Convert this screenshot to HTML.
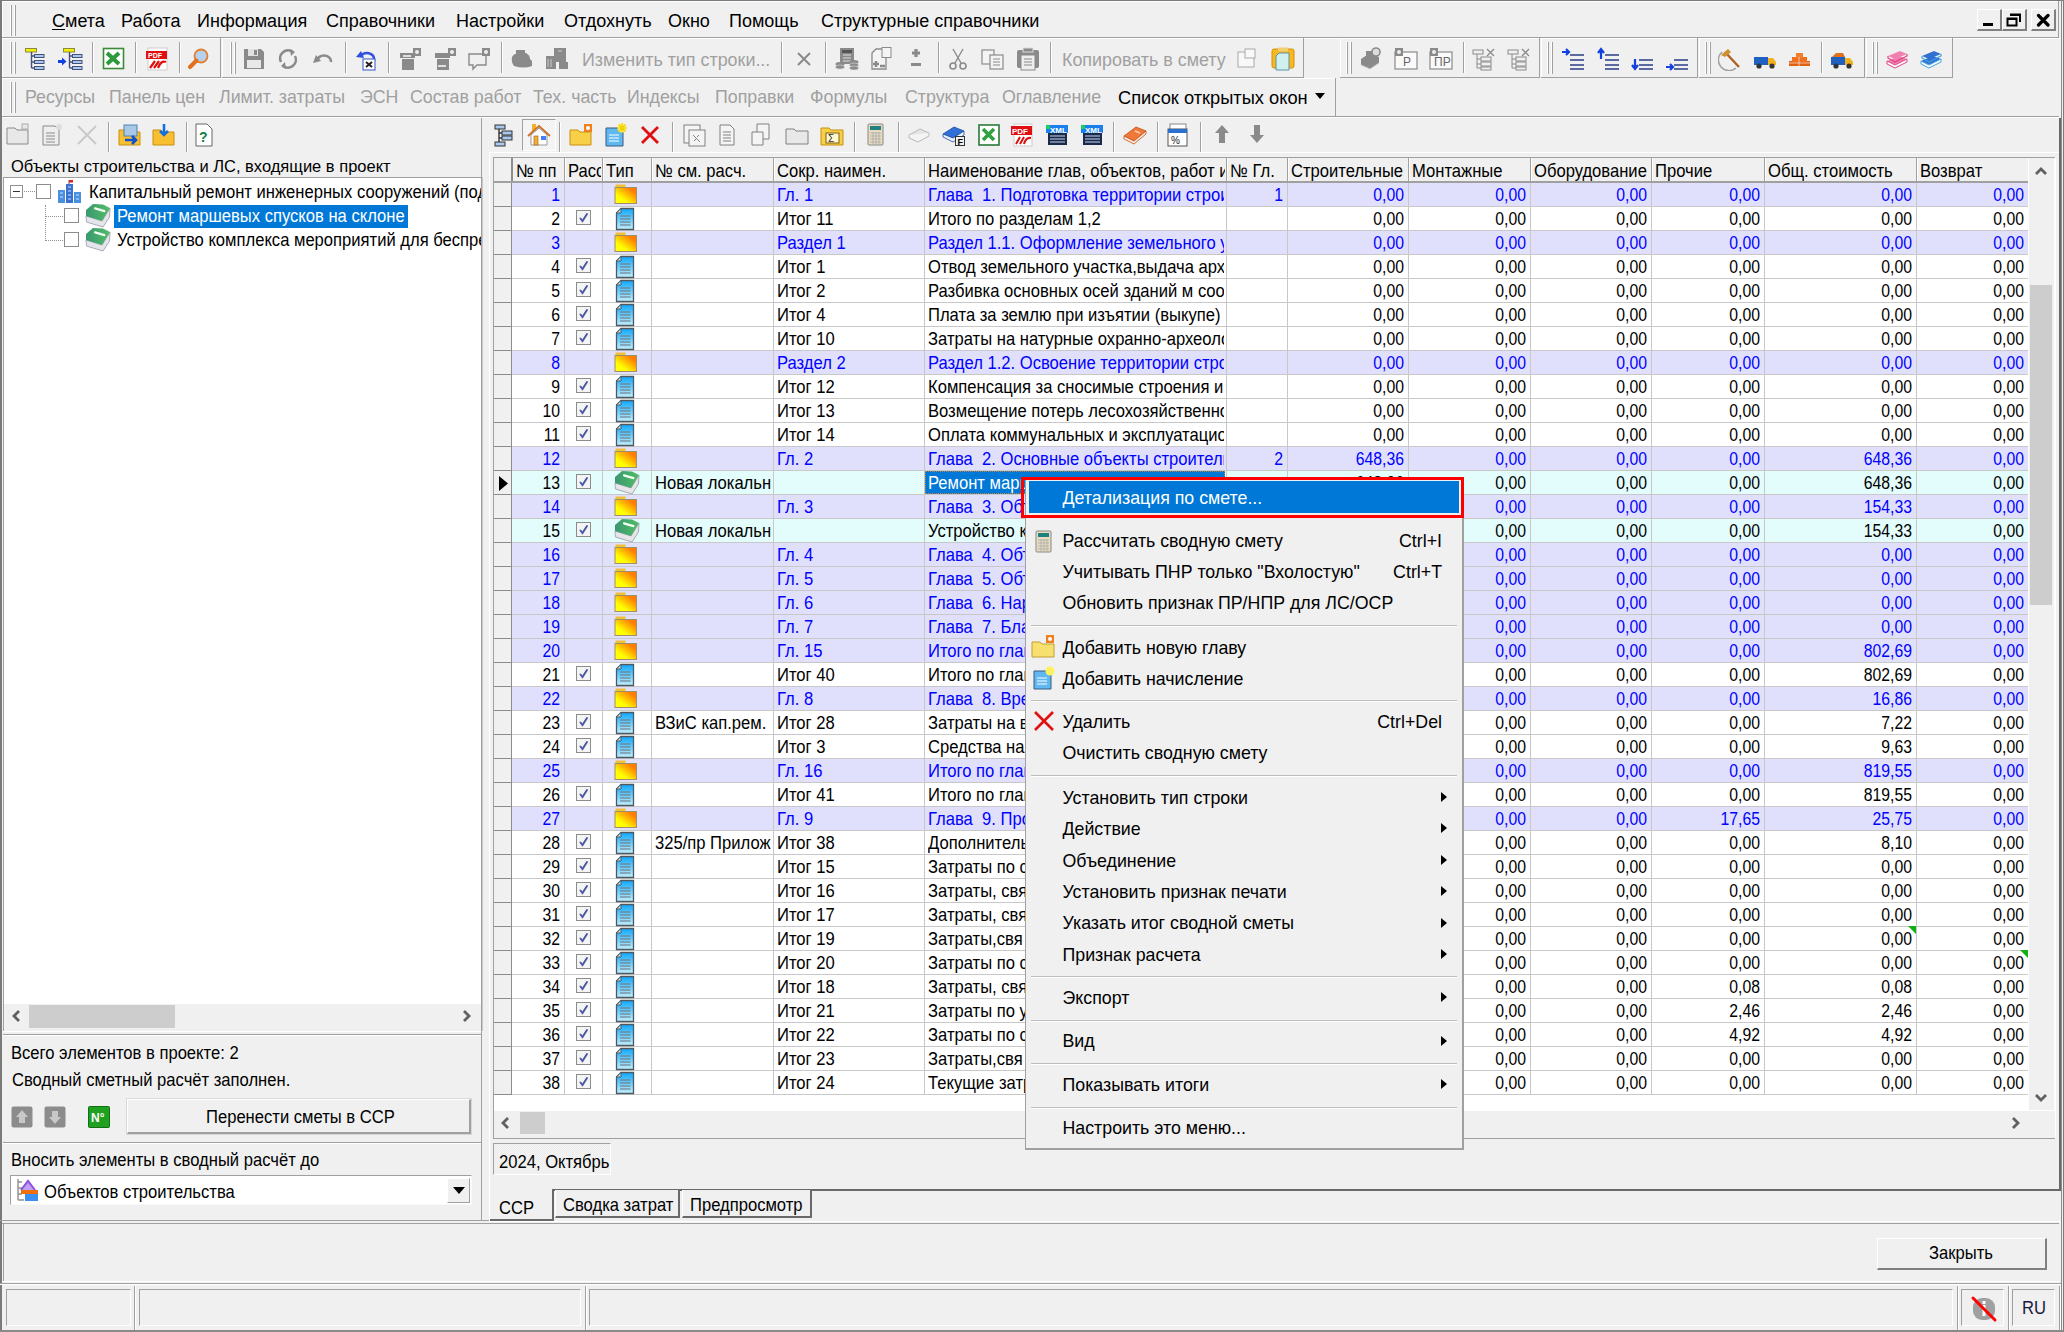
<!DOCTYPE html>
<html><head><meta charset="utf-8"><title>ССР</title>
<style>
*{margin:0;padding:0;box-sizing:border-box}
html,body{width:2064px;height:1332px;overflow:hidden}
body{position:relative;background:#f0f0f0;font-family:"Liberation Sans",sans-serif}
.a{position:absolute}
.t{position:absolute;white-space:nowrap;line-height:1;color:#000}
u{text-decoration:underline;text-underline-offset:2px}
</style></head><body>
<div class="a" style="left:0px;top:0px;width:2064px;height:1px;background:#7a7a7a"></div>
<div class="a" style="left:0px;top:0px;width:2px;height:1332px;background:#7a7a7a"></div>
<div class="a" style="left:2061px;top:0px;width:1px;height:1332px;background:#8a8a8a"></div>
<div class="a" style="left:2063px;top:0px;width:1px;height:1332px;background:#7a7a7a"></div>
<div class="a" style="left:0px;top:1330px;width:2064px;height:2px;background:#8a8a8a"></div>
<div class="a" style="left:2px;top:1px;width:2057px;height:1px;background:#fff"></div>
<div class="a" style="left:2px;top:1px;width:1px;height:37px;background:#fff"></div>
<div class="a" style="left:2px;top:37px;width:2057px;height:1px;background:#a0a0a0"></div>
<div class="a" style="left:2058px;top:1px;width:1px;height:37px;background:#a0a0a0"></div>
<div class="a" style="left:10px;top:5px;width:1px;height:31px;background:#fff"></div>
<div class="a" style="left:11px;top:5px;width:1px;height:31px;background:#a0a0a0"></div>
<div class="a" style="left:14px;top:5px;width:1px;height:31px;background:#fff"></div>
<div class="a" style="left:15px;top:5px;width:1px;height:31px;background:#a0a0a0"></div>
<div class="t" style="left:52px;top:12.36px;font-size:18px;color:#000;"><u>С</u>мета</div>
<div class="t" style="left:121px;top:12.36px;font-size:18px;color:#000;">Работа</div>
<div class="t" style="left:197px;top:12.36px;font-size:18px;color:#000;">Информация</div>
<div class="t" style="left:326px;top:12.36px;font-size:18px;color:#000;">Справочники</div>
<div class="t" style="left:456px;top:12.36px;font-size:18px;color:#000;">Настройки</div>
<div class="t" style="left:564px;top:12.36px;font-size:18px;color:#000;">Отдохнуть</div>
<div class="t" style="left:668px;top:12.36px;font-size:18px;color:#000;">Окно</div>
<div class="t" style="left:729px;top:12.36px;font-size:18px;color:#000;">Помощь</div>
<div class="t" style="left:821px;top:12.36px;font-size:18px;color:#000;">Структурные справочники</div>
<div class="a" style="left:1977px;top:9px;width:25px;height:22px;background:#f0f0f0;border-top:1px solid #fff;border-left:1px solid #fff;border-right:2px solid #808080;border-bottom:2px solid #808080"></div>
<div class="a" style="left:2002px;top:9px;width:25px;height:22px;background:#f0f0f0;border-top:1px solid #fff;border-left:1px solid #fff;border-right:2px solid #808080;border-bottom:2px solid #808080"></div>
<div class="a" style="left:2031px;top:9px;width:25px;height:22px;background:#f0f0f0;border-top:1px solid #fff;border-left:1px solid #fff;border-right:2px solid #808080;border-bottom:2px solid #808080"></div>
<div class="a" style="left:1983px;top:23px;width:10px;height:3px;background:#000"></div>
<svg class="a" style="left:2006px;top:13px;" width="16" height="14" viewBox="0 0 16 14"><path d="M4 1.5 H14 V9 M1.5 5.5 H10.5 V12.5 H1.5 Z" stroke="#000" stroke-width="2" fill="none"/><rect x="4" y="1" width="10" height="2" fill="#000"/><rect x="1" y="5" width="9" height="2" fill="#000"/></svg>
<svg class="a" style="left:2036px;top:13px;" width="15" height="14" viewBox="0 0 15 14"><path d="M2.5 2.5 L12 12 M12 2.5 L2.5 12" stroke="#000" stroke-width="3.2" stroke-linecap="round"/></svg>
<div class="a" style="left:2px;top:38px;width:2057px;height:1px;background:#fff"></div>
<div class="a" style="left:2px;top:38px;width:219px;height:40px;background:#f0f0f0"></div>
<div class="a" style="left:2px;top:38px;width:219px;height:1px;background:#fff"></div>
<div class="a" style="left:2px;top:38px;width:1px;height:40px;background:#fff"></div>
<div class="a" style="left:2px;top:77px;width:219px;height:1px;background:#a0a0a0"></div>
<div class="a" style="left:220px;top:38px;width:1px;height:40px;background:#a0a0a0"></div>
<div class="a" style="left:10px;top:42px;width:1px;height:32px;background:#fff"></div>
<div class="a" style="left:11px;top:42px;width:1px;height:32px;background:#a0a0a0"></div>
<div class="a" style="left:14px;top:42px;width:1px;height:32px;background:#fff"></div>
<div class="a" style="left:15px;top:42px;width:1px;height:32px;background:#a0a0a0"></div>
<svg class="a" style="left:23px;top:47px;" width="28" height="24" viewBox="0 0 28 24"><rect x="2.5" y="1.5" width="11" height="3.5" fill="#f0f000" stroke="#8a8a40" stroke-width="1"/><path d="M8.5 5 V21 M8.5 9 H11 M8.5 15 H11 M8.5 21 H11" stroke="#44507a" stroke-width="1.4" fill="none"/><rect x="11.5" y="7.5" width="9.5" height="3" fill="#a8c8f0" stroke="#44507a" stroke-width="1"/><rect x="11.5" y="13.5" width="9.5" height="3" fill="#a8c8f0" stroke="#44507a" stroke-width="1"/><rect x="11.5" y="19.5" width="9.5" height="3" fill="#a8c8f0" stroke="#44507a" stroke-width="1"/></svg>
<svg class="a" style="left:56px;top:47px;" width="28" height="24" viewBox="0 0 28 24"><rect x="7.5" y="1.5" width="11" height="3.5" fill="#f0f000" stroke="#8a8a40" stroke-width="1"/><path d="M13.5 5 V21 M13.5 9 H16 M13.5 15 H16 M13.5 21 H16" stroke="#44507a" stroke-width="1.4" fill="none"/><rect x="16.5" y="7.5" width="9.5" height="3" fill="#a8c8f0" stroke="#44507a" stroke-width="1"/><rect x="16.5" y="13.5" width="9.5" height="3" fill="#a8c8f0" stroke="#44507a" stroke-width="1"/><rect x="16.5" y="19.5" width="9.5" height="3" fill="#a8c8f0" stroke="#44507a" stroke-width="1"/><path d="M2 14.5 H7" stroke="#1040e0" stroke-width="3"/><path d="M6 10.5 L10.5 14.5 L6 18.5 Z" fill="#1040e0"/></svg>
<div class="a" style="left:92px;top:42px;width:1px;height:31px;background:#a0a0a0"></div>
<div class="a" style="left:93px;top:42px;width:1px;height:31px;background:#fff"></div>
<svg class="a" style="left:102px;top:47px;" width="24" height="24" viewBox="0 0 24 24"><rect x="1.5" y="1.5" width="20" height="20" fill="#fff" stroke="#3a8a3a" stroke-width="1.6"/><path d="M5 6 L17 17 M17 6 L5 17" stroke="#2a9a3a" stroke-width="4"/></svg>
<div class="a" style="left:135px;top:42px;width:1px;height:31px;background:#a0a0a0"></div>
<div class="a" style="left:136px;top:42px;width:1px;height:31px;background:#fff"></div>
<svg class="a" style="left:145px;top:47px;" width="24" height="24" viewBox="0 0 24 24"><rect x="3" y="1" width="19" height="22" fill="#fff" stroke="#ccc"/><rect x="1" y="4" width="21" height="8" fill="#e01010"/><text x="3" y="11" font-size="7" font-family="Liberation Sans" font-weight="bold" fill="#fff">PDF</text><path d="M5 21 L10 14 M9 21 L14 14 M13 21 Q16 13 21 15" stroke="#e01010" stroke-width="2.2" fill="none"/></svg>
<div class="a" style="left:179px;top:42px;width:1px;height:31px;background:#a0a0a0"></div>
<div class="a" style="left:180px;top:42px;width:1px;height:31px;background:#fff"></div>
<svg class="a" style="left:187px;top:47px;" width="24" height="24" viewBox="0 0 24 24"><circle cx="14" cy="9" r="6.5" fill="#b8d0f0" stroke="#e08030" stroke-width="1.8"/><path d="M9.5 13.5 L3 20" stroke="#e07020" stroke-width="4" stroke-linecap="round"/></svg>
<div class="a" style="left:222px;top:38px;width:1082px;height:40px;background:#f0f0f0"></div>
<div class="a" style="left:222px;top:38px;width:1082px;height:1px;background:#fff"></div>
<div class="a" style="left:222px;top:38px;width:1px;height:40px;background:#fff"></div>
<div class="a" style="left:222px;top:77px;width:1082px;height:1px;background:#a0a0a0"></div>
<div class="a" style="left:1303px;top:38px;width:1px;height:40px;background:#a0a0a0"></div>
<div class="a" style="left:230px;top:42px;width:1px;height:32px;background:#fff"></div>
<div class="a" style="left:231px;top:42px;width:1px;height:32px;background:#a0a0a0"></div>
<div class="a" style="left:234px;top:42px;width:1px;height:32px;background:#fff"></div>
<div class="a" style="left:235px;top:42px;width:1px;height:32px;background:#a0a0a0"></div>
<svg class="a" style="left:242px;top:47px;" width="24" height="24" viewBox="0 0 24 24"><path d="M2 2 H19 L22 5 V22 H2 Z" fill="#8a8a8a"/><rect x="6" y="2" width="10" height="7" fill="#e0e0e0"/><rect x="12" y="3" width="3" height="5" fill="#8a8a8a"/><rect x="5" y="13" width="14" height="8" fill="#e8e8e8"/></svg>
<svg class="a" style="left:276px;top:47px;" width="24" height="24" viewBox="0 0 24 24"><path d="M5 15 A8 8 0 0 1 17 5 M19 9 A8 8 0 0 1 7 19" stroke="#8a8a8a" stroke-width="2.6" fill="none"/><path d="M14 2 L19 5 L15 9 Z M10 22 L5 19 L9 15 Z" fill="#8a8a8a"/></svg>
<svg class="a" style="left:311px;top:47px;" width="24" height="24" viewBox="0 0 24 24"><path d="M6 14 A7 6 0 0 1 20 15" stroke="#8a8a8a" stroke-width="2.6" fill="none"/><path d="M2 16 L5 8 L10 14 Z" fill="#8a8a8a"/></svg>
<div class="a" style="left:345px;top:42px;width:1px;height:31px;background:#a0a0a0"></div>
<div class="a" style="left:346px;top:42px;width:1px;height:31px;background:#fff"></div>
<svg class="a" style="left:355px;top:47px;" width="24" height="24" viewBox="0 0 24 24"><path d="M6 9 A7 6 0 0 1 19 12 V14" stroke="#3050e0" stroke-width="2.6" fill="none"/><path d="M1 10 L6 4 L9 11 Z" fill="#3050e0"/><rect x="8" y="12" width="12" height="11" fill="#fff" stroke="#5070d0" stroke-width="1.2"/><path d="M11 15 L17 20 M17 15 L11 20" stroke="#222" stroke-width="2"/></svg>
<div class="a" style="left:388px;top:42px;width:1px;height:31px;background:#a0a0a0"></div>
<div class="a" style="left:389px;top:42px;width:1px;height:31px;background:#fff"></div>
<svg class="a" style="left:398px;top:47px;" width="24" height="24" viewBox="0 0 24 24"><rect x="2" y="6" width="15" height="5" fill="#8a8a8a"/><rect x="4" y="12" width="12" height="11" fill="#8a8a8a"/><rect x="5" y="8" width="8" height="2" fill="#e0e0e0"/><rect x="15" y="1" width="8" height="8" fill="#8a8a8a"/><circle cx="19" cy="5" r="2" fill="#eee"/></svg>
<svg class="a" style="left:433px;top:47px;" width="24" height="24" viewBox="0 0 24 24"><rect x="2" y="6" width="15" height="5" fill="#8a8a8a"/><rect x="4" y="12" width="12" height="11" fill="#8a8a8a"/><rect x="5" y="18" width="8" height="2" fill="#e0e0e0"/><rect x="15" y="1" width="8" height="8" fill="#8a8a8a"/><circle cx="19" cy="5" r="2" fill="#eee"/></svg>
<svg class="a" style="left:467px;top:47px;" width="24" height="24" viewBox="0 0 24 24"><path d="M2 7 H19 V18 H10 L6 22 V18 H2 Z" fill="none" stroke="#8a8a8a" stroke-width="1.4"/><rect x="15" y="1" width="8" height="8" fill="#8a8a8a"/><circle cx="19" cy="5" r="2" fill="#eee"/></svg>
<div class="a" style="left:501px;top:42px;width:1px;height:31px;background:#a0a0a0"></div>
<div class="a" style="left:502px;top:42px;width:1px;height:31px;background:#fff"></div>
<svg class="a" style="left:510px;top:47px;" width="24" height="24" viewBox="0 0 24 24"><path d="M2 10 Q4 6 10 6 H16 Q20 8 20 12 L22 14 V19 Q14 22 4 19 Q1 15 2 10 Z" fill="#8a8a8a"/><rect x="6" y="3" width="9" height="4" fill="#8a8a8a"/></svg>
<svg class="a" style="left:545px;top:47px;" width="24" height="24" viewBox="0 0 24 24"><rect x="9" y="1" width="12" height="14" fill="#8a8a8a"/><rect x="1" y="9" width="10" height="13" fill="#8a8a8a"/><rect x="14" y="15" width="9" height="7" fill="#8a8a8a"/><path d="M3 12 V20 M6 12 V20 M13 4 H17" stroke="#ccc"/></svg>
<div class="t" style="left:582px;top:51.85px;font-size:17.9px;color:#a0a0a0;">Изменить тип строки...</div>
<div class="a" style="left:781px;top:42px;width:1px;height:31px;background:#a0a0a0"></div>
<div class="a" style="left:782px;top:42px;width:1px;height:31px;background:#fff"></div>
<svg class="a" style="left:795px;top:50px;" width="18" height="18" viewBox="0 0 18 18"><path d="M3 3 L15 15 M15 3 L3 15" stroke="#8a8a8a" stroke-width="2"/></svg>
<div class="a" style="left:825px;top:42px;width:1px;height:31px;background:#a0a0a0"></div>
<div class="a" style="left:826px;top:42px;width:1px;height:31px;background:#fff"></div>
<svg class="a" style="left:835px;top:47px;" width="24" height="24" viewBox="0 0 24 24"><rect x="5" y="1" width="14" height="16" fill="#8a8a8a"/><rect x="7" y="3" width="10" height="3" fill="#555"/><path d="M8 8 H16 M8 11 H16 M8 14 H16" stroke="#ddd" stroke-width="1"/><ellipse cx="5" cy="17" rx="4.5" ry="2" fill="#8a8a8a"/><ellipse cx="5" cy="20" rx="4.5" ry="2" fill="#8a8a8a" stroke="#ddd" stroke-width=".6"/><ellipse cx="19" cy="15" rx="4.5" ry="2" fill="#8a8a8a"/><ellipse cx="19" cy="18" rx="4.5" ry="2" fill="#8a8a8a" stroke="#ddd" stroke-width=".6"/><ellipse cx="19" cy="21" rx="4.5" ry="2" fill="#8a8a8a" stroke="#ddd" stroke-width=".6"/></svg>
<svg class="a" style="left:870px;top:47px;" width="24" height="24" viewBox="0 0 24 24"><path d="M2 6 L6 2 H16 V22 H2 Z" fill="#f4f4f4" stroke="#8a8a8a" stroke-width="1.3"/><rect x="12" y="0.5" width="9" height="10" fill="#f4f4f4" stroke="#8a8a8a"/><path d="M3 17 H9 M6 14 V20 M10 19 H15" stroke="#8a8a8a" stroke-width="2.4"/></svg>
<svg class="a" style="left:906px;top:48px;" width="20" height="24" viewBox="0 0 20 24"><path d="M6 5 H14 M10 1 V9" stroke="#8a8a8a" stroke-width="3.2"/><rect x="5" y="15" width="10" height="3" fill="#8a8a8a"/></svg>
<div class="a" style="left:938px;top:42px;width:1px;height:31px;background:#a0a0a0"></div>
<div class="a" style="left:939px;top:42px;width:1px;height:31px;background:#fff"></div>
<svg class="a" style="left:947px;top:47px;" width="24" height="24" viewBox="0 0 24 24"><path d="M6 2 L14 16 M16 2 L8 16" stroke="#8a8a8a" stroke-width="1.4" fill="none"/><circle cx="6" cy="19" r="3" fill="none" stroke="#8a8a8a" stroke-width="1.6"/><circle cx="16" cy="19" r="3" fill="none" stroke="#8a8a8a" stroke-width="1.6"/></svg>
<svg class="a" style="left:981px;top:47px;" width="24" height="24" viewBox="0 0 24 24"><rect x="1" y="3" width="12" height="14" fill="#f4f4f4" stroke="#8a8a8a" stroke-width="1.2"/><rect x="9" y="8" width="13" height="14" fill="#f4f4f4" stroke="#8a8a8a" stroke-width="1.2"/><path d="M12 12 H19 M12 15 H19 M12 18 H19" stroke="#8a8a8a"/></svg>
<svg class="a" style="left:1016px;top:47px;" width="24" height="24" viewBox="0 0 24 24"><rect x="1" y="3" width="22" height="18" rx="2" fill="#8a8a8a"/><rect x="7" y="1" width="10" height="4" fill="#8a8a8a" stroke="#ddd"/><rect x="5" y="8" width="14" height="15" fill="#eee" stroke="#8a8a8a"/><path d="M8 12 H16 M8 15 H16 M8 18 H16" stroke="#8a8a8a"/></svg>
<div class="a" style="left:1050px;top:42px;width:1px;height:31px;background:#a0a0a0"></div>
<div class="a" style="left:1051px;top:42px;width:1px;height:31px;background:#fff"></div>
<div class="t" style="left:1062px;top:51.85px;font-size:17.9px;color:#a0a0a0;">Копировать в смету</div>
<svg class="a" style="left:1236px;top:47px;" width="24" height="24" viewBox="0 0 24 24"><rect x="2" y="5" width="16" height="15" fill="#f8f8f8" stroke="#a8a8a8"/><rect x="9" y="2" width="10" height="9" fill="#f8f8f8" stroke="#a8a8a8"/></svg>
<svg class="a" style="left:1271px;top:47px;" width="24" height="24" viewBox="0 0 24 24"><rect x="1" y="2" width="22" height="19" rx="2" fill="#f8b820" stroke="#d89010"/><rect x="7" y="0.5" width="10" height="4" rx="1" fill="#f0d070"/><path d="M5 9 L8 6 H18 V23 H5 Z" fill="#d0f0f0" stroke="#6090a0"/></svg>
<div class="a" style="left:1340px;top:38px;width:200px;height:40px;background:#f0f0f0"></div>
<div class="a" style="left:1340px;top:38px;width:200px;height:1px;background:#fff"></div>
<div class="a" style="left:1340px;top:38px;width:1px;height:40px;background:#fff"></div>
<div class="a" style="left:1340px;top:77px;width:200px;height:1px;background:#a0a0a0"></div>
<div class="a" style="left:1539px;top:38px;width:1px;height:40px;background:#a0a0a0"></div>
<div class="a" style="left:1346px;top:42px;width:1px;height:32px;background:#fff"></div>
<div class="a" style="left:1347px;top:42px;width:1px;height:32px;background:#a0a0a0"></div>
<div class="a" style="left:1350px;top:42px;width:1px;height:32px;background:#fff"></div>
<div class="a" style="left:1351px;top:42px;width:1px;height:32px;background:#a0a0a0"></div>
<svg class="a" style="left:1358px;top:47px;" width="26" height="24" viewBox="0 0 26 24"><path d="M3 12 L12 6 L21 10 V16 L12 22 L3 18 Z" fill="#8a8a8a"/><path d="M3 18 L12 22 L21 16" stroke="#ccc" fill="none"/><rect x="8" y="4" width="6" height="5" fill="#8a8a8a"/><circle cx="18" cy="5" r="4" fill="#ddd" stroke="#8a8a8a" stroke-width="1.6"/></svg>
<svg class="a" style="left:1394px;top:47px;" width="24" height="24" viewBox="0 0 24 24"><rect x="1" y="5" width="22" height="17" fill="#fafafa" stroke="#8a8a8a" stroke-width="1.2"/><rect x="1" y="1" width="8" height="8" fill="#8a8a8a"/><circle cx="5" cy="5" r="2" fill="#eee"/><text x="9" y="19" font-size="12" font-family="Liberation Sans" fill="#666">P</text></svg>
<svg class="a" style="left:1429px;top:47px;" width="24" height="24" viewBox="0 0 24 24"><rect x="1" y="5" width="22" height="17" fill="#fafafa" stroke="#8a8a8a" stroke-width="1.2"/><rect x="1" y="1" width="8" height="8" fill="#8a8a8a"/><circle cx="5" cy="5" r="2" fill="#eee"/><text x="5" y="19" font-size="12" font-family="Liberation Sans" fill="#666">ПР</text></svg>
<div class="a" style="left:1463px;top:42px;width:1px;height:31px;background:#a0a0a0"></div>
<div class="a" style="left:1464px;top:42px;width:1px;height:31px;background:#fff"></div>
<svg class="a" style="left:1472px;top:47px;" width="24" height="24" viewBox="0 0 24 24"><rect x="1" y="3" width="10" height="4" fill="none" stroke="#8a8a8a"/><path d="M5 7 V21 M5 12 H9 M5 17 H9 M5 21 H9" stroke="#8a8a8a"/><rect x="9" y="10" width="10" height="4" fill="none" stroke="#8a8a8a"/><rect x="9" y="15" width="10" height="4" fill="none" stroke="#8a8a8a"/><rect x="9" y="20" width="10" height="3" fill="none" stroke="#8a8a8a"/><path d="M15 2 L22 9 M22 2 L15 9" stroke="#8a8a8a" stroke-width="1.3"/></svg>
<svg class="a" style="left:1507px;top:47px;" width="24" height="24" viewBox="0 0 24 24"><rect x="1" y="3" width="10" height="4" fill="none" stroke="#8a8a8a"/><path d="M5 7 V21 M5 12 H9 M5 17 H9 M5 21 H9" stroke="#8a8a8a"/><rect x="9" y="10" width="10" height="4" fill="none" stroke="#8a8a8a"/><rect x="9" y="15" width="10" height="4" fill="none" stroke="#8a8a8a"/><rect x="9" y="20" width="10" height="3" fill="none" stroke="#8a8a8a"/><path d="M15 2 L22 9 M22 2 L15 9" stroke="#8a8a8a" stroke-width="1.3"/></svg>
<div class="a" style="left:1541px;top:38px;width:157px;height:40px;background:#f0f0f0"></div>
<div class="a" style="left:1541px;top:38px;width:157px;height:1px;background:#fff"></div>
<div class="a" style="left:1541px;top:38px;width:1px;height:40px;background:#fff"></div>
<div class="a" style="left:1541px;top:77px;width:157px;height:1px;background:#a0a0a0"></div>
<div class="a" style="left:1697px;top:38px;width:1px;height:40px;background:#a0a0a0"></div>
<div class="a" style="left:1547px;top:42px;width:1px;height:32px;background:#fff"></div>
<div class="a" style="left:1548px;top:42px;width:1px;height:32px;background:#a0a0a0"></div>
<div class="a" style="left:1551px;top:42px;width:1px;height:32px;background:#fff"></div>
<div class="a" style="left:1552px;top:42px;width:1px;height:32px;background:#a0a0a0"></div>
<svg class="a" style="left:1561px;top:47px;" width="24" height="24" viewBox="0 0 24 24"><path d="M9 8 H23 M9 13 H23 M9 18 H23 M9 22 H23" stroke="#5a6aa0" stroke-width="1.8"/><path d="M1 5 H8 M5 2 L8 5 L5 8" stroke="#1040e0" stroke-width="2.2" fill="none"/></svg>
<svg class="a" style="left:1596px;top:47px;" width="24" height="24" viewBox="0 0 24 24"><path d="M9 8 H23 M9 13 H23 M9 18 H23 M9 22 H23" stroke="#5a6aa0" stroke-width="1.8"/><path d="M5 12 V3 M2 6 L5 2 L8 6" stroke="#1040e0" stroke-width="2.2" fill="none"/></svg>
<svg class="a" style="left:1630px;top:47px;" width="24" height="24" viewBox="0 0 24 24"><path d="M9 13 H23 M9 18 H23 M9 22 H23" stroke="#5a6aa0" stroke-width="1.8"/><path d="M5 12 V22 M2 18 L5 22 L8 18" stroke="#1040e0" stroke-width="2.2" fill="none"/></svg>
<svg class="a" style="left:1665px;top:47px;" width="24" height="24" viewBox="0 0 24 24"><path d="M9 13 H23 M9 18 H23 M9 22 H23" stroke="#5a6aa0" stroke-width="1.8"/><path d="M1 20 H8 M5 17 L8 20 L5 23" stroke="#1040e0" stroke-width="2.2" fill="none"/></svg>
<div class="a" style="left:1699px;top:38px;width:166px;height:40px;background:#f0f0f0"></div>
<div class="a" style="left:1699px;top:38px;width:166px;height:1px;background:#fff"></div>
<div class="a" style="left:1699px;top:38px;width:1px;height:40px;background:#fff"></div>
<div class="a" style="left:1699px;top:77px;width:166px;height:1px;background:#a0a0a0"></div>
<div class="a" style="left:1864px;top:38px;width:1px;height:40px;background:#a0a0a0"></div>
<div class="a" style="left:1705px;top:42px;width:1px;height:32px;background:#fff"></div>
<div class="a" style="left:1706px;top:42px;width:1px;height:32px;background:#a0a0a0"></div>
<div class="a" style="left:1709px;top:42px;width:1px;height:32px;background:#fff"></div>
<div class="a" style="left:1710px;top:42px;width:1px;height:32px;background:#a0a0a0"></div>
<svg class="a" style="left:1718px;top:47px;" width="24" height="24" viewBox="0 0 24 24"><path d="M4 5 A10 10 0 0 0 18 21" stroke="#a0a0a0" stroke-width="1.5" fill="none"/><path d="M7 5 L21 20" stroke="#b06020" stroke-width="2.4"/><path d="M3 8 L10 2 L13 5 L7 10 Z" fill="#d09030"/></svg>
<svg class="a" style="left:1753px;top:47px;" width="24" height="24" viewBox="0 0 24 24"><rect x="1" y="10" width="14" height="8" fill="#2060c0"/><path d="M15 11 H20 L23 15 V18 H15 Z" fill="#f0b020"/><circle cx="6" cy="19" r="2.6" fill="#333"/><circle cx="19" cy="19" r="2.6" fill="#333"/></svg>
<svg class="a" style="left:1787px;top:47px;" width="26" height="24" viewBox="0 0 26 24"><rect x="2" y="14" width="21" height="5" fill="#e06010"/><rect x="5" y="10" width="15" height="5" fill="#f07020"/><rect x="9" y="6" width="7" height="5" fill="#f08030"/><path d="M2 16 H23 M12 14 V19 M12 10 V14" stroke="#fff" stroke-width=".6"/></svg>
<div class="a" style="left:1821px;top:42px;width:1px;height:31px;background:#a0a0a0"></div>
<div class="a" style="left:1822px;top:42px;width:1px;height:31px;background:#fff"></div>
<svg class="a" style="left:1830px;top:47px;" width="26" height="24" viewBox="0 0 26 24"><path d="M2 10 L6 6 H13 L15 10 Z" fill="#e07020"/><rect x="1" y="10" width="14" height="8" fill="#2060c0"/><path d="M15 11 H20 L23 15 V18 H15 Z" fill="#f0b020"/><circle cx="6" cy="19" r="2.6" fill="#333"/><circle cx="19" cy="19" r="2.6" fill="#333"/></svg>
<div class="a" style="left:1866px;top:38px;width:87px;height:40px;background:#f0f0f0"></div>
<div class="a" style="left:1866px;top:38px;width:87px;height:1px;background:#fff"></div>
<div class="a" style="left:1866px;top:38px;width:1px;height:40px;background:#fff"></div>
<div class="a" style="left:1866px;top:77px;width:87px;height:1px;background:#a0a0a0"></div>
<div class="a" style="left:1952px;top:38px;width:1px;height:40px;background:#a0a0a0"></div>
<div class="a" style="left:1872px;top:42px;width:1px;height:32px;background:#fff"></div>
<div class="a" style="left:1873px;top:42px;width:1px;height:32px;background:#a0a0a0"></div>
<div class="a" style="left:1876px;top:42px;width:1px;height:32px;background:#fff"></div>
<div class="a" style="left:1877px;top:42px;width:1px;height:32px;background:#a0a0a0"></div>
<svg class="a" style="left:1885px;top:47px;" width="24" height="24" viewBox="0 0 24 24"><path d="M2 14 L14 9 L22 12 L10 18 Z" fill="#f080b0"/><path d="M2 14 V17 L10 21 L22 15 V12 L10 18 Z" fill="#fff" stroke="#e04080" stroke-width="1"/><path d="M3 9 L15 4 L22 7 L10 12 Z" fill="#f080b0"/><path d="M3 9 V11 L10 15 L22 9 V7" fill="none" stroke="#e04080" stroke-width="1.2"/></svg>
<svg class="a" style="left:1919px;top:47px;" width="24" height="24" viewBox="0 0 24 24"><path d="M2 14 L14 9 L22 12 L10 18 Z" fill="#3070d0"/><path d="M2 14 V17 L10 21 L22 15 V12 L10 18 Z" fill="#fff" stroke="#40a0e0" stroke-width="1"/><path d="M3 9 L15 4 L22 7 L10 12 Z" fill="#3070d0"/><path d="M3 9 V11 L10 15 L22 9 V7" fill="none" stroke="#40a0e0" stroke-width="1.2"/></svg>
<div class="a" style="left:2px;top:78px;width:1334px;height:39px;background:#f0f0f0"></div>
<div class="a" style="left:2px;top:78px;width:1334px;height:1px;background:#fff"></div>
<div class="a" style="left:2px;top:78px;width:1px;height:39px;background:#fff"></div>
<div class="a" style="left:2px;top:116px;width:1334px;height:1px;background:#a0a0a0"></div>
<div class="a" style="left:1335px;top:78px;width:1px;height:39px;background:#a0a0a0"></div>
<div class="a" style="left:10px;top:82px;width:1px;height:31px;background:#fff"></div>
<div class="a" style="left:11px;top:82px;width:1px;height:31px;background:#a0a0a0"></div>
<div class="a" style="left:14px;top:82px;width:1px;height:31px;background:#fff"></div>
<div class="a" style="left:15px;top:82px;width:1px;height:31px;background:#a0a0a0"></div>
<div class="t" style="left:25px;top:89.33px;font-size:17.8px;color:#a0a0a0;">Ресурсы</div>
<div class="t" style="left:109px;top:89.33px;font-size:17.8px;color:#a0a0a0;">Панель цен</div>
<div class="t" style="left:219px;top:89.33px;font-size:17.8px;color:#a0a0a0;">Лимит. затраты</div>
<div class="t" style="left:360px;top:89.33px;font-size:17.8px;color:#a0a0a0;">ЭСН</div>
<div class="t" style="left:410px;top:89.33px;font-size:17.8px;color:#a0a0a0;">Состав работ</div>
<div class="t" style="left:533px;top:89.33px;font-size:17.8px;color:#a0a0a0;">Тех. часть</div>
<div class="t" style="left:627px;top:89.33px;font-size:17.8px;color:#a0a0a0;">Индексы</div>
<div class="t" style="left:715px;top:89.33px;font-size:17.8px;color:#a0a0a0;">Поправки</div>
<div class="t" style="left:810px;top:89.33px;font-size:17.8px;color:#a0a0a0;">Формулы</div>
<div class="t" style="left:905px;top:89.33px;font-size:17.8px;color:#a0a0a0;">Структура</div>
<div class="t" style="left:1002px;top:89.33px;font-size:17.8px;color:#a0a0a0;">Оглавление</div>
<div class="t" style="left:1118px;top:88.91px;font-size:18.3px;color:#000;">Список открытых окон</div>
<svg class="a" style="left:1315px;top:93px;" width="12" height="8" viewBox="0 0 12 8"><path d="M0 0 H10 L5 6 Z" fill="#000"/></svg>
<div class="a" style="left:2px;top:116px;width:2057px;height:1px;background:#a0a0a0"></div>
<div class="a" style="left:2px;top:117px;width:2057px;height:1px;background:#fff"></div>
<svg class="a" style="left:6px;top:123px;" width="24" height="24" viewBox="0 0 24 24"><path d="M1 5 H9 L11 7 H22 V21 H1 Z" fill="#e8e8e8" stroke="#8a8a8a"/><rect x="16" y="1" width="6" height="5" fill="#e8e8e8" stroke="#aaa"/></svg>
<svg class="a" style="left:40px;top:123px;" width="24" height="24" viewBox="0 0 24 24"><path d="M3 3 H15 L19 7 V22 H3 Z" fill="#eee" stroke="#8a8a8a"/><path d="M6 10 H15 M6 13 H15 M6 16 H15 M6 19 H15" stroke="#8a8a8a"/><circle cx="19" cy="4" r="3" fill="#ddd"/></svg>
<svg class="a" style="left:76px;top:124px;" width="22" height="22" viewBox="0 0 22 22"><path d="M2 2 L20 20 M20 2 L2 20" stroke="#c8c8c8" stroke-width="1.8"/></svg>
<div class="a" style="left:108px;top:122px;width:1px;height:30px;background:#a0a0a0"></div>
<div class="a" style="left:109px;top:122px;width:1px;height:30px;background:#fff"></div>
<svg class="a" style="left:118px;top:123px;" width="24" height="24" viewBox="0 0 24 24"><path d="M1 7 H9 L11 9 H22 V22 H1 Z" fill="#f8c030" stroke="#c89010"/><rect x="6" y="2" width="13" height="11" fill="#a8c8e8" stroke="#5080b0"/><path d="M7 17 H17 M14 13 L18 17 L14 21" stroke="#1050d0" stroke-width="2.6" fill="none"/></svg>
<svg class="a" style="left:152px;top:123px;" width="24" height="24" viewBox="0 0 24 24"><path d="M1 7 H9 L11 9 H22 V22 H1 Z" fill="#f8c030" stroke="#c89010"/><path d="M12 1 V12 M8 8 L12 12 L16 8" stroke="#1070e0" stroke-width="2.6" fill="none"/></svg>
<div class="a" style="left:186px;top:122px;width:1px;height:30px;background:#a0a0a0"></div>
<div class="a" style="left:187px;top:122px;width:1px;height:30px;background:#fff"></div>
<svg class="a" style="left:194px;top:123px;" width="24" height="24" viewBox="0 0 24 24"><path d="M2 1 H13 L18 6 V23 H2 Z" fill="#fff" stroke="#666"/><text x="5" y="19" font-size="14" font-weight="bold" font-family="Liberation Sans" fill="#108040">?</text></svg>
<div class="t" style="left:11px;top:158.33px;font-size:16.5px;color:#000;">Объекты строительства и ЛС, входящие в проект</div>
<div class="a" style="left:4px;top:178px;width:477px;height:826px;background:#fff"></div>
<div class="a" style="left:3px;top:177px;width:479px;height:1px;background:#a0a0a0"></div>
<div class="a" style="left:3px;top:177px;width:1px;height:854px;background:#a0a0a0"></div>
<div class="a" style="left:481px;top:177px;width:1px;height:854px;background:#fff"></div>
<div class="a" style="left:482px;top:177px;width:1px;height:854px;background:#c8c8c8"></div>
<div class="a" style="left:3px;top:1031px;width:480px;height:1px;background:#fff"></div>
<div class="a" style="left:10px;top:185px;width:13px;height:13px;border:1px solid #909090;background:#fff"></div>
<div class="a" style="left:13px;top:191px;width:7px;height:1px;background:#333"></div>
<div class="a" style="left:24px;top:191px;width:11px;height:1px;border-top:1px dotted #909090"></div>
<div class="a" style="left:36px;top:184px;width:15px;height:15px;border:1px solid #8c8c8c;background:#fff"></div>
<svg class="a" style="left:57px;top:180px;" width="25" height="24" viewBox="0 0 25 24"><rect x="9" y="4" width="7" height="19" fill="#3a70d0"/><rect x="1" y="10" width="7" height="13" fill="#4a90e0"/><rect x="17" y="12" width="7" height="11" fill="#4a90e0"/><path d="M11 7 H14 M11 11 H14 M11 15 H14 M11 19 H14 M3 13 H6 M3 17 H6 M19 15 H22 M19 19 H22" stroke="#c8e0ff" stroke-width="1.2"/><path d="M12 4 V0" stroke="#555"/><path d="M12 0 H16 V2.5 H12 Z" fill="#e02020"/></svg>
<div class="t" style="left:89px;top:185.45px;font-size:16.6px;color:#000;transform:scaleY(1.1);transform-origin:0 13.05px;clip-path:inset(0 0 0 0);width:392px;overflow:hidden">Капитальный ремонт инженерных сооружений (подпорных стен)</div>
<div class="a" style="left:45px;top:205px;width:1px;height:36px;border-left:1px dotted #909090"></div>
<div class="a" style="left:45px;top:216px;width:18px;height:1px;border-top:1px dotted #909090"></div>
<div class="a" style="left:45px;top:240px;width:18px;height:1px;border-top:1px dotted #909090"></div>
<div class="a" style="left:64px;top:208px;width:15px;height:15px;border:1px solid #8c8c8c;background:#fff"></div>
<svg class="a" style="left:85px;top:204px;" width="26" height="24" viewBox="0 0 26 24"><path d="M1 12 L17 17 L25 4 L24.5 13 L18 23 L1.5 18 Z" fill="#e6e6ea" stroke="#a8aab8" stroke-width="1"/><path d="M1 6 L8 0 L18 0.5 L25 4 L17 17 L1 12 Z" fill="url(#bg)"/><path d="M10 4.4 L19.4 7.1" stroke="#f0fff0" stroke-width="2.2" stroke-linecap="round"/></svg>
<div class="a" style="left:114px;top:205px;width:294px;height:23px;background:#0078d7"></div>
<div class="t" style="left:117px;top:209.45px;font-size:16.6px;color:#fff;transform:scaleY(1.1);transform-origin:0 13.05px;">Ремонт маршевых спусков на склоне</div>
<div class="a" style="left:64px;top:232px;width:15px;height:15px;border:1px solid #8c8c8c;background:#fff"></div>
<svg class="a" style="left:85px;top:228px;" width="26" height="24" viewBox="0 0 26 24"><path d="M1 12 L17 17 L25 4 L24.5 13 L18 23 L1.5 18 Z" fill="#e6e6ea" stroke="#a8aab8" stroke-width="1"/><path d="M1 6 L8 0 L18 0.5 L25 4 L17 17 L1 12 Z" fill="url(#bg)"/><path d="M10 4.4 L19.4 7.1" stroke="#f0fff0" stroke-width="2.2" stroke-linecap="round"/></svg>
<div class="t" style="left:117px;top:233.45px;font-size:16.6px;color:#000;transform:scaleY(1.1);transform-origin:0 13.05px;width:364px;overflow:hidden">Устройство комплекса мероприятий для беспрепятственного</div>
<div class="a" style="left:4px;top:1004px;width:477px;height:26px;background:#f0f0f0"></div>
<svg class="a" style="left:11px;top:1009px;" width="10" height="14" viewBox="0 0 10 14"><path d="M8 2 L3 7 L8 12" stroke="#606060" stroke-width="2.8" fill="none"/></svg>
<div class="a" style="left:29px;top:1005px;width:146px;height:23px;background:#cdcdcd"></div>
<svg class="a" style="left:462px;top:1009px;" width="10" height="14" viewBox="0 0 10 14"><path d="M2 2 L7 7 L2 12" stroke="#606060" stroke-width="2.8" fill="none"/></svg>
<div class="a" style="left:3px;top:1034px;width:478px;height:1px;background:#a0a0a0"></div>
<div class="a" style="left:3px;top:1035px;width:478px;height:1px;background:#fff"></div>
<div class="t" style="left:11px;top:1045.95px;font-size:16.6px;color:#000;transform:scaleY(1.1);transform-origin:0 13.05px;">Всего элементов в проекте: 2</div>
<div class="t" style="left:12px;top:1072.95px;font-size:16.6px;color:#000;transform:scaleY(1.1);transform-origin:0 13.05px;">Сводный сметный расчёт заполнен.</div>
<svg class="a" style="left:11px;top:1106px;" width="22" height="22" viewBox="0 0 22 22"><rect x="0.5" y="0.5" width="21" height="21" rx="2" fill="#8c8c8c"/><path d="M11 4 L17 11 H14 V17 H8 V11 H5 Z" fill="#c8c8c8"/></svg>
<svg class="a" style="left:44px;top:1106px;" width="22" height="22" viewBox="0 0 22 22"><rect x="0.5" y="0.5" width="21" height="21" rx="2" fill="#8c8c8c"/><path d="M11 18 L17 11 H14 V5 H8 V11 H5 Z" fill="#c8c8c8"/></svg>
<svg class="a" style="left:88px;top:1106px;" width="22" height="22" viewBox="0 0 22 22"><rect x="0.5" y="0.5" width="21" height="21" rx="1" fill="#20a020" stroke="#107010"/><text x="3" y="16" font-size="12" font-family="Liberation Sans" font-weight="bold" fill="#fff">N°</text></svg>
<div class="a" style="left:127px;top:1099px;width:344px;height:35px;background:#f0f0f0;border-top:1px solid #fff;border-left:1px solid #fff;border-right:2px solid #a0a0a0;border-bottom:2px solid #a0a0a0;outline:1px solid #d8d8d8"></div>
<div class="t" style="left:206px;top:1109.95px;font-size:16.6px;color:#000;transform:scaleY(1.1);transform-origin:0 13.05px;">Перенести сметы в ССР</div>
<div class="a" style="left:3px;top:1142px;width:478px;height:1px;background:#a0a0a0"></div>
<div class="a" style="left:3px;top:1143px;width:478px;height:1px;background:#fff"></div>
<div class="t" style="left:11px;top:1152.95px;font-size:16.6px;color:#000;transform:scaleY(1.1);transform-origin:0 13.05px;">Вносить элементы в сводный расчёт до</div>
<div class="a" style="left:10px;top:1175px;width:462px;height:30px;background:#fff;border-top:1px solid #a0a0a0;border-left:1px solid #a0a0a0;border-bottom:1px solid #f8f8f8;border-right:1px solid #f8f8f8"></div>
<svg class="a" style="left:16px;top:1178px;" width="24" height="24" viewBox="0 0 24 24"><path d="M2 1 V22 M2 4 H6 M2 10 H6 M2 16 H6 M2 22 H8" stroke="#909090" stroke-width="1.4"/><path d="M5 12 L12 3 L19 12" stroke="#9050e0" stroke-width="2" fill="#c0a0f0"/><rect x="5" y="12" width="17" height="4" fill="#f07010"/><rect x="9" y="16" width="13" height="7" fill="#3a90f0"/></svg>
<div class="t" style="left:44px;top:1184.95px;font-size:16.6px;color:#000;transform:scaleY(1.1);transform-origin:0 13.05px;">Объектов строительства</div>
<div class="a" style="left:447px;top:1178px;width:23px;height:25px;background:#f0f0f0;border-top:1px solid #fff;border-left:1px solid #fff;border-right:1px solid #a0a0a0;border-bottom:1px solid #a0a0a0"></div>
<svg class="a" style="left:452px;top:1186px;" width="14" height="9" viewBox="0 0 14 9"><path d="M1 1 H13 L7 8 Z" fill="#000"/></svg>
<div class="a" style="left:481px;top:118px;width:1px;height:1103px;background:#a0a0a0"></div>
<div class="a" style="left:489px;top:152px;width:1px;height:1070px;background:#fff"></div>
<svg class="a" style="left:494px;top:124px;" width="20" height="24" viewBox="0 0 20 24"><rect x="1" y="1" width="10" height="4" fill="#a8c8f0" stroke="#333"/><path d="M5 5 V20 M5 9 H8 M5 14 H8" stroke="#333" stroke-width="1.4"/><rect x="8" y="7" width="10" height="4" fill="#a8c8f0" stroke="#333"/><rect x="8" y="12" width="10" height="4" fill="#a8c8f0" stroke="#333"/><rect x="1" y="18" width="10" height="4" fill="#a8c8f0" stroke="#333"/></svg>
<div class="a" style="left:522px;top:119px;width:34px;height:32px;background:repeating-conic-gradient(#f8f8f8 0 25%,#f0f0f0 0 50%) 0 0/2px 2px;border-top:1px solid #a0a0a0;border-left:1px solid #a0a0a0;border-right:1px solid #fff;border-bottom:1px solid #fff"></div>
<svg class="a" style="left:527px;top:123px;" width="24" height="24" viewBox="0 0 24 24"><rect x="5" y="1" width="4" height="7" fill="#f0b030"/><path d="M1 13 L12 3 L23 13" stroke="#d07020" stroke-width="1.8" fill="none"/><path d="M4 12 L12 5 L20 12 V22 H4 Z" fill="#fff" stroke="#999"/><rect x="7" y="13" width="4" height="9" fill="#f0b030" stroke="#a05020" stroke-width=".6"/><rect x="14" y="13" width="5" height="4" fill="#4080ff"/></svg>
<div class="a" style="left:559px;top:122px;width:1px;height:30px;background:#a0a0a0"></div>
<div class="a" style="left:560px;top:122px;width:1px;height:30px;background:#fff"></div>
<svg class="a" style="left:569px;top:123px;" width="24" height="24" viewBox="0 0 24 24"><path d="M1 7 H9 L11 9 H22 V22 H1 Z" fill="#f8d048" stroke="#c89010"/><rect x="15" y="1" width="8" height="8" fill="#f08020"/><circle cx="19" cy="5" r="2" fill="#fff"/></svg>
<svg class="a" style="left:604px;top:123px;" width="24" height="24" viewBox="0 0 24 24"><path d="M2 5 H15 L19 9 V23 H2 Z" fill="#60b8f0" stroke="#3a5a80"/><path d="M5 12 H15 M5 15 H15 M5 18 H15" stroke="#fff"/><circle cx="18" cy="5" r="4.5" fill="#fff060"/><path d="M18 0 V10 M13 5 H23 M14.5 1.5 L21.5 8.5 M21.5 1.5 L14.5 8.5" stroke="#f0d000" stroke-width="1.2"/></svg>
<svg class="a" style="left:639px;top:124px;" width="22" height="22" viewBox="0 0 22 22"><path d="M3 3 L19 19 M19 3 L3 19" stroke="#e01010" stroke-width="2.8"/></svg>
<div class="a" style="left:672px;top:122px;width:1px;height:30px;background:#a0a0a0"></div>
<div class="a" style="left:673px;top:122px;width:1px;height:30px;background:#fff"></div>
<svg class="a" style="left:683px;top:123px;" width="24" height="24" viewBox="0 0 24 24"><rect x="1" y="2" width="16" height="18" fill="#f4f4f4" stroke="#808080"/><rect x="6" y="7" width="16" height="16" fill="#f4f4f4" stroke="#808080"/><path d="M10 12 L17 19 M11 18 L13 16 M16 12 L14 14" stroke="#808080"/></svg>
<svg class="a" style="left:716px;top:123px;" width="24" height="24" viewBox="0 0 24 24"><path d="M4 2 H14 L18 6 V22 H4 Z" fill="#f4f4f4" stroke="#808080"/><path d="M7 9 H15 M7 12 H15 M7 15 H15 M7 18 H15" stroke="#808080"/></svg>
<svg class="a" style="left:751px;top:123px;" width="24" height="24" viewBox="0 0 24 24"><path d="M6 1 H18 V16 H6 Z" fill="#f4f4f4" stroke="#808080"/><path d="M1 9 H12 V22 H1 Z" fill="#f4f4f4" stroke="#808080"/></svg>
<svg class="a" style="left:785px;top:123px;" width="24" height="24" viewBox="0 0 24 24"><path d="M1 6 H9 L11 8 H23 V21 H1 Z" fill="#e8e8e8" stroke="#808080"/></svg>
<svg class="a" style="left:820px;top:123px;" width="24" height="24" viewBox="0 0 24 24"><path d="M1 5 H9 L11 7 H23 V22 H1 Z" fill="#f8d048" stroke="#c89010"/><rect x="6" y="10" width="13" height="10" fill="#fff8d0" stroke="#806010"/><text x="8" y="19" font-size="10" font-family="Liberation Sans" fill="#333">Σ</text></svg>
<div class="a" style="left:854px;top:122px;width:1px;height:30px;background:#a0a0a0"></div>
<div class="a" style="left:855px;top:122px;width:1px;height:30px;background:#fff"></div>
<svg class="a" style="left:866px;top:123px;" width="20" height="24" viewBox="0 0 20 24"><rect x="2" y="1" width="15" height="21" rx="1" fill="#e8dcc0" stroke="#888"/><rect x="4" y="3" width="11" height="4" fill="#208080"/><path d="M4 10 H15 M4 13 H15 M4 16 H15 M4 19 H15 M7 9 V21 M10 9 V21 M13 9 V21" stroke="#aaa" stroke-width=".8"/></svg>
<div class="a" style="left:898px;top:122px;width:1px;height:30px;background:#a0a0a0"></div>
<div class="a" style="left:899px;top:122px;width:1px;height:30px;background:#fff"></div>
<svg class="a" style="left:907px;top:123px;" width="24" height="24" viewBox="0 0 24 24"><path d="M2 12 L13 6 L22 10 L11 16 Z" fill="#e4e4e4" stroke="#b8b8b8"/><path d="M2 12 V15 L11 19 L22 13 V10" fill="#f4f4f4" stroke="#b8b8b8"/></svg>
<svg class="a" style="left:942px;top:123px;" width="24" height="24" viewBox="0 0 24 24"><path d="M1 11 L12 4 L22 8 L11 15 Z" fill="#2f6fd8" stroke="#1a4aa0" stroke-width=".8"/><path d="M1 11 V14 L11 19 L22 12 V8 L11 15 Z" fill="#e8f0ff" stroke="#1a4aa0" stroke-width=".8"/><rect x="13.5" y="13.5" width="9" height="9" fill="#f0f0f0" stroke="#333"/><text x="15.5" y="21.5" font-size="9" font-family="Liberation Sans" font-weight="bold" fill="#000">F</text></svg>
<svg class="a" style="left:977px;top:123px;" width="24" height="24" viewBox="0 0 24 24"><rect x="2" y="2" width="20" height="20" fill="#fff" stroke="#2a7a3a" stroke-width="1.6"/><path d="M6 6 L17 17 M17 6 L6 17" stroke="#30a040" stroke-width="3.6"/></svg>
<svg class="a" style="left:1010px;top:123px;" width="24" height="24" viewBox="0 0 24 24"><rect x="4" y="1" width="18" height="22" fill="#fff" stroke="#ccc"/><rect x="1" y="3" width="21" height="9" fill="#e01010"/><text x="2" y="11" font-size="8" font-family="Liberation Sans" font-weight="bold" fill="#fff">PDF</text><path d="M6 21 L10 14 M10 21 L14 14 M14 21 Q16 14 21 15" stroke="#e01010" stroke-width="2" fill="none"/></svg>
<svg class="a" style="left:1045px;top:123px;" width="24" height="24" viewBox="0 0 24 24"><rect x="3" y="10" width="19" height="12" fill="#1a2a4a"/><rect x="1" y="2" width="22" height="8" fill="#1a80f0"/><text x="5" y="9.5" font-size="8" font-family="Liberation Sans" font-weight="bold" fill="#fff">XML</text><path d="M5 13 H20 M5 16 H20 M5 19 H20" stroke="#c8d8f0" stroke-width="1"/><circle cx="3" cy="4" r="2.2" fill="#20d060"/></svg>
<svg class="a" style="left:1080px;top:123px;" width="24" height="24" viewBox="0 0 24 24"><rect x="3" y="10" width="19" height="12" fill="#1a2a4a"/><rect x="1" y="2" width="22" height="8" fill="#1a80f0"/><text x="5" y="9.5" font-size="8" font-family="Liberation Sans" font-weight="bold" fill="#fff">XML</text><path d="M5 13 H20 M5 16 H20 M5 19 H20" stroke="#c8d8f0" stroke-width="1"/><circle cx="3" cy="4" r="2.2" fill="#20d060"/></svg>
<div class="a" style="left:1113px;top:122px;width:1px;height:30px;background:#a0a0a0"></div>
<div class="a" style="left:1114px;top:122px;width:1px;height:30px;background:#fff"></div>
<svg class="a" style="left:1123px;top:123px;" width="24" height="24" viewBox="0 0 24 24"><path d="M1 13 L13 4 L23 8 L11 18 Z" fill="#f07838" stroke="#c05010" stroke-width=".8"/><path d="M1 13 V16 L11 21 L23 11 V8 L11 18 Z" fill="#f8e8e0" stroke="#c05010" stroke-width=".8"/><path d="M12 8 L17 10" stroke="#ffd0b0" stroke-width="1.4"/></svg>
<div class="a" style="left:1157px;top:122px;width:1px;height:30px;background:#a0a0a0"></div>
<div class="a" style="left:1158px;top:122px;width:1px;height:30px;background:#fff"></div>
<svg class="a" style="left:1166px;top:123px;" width="24" height="24" viewBox="0 0 24 24"><rect x="4" y="1" width="16" height="16" fill="#fff" stroke="#888"/><rect x="2" y="6" width="19" height="17" fill="#fff" stroke="#555"/><rect x="2" y="6" width="19" height="4" fill="#2a70d0"/><text x="5" y="21" font-size="10" font-family="Liberation Sans" fill="#222">%</text></svg>
<div class="a" style="left:1200px;top:122px;width:1px;height:30px;background:#a0a0a0"></div>
<div class="a" style="left:1201px;top:122px;width:1px;height:30px;background:#fff"></div>
<svg class="a" style="left:1212px;top:123px;" width="24" height="24" viewBox="0 0 24 24"><path d="M10 2 L17 10 H13 V20 H7 V10 H3 Z" fill="#8a8a8a"/></svg>
<svg class="a" style="left:1247px;top:123px;" width="24" height="24" viewBox="0 0 24 24"><path d="M10 20 L17 12 H13 V2 H7 V12 H3 Z" fill="#8a8a8a"/></svg>
<svg width="0" height="0" style="position:absolute"><defs><linearGradient id="fg" x1="0" y1="1" x2="1" y2="0"><stop offset="0.3" stop-color="#ffff00"/><stop offset="0.8" stop-color="#ff8000"/></linearGradient><linearGradient id="bg" x1="0" y1="0" x2="1" y2="0"><stop offset="0" stop-color="#3a9870"/><stop offset="1" stop-color="#52bc68"/></linearGradient><linearGradient id="dg" x1="0" y1="0" x2="0" y2="1"><stop offset="0" stop-color="#10a8ff"/><stop offset="1" stop-color="#c0f0ff"/></linearGradient></defs></svg>
<div class="a" style="left:489px;top:152px;width:1571px;height:1px;background:#fff"></div>
<div class="a" style="left:494px;top:158px;width:1561px;height:953px;background:#fff"></div>
<div class="a" style="left:493px;top:157px;width:1562px;height:1px;background:#a0a0a0"></div>
<div class="a" style="left:493px;top:157px;width:1px;height:982px;background:#a0a0a0"></div>
<div class="a" style="left:493px;top:1138px;width:1562px;height:1px;background:#a0a0a0"></div>
<div class="a" style="left:2055px;top:157px;width:1px;height:982px;background:#fff"></div>
<div class="a" style="left:494px;top:158px;width:1534px;height:24px;background:#f0f0f0"></div>
<div class="t" style="left:516px;top:163.95px;font-size:16.6px;width:47px;overflow:hidden;transform:scaleY(1.1);transform-origin:0 13.05px">№ пп</div>
<div class="t" style="left:568px;top:163.95px;font-size:16.6px;width:33px;overflow:hidden;transform:scaleY(1.1);transform-origin:0 13.05px">Рас<span style='letter-spacing:-1px'>с</span></div>
<div class="t" style="left:606px;top:163.95px;font-size:16.6px;width:44px;overflow:hidden;transform:scaleY(1.1);transform-origin:0 13.05px">Тип</div>
<div class="t" style="left:655px;top:163.95px;font-size:16.6px;width:117px;overflow:hidden;transform:scaleY(1.1);transform-origin:0 13.05px">№ см. расч.</div>
<div class="t" style="left:777px;top:163.95px;font-size:16.6px;width:146px;overflow:hidden;transform:scaleY(1.1);transform-origin:0 13.05px">Сокр. наимен.</div>
<div class="t" style="left:928px;top:163.95px;font-size:16.6px;width:297px;overflow:hidden;transform:scaleY(1.1);transform-origin:0 13.05px">Наименование глав, объектов, работ и затрат</div>
<div class="t" style="left:1230px;top:163.95px;font-size:16.6px;width:56px;overflow:hidden;transform:scaleY(1.1);transform-origin:0 13.05px">№ Гл.</div>
<div class="t" style="left:1291px;top:163.95px;font-size:16.6px;width:116px;overflow:hidden;transform:scaleY(1.1);transform-origin:0 13.05px">Строительные</div>
<div class="t" style="left:1412px;top:163.95px;font-size:16.6px;width:117px;overflow:hidden;transform:scaleY(1.1);transform-origin:0 13.05px">Монтажные</div>
<div class="t" style="left:1534px;top:163.95px;font-size:16.6px;width:116px;overflow:hidden;transform:scaleY(1.1);transform-origin:0 13.05px">Оборудование</div>
<div class="t" style="left:1655px;top:163.95px;font-size:16.6px;width:108px;overflow:hidden;transform:scaleY(1.1);transform-origin:0 13.05px">Прочие</div>
<div class="t" style="left:1768px;top:163.95px;font-size:16.6px;width:147px;overflow:hidden;transform:scaleY(1.1);transform-origin:0 13.05px">Общ. стоимость</div>
<div class="t" style="left:1920px;top:163.95px;font-size:16.6px;width:107px;overflow:hidden;transform:scaleY(1.1);transform-origin:0 13.05px">Возврат</div>
<div class="a" style="left:564px;top:158px;width:1px;height:24px;background:#a0a0a0"></div>
<div class="a" style="left:565px;top:158px;width:1px;height:23px;background:#fff"></div>
<div class="a" style="left:602px;top:158px;width:1px;height:24px;background:#a0a0a0"></div>
<div class="a" style="left:603px;top:158px;width:1px;height:23px;background:#fff"></div>
<div class="a" style="left:651px;top:158px;width:1px;height:24px;background:#a0a0a0"></div>
<div class="a" style="left:652px;top:158px;width:1px;height:23px;background:#fff"></div>
<div class="a" style="left:773px;top:158px;width:1px;height:24px;background:#a0a0a0"></div>
<div class="a" style="left:774px;top:158px;width:1px;height:23px;background:#fff"></div>
<div class="a" style="left:924px;top:158px;width:1px;height:24px;background:#a0a0a0"></div>
<div class="a" style="left:925px;top:158px;width:1px;height:23px;background:#fff"></div>
<div class="a" style="left:1226px;top:158px;width:1px;height:24px;background:#a0a0a0"></div>
<div class="a" style="left:1227px;top:158px;width:1px;height:23px;background:#fff"></div>
<div class="a" style="left:1287px;top:158px;width:1px;height:24px;background:#a0a0a0"></div>
<div class="a" style="left:1288px;top:158px;width:1px;height:23px;background:#fff"></div>
<div class="a" style="left:1408px;top:158px;width:1px;height:24px;background:#a0a0a0"></div>
<div class="a" style="left:1409px;top:158px;width:1px;height:23px;background:#fff"></div>
<div class="a" style="left:1530px;top:158px;width:1px;height:24px;background:#a0a0a0"></div>
<div class="a" style="left:1531px;top:158px;width:1px;height:23px;background:#fff"></div>
<div class="a" style="left:1651px;top:158px;width:1px;height:24px;background:#a0a0a0"></div>
<div class="a" style="left:1652px;top:158px;width:1px;height:23px;background:#fff"></div>
<div class="a" style="left:1764px;top:158px;width:1px;height:24px;background:#a0a0a0"></div>
<div class="a" style="left:1765px;top:158px;width:1px;height:23px;background:#fff"></div>
<div class="a" style="left:1916px;top:158px;width:1px;height:24px;background:#a0a0a0"></div>
<div class="a" style="left:1917px;top:158px;width:1px;height:23px;background:#fff"></div>
<div class="a" style="left:511px;top:158px;width:2px;height:937px;background:#8c8c8c"></div>
<div class="a" style="left:494px;top:181px;width:1534px;height:2px;background:#a0a0a0"></div>
<div class="a" style="left:512px;top:183px;width:1516px;height:24px;background:#e0e0fc"></div>
<div class="a" style="left:494px;top:183px;width:17px;height:24px;background:#f0f0f0"></div>
<div class="a" style="left:494px;top:206px;width:17px;height:1px;background:#8c8c8c"></div>
<div class="a" style="left:512px;top:206px;width:1516px;height:1px;background:#c8c8c8"></div>
<div class="t" style="left:512px;top:188.45px;font-size:16.6px;width:48px;text-align:right;color:#0000ff;overflow:hidden;transform:scale(0.95,1.1);transform-origin:100% 13.05px">1</div>
<svg class="a" style="left:614px;top:184px;" width="24" height="20" viewBox="0 0 24 20"><rect x="1.5" y="0.5" width="10" height="2.5" fill="#f0c030"/><rect x="1" y="3.5" width="21.5" height="16" fill="url(#fg)" stroke="#a09070" stroke-width="1"/></svg>
<div class="t" style="left:655px;top:188.45px;font-size:16.6px;width:116px;color:#0000ff;overflow:hidden;transform:scaleY(1.1);transform-origin:0 13.05px"></div>
<div class="t" style="left:777px;top:188.45px;font-size:16.6px;width:145px;color:#0000ff;overflow:hidden;transform:scaleY(1.1);transform-origin:0 13.05px">Гл. 1</div>
<div class="t" style="left:928px;top:188.45px;font-size:16.6px;width:296px;color:#0000ff;overflow:hidden;transform:scaleY(1.1);transform-origin:0 13.05px">Глава&nbsp; 1. Подготовка территории строительства</div>
<div class="t" style="left:1226px;top:188.45px;font-size:16.6px;width:57px;text-align:right;color:#0000ff;overflow:hidden;transform:scale(0.95,1.1);transform-origin:100% 13.05px">1</div>
<div class="t" style="left:1287px;top:188.45px;font-size:16.6px;width:117px;text-align:right;color:#0000ff;overflow:hidden;transform:scale(0.95,1.1);transform-origin:100% 13.05px">0,00</div>
<div class="t" style="left:1408px;top:188.45px;font-size:16.6px;width:118px;text-align:right;color:#0000ff;overflow:hidden;transform:scale(0.95,1.1);transform-origin:100% 13.05px">0,00</div>
<div class="t" style="left:1530px;top:188.45px;font-size:16.6px;width:117px;text-align:right;color:#0000ff;overflow:hidden;transform:scale(0.95,1.1);transform-origin:100% 13.05px">0,00</div>
<div class="t" style="left:1651px;top:188.45px;font-size:16.6px;width:109px;text-align:right;color:#0000ff;overflow:hidden;transform:scale(0.95,1.1);transform-origin:100% 13.05px">0,00</div>
<div class="t" style="left:1764px;top:188.45px;font-size:16.6px;width:148px;text-align:right;color:#0000ff;overflow:hidden;transform:scale(0.95,1.1);transform-origin:100% 13.05px">0,00</div>
<div class="t" style="left:1916px;top:188.45px;font-size:16.6px;width:108px;text-align:right;color:#0000ff;overflow:hidden;transform:scale(0.95,1.1);transform-origin:100% 13.05px">0,00</div>
<div class="a" style="left:512px;top:207px;width:1516px;height:24px;background:#fff"></div>
<div class="a" style="left:494px;top:207px;width:17px;height:24px;background:#f0f0f0"></div>
<div class="a" style="left:494px;top:230px;width:17px;height:1px;background:#8c8c8c"></div>
<div class="a" style="left:512px;top:230px;width:1516px;height:1px;background:#c8c8c8"></div>
<div class="t" style="left:512px;top:212.45px;font-size:16.6px;width:48px;text-align:right;color:#000;overflow:hidden;transform:scale(0.95,1.1);transform-origin:100% 13.05px">2</div>
<div class="a" style="left:576px;top:210px;width:15px;height:15px;border:1px solid #8c8c8c;background:#f4f4f4"></div>
<svg class="a" style="left:578px;top:212px;" width="11" height="11" viewBox="0 0 11 11"><path d="M2.5 6.5 L4.5 9 L9 2" stroke="#4a5aa8" stroke-width="2" fill="none" stroke-linecap="round"/></svg>
<svg class="a" style="left:615px;top:207px;" width="20" height="24" viewBox="0 0 20 24"><path d="M1.5 6 L6 1.5 H18.5 V22.5 H1.5 Z" fill="url(#dg)" stroke="#505860" stroke-width="1.3"/><path d="M1.5 6 L6 1.5 V6 Z" fill="#c0e8f0" stroke="#505860" stroke-width="1"/><path d="M5 9 H15.5 M5 12 H15.5 M5 15 H15.5 M5 18 H15.5" stroke="#707070" stroke-width="1.1"/></svg>
<div class="t" style="left:655px;top:212.45px;font-size:16.6px;width:116px;color:#000;overflow:hidden;transform:scaleY(1.1);transform-origin:0 13.05px"></div>
<div class="t" style="left:777px;top:212.45px;font-size:16.6px;width:145px;color:#000;overflow:hidden;transform:scaleY(1.1);transform-origin:0 13.05px">Итог 11</div>
<div class="t" style="left:928px;top:212.45px;font-size:16.6px;width:296px;color:#000;overflow:hidden;transform:scaleY(1.1);transform-origin:0 13.05px">Итого по разделам 1,2</div>
<div class="t" style="left:1226px;top:212.45px;font-size:16.6px;width:57px;text-align:right;color:#000;overflow:hidden;transform:scale(0.95,1.1);transform-origin:100% 13.05px"></div>
<div class="t" style="left:1287px;top:212.45px;font-size:16.6px;width:117px;text-align:right;color:#000;overflow:hidden;transform:scale(0.95,1.1);transform-origin:100% 13.05px">0,00</div>
<div class="t" style="left:1408px;top:212.45px;font-size:16.6px;width:118px;text-align:right;color:#000;overflow:hidden;transform:scale(0.95,1.1);transform-origin:100% 13.05px">0,00</div>
<div class="t" style="left:1530px;top:212.45px;font-size:16.6px;width:117px;text-align:right;color:#000;overflow:hidden;transform:scale(0.95,1.1);transform-origin:100% 13.05px">0,00</div>
<div class="t" style="left:1651px;top:212.45px;font-size:16.6px;width:109px;text-align:right;color:#000;overflow:hidden;transform:scale(0.95,1.1);transform-origin:100% 13.05px">0,00</div>
<div class="t" style="left:1764px;top:212.45px;font-size:16.6px;width:148px;text-align:right;color:#000;overflow:hidden;transform:scale(0.95,1.1);transform-origin:100% 13.05px">0,00</div>
<div class="t" style="left:1916px;top:212.45px;font-size:16.6px;width:108px;text-align:right;color:#000;overflow:hidden;transform:scale(0.95,1.1);transform-origin:100% 13.05px">0,00</div>
<div class="a" style="left:512px;top:231px;width:1516px;height:24px;background:#e0e0fc"></div>
<div class="a" style="left:494px;top:231px;width:17px;height:24px;background:#f0f0f0"></div>
<div class="a" style="left:494px;top:254px;width:17px;height:1px;background:#8c8c8c"></div>
<div class="a" style="left:512px;top:254px;width:1516px;height:1px;background:#c8c8c8"></div>
<div class="t" style="left:512px;top:236.45px;font-size:16.6px;width:48px;text-align:right;color:#0000ff;overflow:hidden;transform:scale(0.95,1.1);transform-origin:100% 13.05px">3</div>
<svg class="a" style="left:614px;top:232px;" width="24" height="20" viewBox="0 0 24 20"><rect x="1.5" y="0.5" width="10" height="2.5" fill="#f0c030"/><rect x="1" y="3.5" width="21.5" height="16" fill="url(#fg)" stroke="#a09070" stroke-width="1"/></svg>
<div class="t" style="left:655px;top:236.45px;font-size:16.6px;width:116px;color:#0000ff;overflow:hidden;transform:scaleY(1.1);transform-origin:0 13.05px"></div>
<div class="t" style="left:777px;top:236.45px;font-size:16.6px;width:145px;color:#0000ff;overflow:hidden;transform:scaleY(1.1);transform-origin:0 13.05px">Раздел 1</div>
<div class="t" style="left:928px;top:236.45px;font-size:16.6px;width:296px;color:#0000ff;overflow:hidden;transform:scaleY(1.1);transform-origin:0 13.05px">Раздел 1.1. Оформление земельного участка</div>
<div class="t" style="left:1226px;top:236.45px;font-size:16.6px;width:57px;text-align:right;color:#0000ff;overflow:hidden;transform:scale(0.95,1.1);transform-origin:100% 13.05px"></div>
<div class="t" style="left:1287px;top:236.45px;font-size:16.6px;width:117px;text-align:right;color:#0000ff;overflow:hidden;transform:scale(0.95,1.1);transform-origin:100% 13.05px">0,00</div>
<div class="t" style="left:1408px;top:236.45px;font-size:16.6px;width:118px;text-align:right;color:#0000ff;overflow:hidden;transform:scale(0.95,1.1);transform-origin:100% 13.05px">0,00</div>
<div class="t" style="left:1530px;top:236.45px;font-size:16.6px;width:117px;text-align:right;color:#0000ff;overflow:hidden;transform:scale(0.95,1.1);transform-origin:100% 13.05px">0,00</div>
<div class="t" style="left:1651px;top:236.45px;font-size:16.6px;width:109px;text-align:right;color:#0000ff;overflow:hidden;transform:scale(0.95,1.1);transform-origin:100% 13.05px">0,00</div>
<div class="t" style="left:1764px;top:236.45px;font-size:16.6px;width:148px;text-align:right;color:#0000ff;overflow:hidden;transform:scale(0.95,1.1);transform-origin:100% 13.05px">0,00</div>
<div class="t" style="left:1916px;top:236.45px;font-size:16.6px;width:108px;text-align:right;color:#0000ff;overflow:hidden;transform:scale(0.95,1.1);transform-origin:100% 13.05px">0,00</div>
<div class="a" style="left:512px;top:255px;width:1516px;height:24px;background:#fff"></div>
<div class="a" style="left:494px;top:255px;width:17px;height:24px;background:#f0f0f0"></div>
<div class="a" style="left:494px;top:278px;width:17px;height:1px;background:#8c8c8c"></div>
<div class="a" style="left:512px;top:278px;width:1516px;height:1px;background:#c8c8c8"></div>
<div class="t" style="left:512px;top:260.45px;font-size:16.6px;width:48px;text-align:right;color:#000;overflow:hidden;transform:scale(0.95,1.1);transform-origin:100% 13.05px">4</div>
<div class="a" style="left:576px;top:258px;width:15px;height:15px;border:1px solid #8c8c8c;background:#f4f4f4"></div>
<svg class="a" style="left:578px;top:260px;" width="11" height="11" viewBox="0 0 11 11"><path d="M2.5 6.5 L4.5 9 L9 2" stroke="#4a5aa8" stroke-width="2" fill="none" stroke-linecap="round"/></svg>
<svg class="a" style="left:615px;top:255px;" width="20" height="24" viewBox="0 0 20 24"><path d="M1.5 6 L6 1.5 H18.5 V22.5 H1.5 Z" fill="url(#dg)" stroke="#505860" stroke-width="1.3"/><path d="M1.5 6 L6 1.5 V6 Z" fill="#c0e8f0" stroke="#505860" stroke-width="1"/><path d="M5 9 H15.5 M5 12 H15.5 M5 15 H15.5 M5 18 H15.5" stroke="#707070" stroke-width="1.1"/></svg>
<div class="t" style="left:655px;top:260.45px;font-size:16.6px;width:116px;color:#000;overflow:hidden;transform:scaleY(1.1);transform-origin:0 13.05px"></div>
<div class="t" style="left:777px;top:260.45px;font-size:16.6px;width:145px;color:#000;overflow:hidden;transform:scaleY(1.1);transform-origin:0 13.05px">Итог 1</div>
<div class="t" style="left:928px;top:260.45px;font-size:16.6px;width:296px;color:#000;overflow:hidden;transform:scaleY(1.1);transform-origin:0 13.05px">Отвод земельного участка,выдача архитектурно</div>
<div class="t" style="left:1226px;top:260.45px;font-size:16.6px;width:57px;text-align:right;color:#000;overflow:hidden;transform:scale(0.95,1.1);transform-origin:100% 13.05px"></div>
<div class="t" style="left:1287px;top:260.45px;font-size:16.6px;width:117px;text-align:right;color:#000;overflow:hidden;transform:scale(0.95,1.1);transform-origin:100% 13.05px">0,00</div>
<div class="t" style="left:1408px;top:260.45px;font-size:16.6px;width:118px;text-align:right;color:#000;overflow:hidden;transform:scale(0.95,1.1);transform-origin:100% 13.05px">0,00</div>
<div class="t" style="left:1530px;top:260.45px;font-size:16.6px;width:117px;text-align:right;color:#000;overflow:hidden;transform:scale(0.95,1.1);transform-origin:100% 13.05px">0,00</div>
<div class="t" style="left:1651px;top:260.45px;font-size:16.6px;width:109px;text-align:right;color:#000;overflow:hidden;transform:scale(0.95,1.1);transform-origin:100% 13.05px">0,00</div>
<div class="t" style="left:1764px;top:260.45px;font-size:16.6px;width:148px;text-align:right;color:#000;overflow:hidden;transform:scale(0.95,1.1);transform-origin:100% 13.05px">0,00</div>
<div class="t" style="left:1916px;top:260.45px;font-size:16.6px;width:108px;text-align:right;color:#000;overflow:hidden;transform:scale(0.95,1.1);transform-origin:100% 13.05px">0,00</div>
<div class="a" style="left:512px;top:279px;width:1516px;height:24px;background:#fff"></div>
<div class="a" style="left:494px;top:279px;width:17px;height:24px;background:#f0f0f0"></div>
<div class="a" style="left:494px;top:302px;width:17px;height:1px;background:#8c8c8c"></div>
<div class="a" style="left:512px;top:302px;width:1516px;height:1px;background:#c8c8c8"></div>
<div class="t" style="left:512px;top:284.45px;font-size:16.6px;width:48px;text-align:right;color:#000;overflow:hidden;transform:scale(0.95,1.1);transform-origin:100% 13.05px">5</div>
<div class="a" style="left:576px;top:282px;width:15px;height:15px;border:1px solid #8c8c8c;background:#f4f4f4"></div>
<svg class="a" style="left:578px;top:284px;" width="11" height="11" viewBox="0 0 11 11"><path d="M2.5 6.5 L4.5 9 L9 2" stroke="#4a5aa8" stroke-width="2" fill="none" stroke-linecap="round"/></svg>
<svg class="a" style="left:615px;top:279px;" width="20" height="24" viewBox="0 0 20 24"><path d="M1.5 6 L6 1.5 H18.5 V22.5 H1.5 Z" fill="url(#dg)" stroke="#505860" stroke-width="1.3"/><path d="M1.5 6 L6 1.5 V6 Z" fill="#c0e8f0" stroke="#505860" stroke-width="1"/><path d="M5 9 H15.5 M5 12 H15.5 M5 15 H15.5 M5 18 H15.5" stroke="#707070" stroke-width="1.1"/></svg>
<div class="t" style="left:655px;top:284.45px;font-size:16.6px;width:116px;color:#000;overflow:hidden;transform:scaleY(1.1);transform-origin:0 13.05px"></div>
<div class="t" style="left:777px;top:284.45px;font-size:16.6px;width:145px;color:#000;overflow:hidden;transform:scaleY(1.1);transform-origin:0 13.05px">Итог 2</div>
<div class="t" style="left:928px;top:284.45px;font-size:16.6px;width:296px;color:#000;overflow:hidden;transform:scaleY(1.1);transform-origin:0 13.05px">Разбивка основных осей зданий м сооружений</div>
<div class="t" style="left:1226px;top:284.45px;font-size:16.6px;width:57px;text-align:right;color:#000;overflow:hidden;transform:scale(0.95,1.1);transform-origin:100% 13.05px"></div>
<div class="t" style="left:1287px;top:284.45px;font-size:16.6px;width:117px;text-align:right;color:#000;overflow:hidden;transform:scale(0.95,1.1);transform-origin:100% 13.05px">0,00</div>
<div class="t" style="left:1408px;top:284.45px;font-size:16.6px;width:118px;text-align:right;color:#000;overflow:hidden;transform:scale(0.95,1.1);transform-origin:100% 13.05px">0,00</div>
<div class="t" style="left:1530px;top:284.45px;font-size:16.6px;width:117px;text-align:right;color:#000;overflow:hidden;transform:scale(0.95,1.1);transform-origin:100% 13.05px">0,00</div>
<div class="t" style="left:1651px;top:284.45px;font-size:16.6px;width:109px;text-align:right;color:#000;overflow:hidden;transform:scale(0.95,1.1);transform-origin:100% 13.05px">0,00</div>
<div class="t" style="left:1764px;top:284.45px;font-size:16.6px;width:148px;text-align:right;color:#000;overflow:hidden;transform:scale(0.95,1.1);transform-origin:100% 13.05px">0,00</div>
<div class="t" style="left:1916px;top:284.45px;font-size:16.6px;width:108px;text-align:right;color:#000;overflow:hidden;transform:scale(0.95,1.1);transform-origin:100% 13.05px">0,00</div>
<div class="a" style="left:512px;top:303px;width:1516px;height:24px;background:#fff"></div>
<div class="a" style="left:494px;top:303px;width:17px;height:24px;background:#f0f0f0"></div>
<div class="a" style="left:494px;top:326px;width:17px;height:1px;background:#8c8c8c"></div>
<div class="a" style="left:512px;top:326px;width:1516px;height:1px;background:#c8c8c8"></div>
<div class="t" style="left:512px;top:308.45px;font-size:16.6px;width:48px;text-align:right;color:#000;overflow:hidden;transform:scale(0.95,1.1);transform-origin:100% 13.05px">6</div>
<div class="a" style="left:576px;top:306px;width:15px;height:15px;border:1px solid #8c8c8c;background:#f4f4f4"></div>
<svg class="a" style="left:578px;top:308px;" width="11" height="11" viewBox="0 0 11 11"><path d="M2.5 6.5 L4.5 9 L9 2" stroke="#4a5aa8" stroke-width="2" fill="none" stroke-linecap="round"/></svg>
<svg class="a" style="left:615px;top:303px;" width="20" height="24" viewBox="0 0 20 24"><path d="M1.5 6 L6 1.5 H18.5 V22.5 H1.5 Z" fill="url(#dg)" stroke="#505860" stroke-width="1.3"/><path d="M1.5 6 L6 1.5 V6 Z" fill="#c0e8f0" stroke="#505860" stroke-width="1"/><path d="M5 9 H15.5 M5 12 H15.5 M5 15 H15.5 M5 18 H15.5" stroke="#707070" stroke-width="1.1"/></svg>
<div class="t" style="left:655px;top:308.45px;font-size:16.6px;width:116px;color:#000;overflow:hidden;transform:scaleY(1.1);transform-origin:0 13.05px"></div>
<div class="t" style="left:777px;top:308.45px;font-size:16.6px;width:145px;color:#000;overflow:hidden;transform:scaleY(1.1);transform-origin:0 13.05px">Итог 4</div>
<div class="t" style="left:928px;top:308.45px;font-size:16.6px;width:296px;color:#000;overflow:hidden;transform:scaleY(1.1);transform-origin:0 13.05px">Плата за землю при изъятии (выкупе)</div>
<div class="t" style="left:1226px;top:308.45px;font-size:16.6px;width:57px;text-align:right;color:#000;overflow:hidden;transform:scale(0.95,1.1);transform-origin:100% 13.05px"></div>
<div class="t" style="left:1287px;top:308.45px;font-size:16.6px;width:117px;text-align:right;color:#000;overflow:hidden;transform:scale(0.95,1.1);transform-origin:100% 13.05px">0,00</div>
<div class="t" style="left:1408px;top:308.45px;font-size:16.6px;width:118px;text-align:right;color:#000;overflow:hidden;transform:scale(0.95,1.1);transform-origin:100% 13.05px">0,00</div>
<div class="t" style="left:1530px;top:308.45px;font-size:16.6px;width:117px;text-align:right;color:#000;overflow:hidden;transform:scale(0.95,1.1);transform-origin:100% 13.05px">0,00</div>
<div class="t" style="left:1651px;top:308.45px;font-size:16.6px;width:109px;text-align:right;color:#000;overflow:hidden;transform:scale(0.95,1.1);transform-origin:100% 13.05px">0,00</div>
<div class="t" style="left:1764px;top:308.45px;font-size:16.6px;width:148px;text-align:right;color:#000;overflow:hidden;transform:scale(0.95,1.1);transform-origin:100% 13.05px">0,00</div>
<div class="t" style="left:1916px;top:308.45px;font-size:16.6px;width:108px;text-align:right;color:#000;overflow:hidden;transform:scale(0.95,1.1);transform-origin:100% 13.05px">0,00</div>
<div class="a" style="left:512px;top:327px;width:1516px;height:24px;background:#fff"></div>
<div class="a" style="left:494px;top:327px;width:17px;height:24px;background:#f0f0f0"></div>
<div class="a" style="left:494px;top:350px;width:17px;height:1px;background:#8c8c8c"></div>
<div class="a" style="left:512px;top:350px;width:1516px;height:1px;background:#c8c8c8"></div>
<div class="t" style="left:512px;top:332.45px;font-size:16.6px;width:48px;text-align:right;color:#000;overflow:hidden;transform:scale(0.95,1.1);transform-origin:100% 13.05px">7</div>
<div class="a" style="left:576px;top:330px;width:15px;height:15px;border:1px solid #8c8c8c;background:#f4f4f4"></div>
<svg class="a" style="left:578px;top:332px;" width="11" height="11" viewBox="0 0 11 11"><path d="M2.5 6.5 L4.5 9 L9 2" stroke="#4a5aa8" stroke-width="2" fill="none" stroke-linecap="round"/></svg>
<svg class="a" style="left:615px;top:327px;" width="20" height="24" viewBox="0 0 20 24"><path d="M1.5 6 L6 1.5 H18.5 V22.5 H1.5 Z" fill="url(#dg)" stroke="#505860" stroke-width="1.3"/><path d="M1.5 6 L6 1.5 V6 Z" fill="#c0e8f0" stroke="#505860" stroke-width="1"/><path d="M5 9 H15.5 M5 12 H15.5 M5 15 H15.5 M5 18 H15.5" stroke="#707070" stroke-width="1.1"/></svg>
<div class="t" style="left:655px;top:332.45px;font-size:16.6px;width:116px;color:#000;overflow:hidden;transform:scaleY(1.1);transform-origin:0 13.05px"></div>
<div class="t" style="left:777px;top:332.45px;font-size:16.6px;width:145px;color:#000;overflow:hidden;transform:scaleY(1.1);transform-origin:0 13.05px">Итог 10</div>
<div class="t" style="left:928px;top:332.45px;font-size:16.6px;width:296px;color:#000;overflow:hidden;transform:scaleY(1.1);transform-origin:0 13.05px">Затраты на натурные охранно-археологические</div>
<div class="t" style="left:1226px;top:332.45px;font-size:16.6px;width:57px;text-align:right;color:#000;overflow:hidden;transform:scale(0.95,1.1);transform-origin:100% 13.05px"></div>
<div class="t" style="left:1287px;top:332.45px;font-size:16.6px;width:117px;text-align:right;color:#000;overflow:hidden;transform:scale(0.95,1.1);transform-origin:100% 13.05px">0,00</div>
<div class="t" style="left:1408px;top:332.45px;font-size:16.6px;width:118px;text-align:right;color:#000;overflow:hidden;transform:scale(0.95,1.1);transform-origin:100% 13.05px">0,00</div>
<div class="t" style="left:1530px;top:332.45px;font-size:16.6px;width:117px;text-align:right;color:#000;overflow:hidden;transform:scale(0.95,1.1);transform-origin:100% 13.05px">0,00</div>
<div class="t" style="left:1651px;top:332.45px;font-size:16.6px;width:109px;text-align:right;color:#000;overflow:hidden;transform:scale(0.95,1.1);transform-origin:100% 13.05px">0,00</div>
<div class="t" style="left:1764px;top:332.45px;font-size:16.6px;width:148px;text-align:right;color:#000;overflow:hidden;transform:scale(0.95,1.1);transform-origin:100% 13.05px">0,00</div>
<div class="t" style="left:1916px;top:332.45px;font-size:16.6px;width:108px;text-align:right;color:#000;overflow:hidden;transform:scale(0.95,1.1);transform-origin:100% 13.05px">0,00</div>
<div class="a" style="left:512px;top:351px;width:1516px;height:24px;background:#e0e0fc"></div>
<div class="a" style="left:494px;top:351px;width:17px;height:24px;background:#f0f0f0"></div>
<div class="a" style="left:494px;top:374px;width:17px;height:1px;background:#8c8c8c"></div>
<div class="a" style="left:512px;top:374px;width:1516px;height:1px;background:#c8c8c8"></div>
<div class="t" style="left:512px;top:356.45px;font-size:16.6px;width:48px;text-align:right;color:#0000ff;overflow:hidden;transform:scale(0.95,1.1);transform-origin:100% 13.05px">8</div>
<svg class="a" style="left:614px;top:352px;" width="24" height="20" viewBox="0 0 24 20"><rect x="1.5" y="0.5" width="10" height="2.5" fill="#f0c030"/><rect x="1" y="3.5" width="21.5" height="16" fill="url(#fg)" stroke="#a09070" stroke-width="1"/></svg>
<div class="t" style="left:655px;top:356.45px;font-size:16.6px;width:116px;color:#0000ff;overflow:hidden;transform:scaleY(1.1);transform-origin:0 13.05px"></div>
<div class="t" style="left:777px;top:356.45px;font-size:16.6px;width:145px;color:#0000ff;overflow:hidden;transform:scaleY(1.1);transform-origin:0 13.05px">Раздел 2</div>
<div class="t" style="left:928px;top:356.45px;font-size:16.6px;width:296px;color:#0000ff;overflow:hidden;transform:scaleY(1.1);transform-origin:0 13.05px">Раздел 1.2. Освоение территории строительства</div>
<div class="t" style="left:1226px;top:356.45px;font-size:16.6px;width:57px;text-align:right;color:#0000ff;overflow:hidden;transform:scale(0.95,1.1);transform-origin:100% 13.05px"></div>
<div class="t" style="left:1287px;top:356.45px;font-size:16.6px;width:117px;text-align:right;color:#0000ff;overflow:hidden;transform:scale(0.95,1.1);transform-origin:100% 13.05px">0,00</div>
<div class="t" style="left:1408px;top:356.45px;font-size:16.6px;width:118px;text-align:right;color:#0000ff;overflow:hidden;transform:scale(0.95,1.1);transform-origin:100% 13.05px">0,00</div>
<div class="t" style="left:1530px;top:356.45px;font-size:16.6px;width:117px;text-align:right;color:#0000ff;overflow:hidden;transform:scale(0.95,1.1);transform-origin:100% 13.05px">0,00</div>
<div class="t" style="left:1651px;top:356.45px;font-size:16.6px;width:109px;text-align:right;color:#0000ff;overflow:hidden;transform:scale(0.95,1.1);transform-origin:100% 13.05px">0,00</div>
<div class="t" style="left:1764px;top:356.45px;font-size:16.6px;width:148px;text-align:right;color:#0000ff;overflow:hidden;transform:scale(0.95,1.1);transform-origin:100% 13.05px">0,00</div>
<div class="t" style="left:1916px;top:356.45px;font-size:16.6px;width:108px;text-align:right;color:#0000ff;overflow:hidden;transform:scale(0.95,1.1);transform-origin:100% 13.05px">0,00</div>
<div class="a" style="left:512px;top:375px;width:1516px;height:24px;background:#fff"></div>
<div class="a" style="left:494px;top:375px;width:17px;height:24px;background:#f0f0f0"></div>
<div class="a" style="left:494px;top:398px;width:17px;height:1px;background:#8c8c8c"></div>
<div class="a" style="left:512px;top:398px;width:1516px;height:1px;background:#c8c8c8"></div>
<div class="t" style="left:512px;top:380.45px;font-size:16.6px;width:48px;text-align:right;color:#000;overflow:hidden;transform:scale(0.95,1.1);transform-origin:100% 13.05px">9</div>
<div class="a" style="left:576px;top:378px;width:15px;height:15px;border:1px solid #8c8c8c;background:#f4f4f4"></div>
<svg class="a" style="left:578px;top:380px;" width="11" height="11" viewBox="0 0 11 11"><path d="M2.5 6.5 L4.5 9 L9 2" stroke="#4a5aa8" stroke-width="2" fill="none" stroke-linecap="round"/></svg>
<svg class="a" style="left:615px;top:375px;" width="20" height="24" viewBox="0 0 20 24"><path d="M1.5 6 L6 1.5 H18.5 V22.5 H1.5 Z" fill="url(#dg)" stroke="#505860" stroke-width="1.3"/><path d="M1.5 6 L6 1.5 V6 Z" fill="#c0e8f0" stroke="#505860" stroke-width="1"/><path d="M5 9 H15.5 M5 12 H15.5 M5 15 H15.5 M5 18 H15.5" stroke="#707070" stroke-width="1.1"/></svg>
<div class="t" style="left:655px;top:380.45px;font-size:16.6px;width:116px;color:#000;overflow:hidden;transform:scaleY(1.1);transform-origin:0 13.05px"></div>
<div class="t" style="left:777px;top:380.45px;font-size:16.6px;width:145px;color:#000;overflow:hidden;transform:scaleY(1.1);transform-origin:0 13.05px">Итог 12</div>
<div class="t" style="left:928px;top:380.45px;font-size:16.6px;width:296px;color:#000;overflow:hidden;transform:scaleY(1.1);transform-origin:0 13.05px">Компенсация за сносимые строения и насаждения</div>
<div class="t" style="left:1226px;top:380.45px;font-size:16.6px;width:57px;text-align:right;color:#000;overflow:hidden;transform:scale(0.95,1.1);transform-origin:100% 13.05px"></div>
<div class="t" style="left:1287px;top:380.45px;font-size:16.6px;width:117px;text-align:right;color:#000;overflow:hidden;transform:scale(0.95,1.1);transform-origin:100% 13.05px">0,00</div>
<div class="t" style="left:1408px;top:380.45px;font-size:16.6px;width:118px;text-align:right;color:#000;overflow:hidden;transform:scale(0.95,1.1);transform-origin:100% 13.05px">0,00</div>
<div class="t" style="left:1530px;top:380.45px;font-size:16.6px;width:117px;text-align:right;color:#000;overflow:hidden;transform:scale(0.95,1.1);transform-origin:100% 13.05px">0,00</div>
<div class="t" style="left:1651px;top:380.45px;font-size:16.6px;width:109px;text-align:right;color:#000;overflow:hidden;transform:scale(0.95,1.1);transform-origin:100% 13.05px">0,00</div>
<div class="t" style="left:1764px;top:380.45px;font-size:16.6px;width:148px;text-align:right;color:#000;overflow:hidden;transform:scale(0.95,1.1);transform-origin:100% 13.05px">0,00</div>
<div class="t" style="left:1916px;top:380.45px;font-size:16.6px;width:108px;text-align:right;color:#000;overflow:hidden;transform:scale(0.95,1.1);transform-origin:100% 13.05px">0,00</div>
<div class="a" style="left:512px;top:399px;width:1516px;height:24px;background:#fff"></div>
<div class="a" style="left:494px;top:399px;width:17px;height:24px;background:#f0f0f0"></div>
<div class="a" style="left:494px;top:422px;width:17px;height:1px;background:#8c8c8c"></div>
<div class="a" style="left:512px;top:422px;width:1516px;height:1px;background:#c8c8c8"></div>
<div class="t" style="left:512px;top:404.45px;font-size:16.6px;width:48px;text-align:right;color:#000;overflow:hidden;transform:scale(0.95,1.1);transform-origin:100% 13.05px">10</div>
<div class="a" style="left:576px;top:402px;width:15px;height:15px;border:1px solid #8c8c8c;background:#f4f4f4"></div>
<svg class="a" style="left:578px;top:404px;" width="11" height="11" viewBox="0 0 11 11"><path d="M2.5 6.5 L4.5 9 L9 2" stroke="#4a5aa8" stroke-width="2" fill="none" stroke-linecap="round"/></svg>
<svg class="a" style="left:615px;top:399px;" width="20" height="24" viewBox="0 0 20 24"><path d="M1.5 6 L6 1.5 H18.5 V22.5 H1.5 Z" fill="url(#dg)" stroke="#505860" stroke-width="1.3"/><path d="M1.5 6 L6 1.5 V6 Z" fill="#c0e8f0" stroke="#505860" stroke-width="1"/><path d="M5 9 H15.5 M5 12 H15.5 M5 15 H15.5 M5 18 H15.5" stroke="#707070" stroke-width="1.1"/></svg>
<div class="t" style="left:655px;top:404.45px;font-size:16.6px;width:116px;color:#000;overflow:hidden;transform:scaleY(1.1);transform-origin:0 13.05px"></div>
<div class="t" style="left:777px;top:404.45px;font-size:16.6px;width:145px;color:#000;overflow:hidden;transform:scaleY(1.1);transform-origin:0 13.05px">Итог 13</div>
<div class="t" style="left:928px;top:404.45px;font-size:16.6px;width:296px;color:#000;overflow:hidden;transform:scaleY(1.1);transform-origin:0 13.05px">Возмещение потерь лесохозяйственного производства</div>
<div class="t" style="left:1226px;top:404.45px;font-size:16.6px;width:57px;text-align:right;color:#000;overflow:hidden;transform:scale(0.95,1.1);transform-origin:100% 13.05px"></div>
<div class="t" style="left:1287px;top:404.45px;font-size:16.6px;width:117px;text-align:right;color:#000;overflow:hidden;transform:scale(0.95,1.1);transform-origin:100% 13.05px">0,00</div>
<div class="t" style="left:1408px;top:404.45px;font-size:16.6px;width:118px;text-align:right;color:#000;overflow:hidden;transform:scale(0.95,1.1);transform-origin:100% 13.05px">0,00</div>
<div class="t" style="left:1530px;top:404.45px;font-size:16.6px;width:117px;text-align:right;color:#000;overflow:hidden;transform:scale(0.95,1.1);transform-origin:100% 13.05px">0,00</div>
<div class="t" style="left:1651px;top:404.45px;font-size:16.6px;width:109px;text-align:right;color:#000;overflow:hidden;transform:scale(0.95,1.1);transform-origin:100% 13.05px">0,00</div>
<div class="t" style="left:1764px;top:404.45px;font-size:16.6px;width:148px;text-align:right;color:#000;overflow:hidden;transform:scale(0.95,1.1);transform-origin:100% 13.05px">0,00</div>
<div class="t" style="left:1916px;top:404.45px;font-size:16.6px;width:108px;text-align:right;color:#000;overflow:hidden;transform:scale(0.95,1.1);transform-origin:100% 13.05px">0,00</div>
<div class="a" style="left:512px;top:423px;width:1516px;height:24px;background:#fff"></div>
<div class="a" style="left:494px;top:423px;width:17px;height:24px;background:#f0f0f0"></div>
<div class="a" style="left:494px;top:446px;width:17px;height:1px;background:#8c8c8c"></div>
<div class="a" style="left:512px;top:446px;width:1516px;height:1px;background:#c8c8c8"></div>
<div class="t" style="left:512px;top:428.45px;font-size:16.6px;width:48px;text-align:right;color:#000;overflow:hidden;transform:scale(0.95,1.1);transform-origin:100% 13.05px">11</div>
<div class="a" style="left:576px;top:426px;width:15px;height:15px;border:1px solid #8c8c8c;background:#f4f4f4"></div>
<svg class="a" style="left:578px;top:428px;" width="11" height="11" viewBox="0 0 11 11"><path d="M2.5 6.5 L4.5 9 L9 2" stroke="#4a5aa8" stroke-width="2" fill="none" stroke-linecap="round"/></svg>
<svg class="a" style="left:615px;top:423px;" width="20" height="24" viewBox="0 0 20 24"><path d="M1.5 6 L6 1.5 H18.5 V22.5 H1.5 Z" fill="url(#dg)" stroke="#505860" stroke-width="1.3"/><path d="M1.5 6 L6 1.5 V6 Z" fill="#c0e8f0" stroke="#505860" stroke-width="1"/><path d="M5 9 H15.5 M5 12 H15.5 M5 15 H15.5 M5 18 H15.5" stroke="#707070" stroke-width="1.1"/></svg>
<div class="t" style="left:655px;top:428.45px;font-size:16.6px;width:116px;color:#000;overflow:hidden;transform:scaleY(1.1);transform-origin:0 13.05px"></div>
<div class="t" style="left:777px;top:428.45px;font-size:16.6px;width:145px;color:#000;overflow:hidden;transform:scaleY(1.1);transform-origin:0 13.05px">Итог 14</div>
<div class="t" style="left:928px;top:428.45px;font-size:16.6px;width:296px;color:#000;overflow:hidden;transform:scaleY(1.1);transform-origin:0 13.05px">Оплата коммунальных и эксплуатационных</div>
<div class="t" style="left:1226px;top:428.45px;font-size:16.6px;width:57px;text-align:right;color:#000;overflow:hidden;transform:scale(0.95,1.1);transform-origin:100% 13.05px"></div>
<div class="t" style="left:1287px;top:428.45px;font-size:16.6px;width:117px;text-align:right;color:#000;overflow:hidden;transform:scale(0.95,1.1);transform-origin:100% 13.05px">0,00</div>
<div class="t" style="left:1408px;top:428.45px;font-size:16.6px;width:118px;text-align:right;color:#000;overflow:hidden;transform:scale(0.95,1.1);transform-origin:100% 13.05px">0,00</div>
<div class="t" style="left:1530px;top:428.45px;font-size:16.6px;width:117px;text-align:right;color:#000;overflow:hidden;transform:scale(0.95,1.1);transform-origin:100% 13.05px">0,00</div>
<div class="t" style="left:1651px;top:428.45px;font-size:16.6px;width:109px;text-align:right;color:#000;overflow:hidden;transform:scale(0.95,1.1);transform-origin:100% 13.05px">0,00</div>
<div class="t" style="left:1764px;top:428.45px;font-size:16.6px;width:148px;text-align:right;color:#000;overflow:hidden;transform:scale(0.95,1.1);transform-origin:100% 13.05px">0,00</div>
<div class="t" style="left:1916px;top:428.45px;font-size:16.6px;width:108px;text-align:right;color:#000;overflow:hidden;transform:scale(0.95,1.1);transform-origin:100% 13.05px">0,00</div>
<div class="a" style="left:512px;top:447px;width:1516px;height:24px;background:#e0e0fc"></div>
<div class="a" style="left:494px;top:447px;width:17px;height:24px;background:#f0f0f0"></div>
<div class="a" style="left:494px;top:470px;width:17px;height:1px;background:#8c8c8c"></div>
<div class="a" style="left:512px;top:470px;width:1516px;height:1px;background:#c8c8c8"></div>
<div class="t" style="left:512px;top:452.45px;font-size:16.6px;width:48px;text-align:right;color:#0000ff;overflow:hidden;transform:scale(0.95,1.1);transform-origin:100% 13.05px">12</div>
<svg class="a" style="left:614px;top:448px;" width="24" height="20" viewBox="0 0 24 20"><rect x="1.5" y="0.5" width="10" height="2.5" fill="#f0c030"/><rect x="1" y="3.5" width="21.5" height="16" fill="url(#fg)" stroke="#a09070" stroke-width="1"/></svg>
<div class="t" style="left:655px;top:452.45px;font-size:16.6px;width:116px;color:#0000ff;overflow:hidden;transform:scaleY(1.1);transform-origin:0 13.05px"></div>
<div class="t" style="left:777px;top:452.45px;font-size:16.6px;width:145px;color:#0000ff;overflow:hidden;transform:scaleY(1.1);transform-origin:0 13.05px">Гл. 2</div>
<div class="t" style="left:928px;top:452.45px;font-size:16.6px;width:296px;color:#0000ff;overflow:hidden;transform:scaleY(1.1);transform-origin:0 13.05px">Глава&nbsp; 2. Основные объекты строительства</div>
<div class="t" style="left:1226px;top:452.45px;font-size:16.6px;width:57px;text-align:right;color:#0000ff;overflow:hidden;transform:scale(0.95,1.1);transform-origin:100% 13.05px">2</div>
<div class="t" style="left:1287px;top:452.45px;font-size:16.6px;width:117px;text-align:right;color:#0000ff;overflow:hidden;transform:scale(0.95,1.1);transform-origin:100% 13.05px">648,36</div>
<div class="t" style="left:1408px;top:452.45px;font-size:16.6px;width:118px;text-align:right;color:#0000ff;overflow:hidden;transform:scale(0.95,1.1);transform-origin:100% 13.05px">0,00</div>
<div class="t" style="left:1530px;top:452.45px;font-size:16.6px;width:117px;text-align:right;color:#0000ff;overflow:hidden;transform:scale(0.95,1.1);transform-origin:100% 13.05px">0,00</div>
<div class="t" style="left:1651px;top:452.45px;font-size:16.6px;width:109px;text-align:right;color:#0000ff;overflow:hidden;transform:scale(0.95,1.1);transform-origin:100% 13.05px">0,00</div>
<div class="t" style="left:1764px;top:452.45px;font-size:16.6px;width:148px;text-align:right;color:#0000ff;overflow:hidden;transform:scale(0.95,1.1);transform-origin:100% 13.05px">648,36</div>
<div class="t" style="left:1916px;top:452.45px;font-size:16.6px;width:108px;text-align:right;color:#0000ff;overflow:hidden;transform:scale(0.95,1.1);transform-origin:100% 13.05px">0,00</div>
<div class="a" style="left:512px;top:471px;width:1516px;height:24px;background:#e3fcfc"></div>
<div class="a" style="left:494px;top:471px;width:17px;height:24px;background:#f0f0f0"></div>
<div class="a" style="left:494px;top:494px;width:17px;height:1px;background:#8c8c8c"></div>
<div class="a" style="left:512px;top:494px;width:1516px;height:1px;background:#c8c8c8"></div>
<div class="t" style="left:512px;top:476.45px;font-size:16.6px;width:48px;text-align:right;color:#000;overflow:hidden;transform:scale(0.95,1.1);transform-origin:100% 13.05px">13</div>
<div class="a" style="left:576px;top:474px;width:15px;height:15px;border:1px solid #8c8c8c;background:#f4f4f4"></div>
<svg class="a" style="left:578px;top:476px;" width="11" height="11" viewBox="0 0 11 11"><path d="M2.5 6.5 L4.5 9 L9 2" stroke="#4a5aa8" stroke-width="2" fill="none" stroke-linecap="round"/></svg>
<svg class="a" style="left:614px;top:471px;" width="26" height="24" viewBox="0 0 26 24"><path d="M1 12 L17 17 L25 4 L24.5 13 L18 23 L1.5 18 Z" fill="#e6e6ea" stroke="#a8aab8" stroke-width="1"/><path d="M1 6 L8 0 L18 0.5 L25 4 L17 17 L1 12 Z" fill="url(#bg)"/><path d="M10 4.4 L19.4 7.1" stroke="#f0fff0" stroke-width="2.2" stroke-linecap="round"/></svg>
<div class="t" style="left:655px;top:476.45px;font-size:16.6px;width:116px;color:#000;overflow:hidden;transform:scaleY(1.1);transform-origin:0 13.05px">Новая локальн</div>
<div class="t" style="left:777px;top:476.45px;font-size:16.6px;width:145px;color:#000;overflow:hidden;transform:scaleY(1.1);transform-origin:0 13.05px"></div>
<div class="a" style="left:925px;top:471px;width:300px;height:23px;background:#0078d7;outline:1px dotted #c08040;outline-offset:-1px"></div>
<div class="t" style="left:928px;top:476.45px;font-size:16.6px;width:296px;color:#fff;overflow:hidden;transform:scaleY(1.1);transform-origin:0 13.05px">Ремонт маршевых спусков на склоне</div>
<div class="t" style="left:1226px;top:476.45px;font-size:16.6px;width:57px;text-align:right;color:#000;overflow:hidden;transform:scale(0.95,1.1);transform-origin:100% 13.05px"></div>
<div class="t" style="left:1287px;top:476.45px;font-size:16.6px;width:117px;text-align:right;color:#000;overflow:hidden;transform:scale(0.95,1.1);transform-origin:100% 13.05px">648,36</div>
<div class="t" style="left:1408px;top:476.45px;font-size:16.6px;width:118px;text-align:right;color:#000;overflow:hidden;transform:scale(0.95,1.1);transform-origin:100% 13.05px">0,00</div>
<div class="t" style="left:1530px;top:476.45px;font-size:16.6px;width:117px;text-align:right;color:#000;overflow:hidden;transform:scale(0.95,1.1);transform-origin:100% 13.05px">0,00</div>
<div class="t" style="left:1651px;top:476.45px;font-size:16.6px;width:109px;text-align:right;color:#000;overflow:hidden;transform:scale(0.95,1.1);transform-origin:100% 13.05px">0,00</div>
<div class="t" style="left:1764px;top:476.45px;font-size:16.6px;width:148px;text-align:right;color:#000;overflow:hidden;transform:scale(0.95,1.1);transform-origin:100% 13.05px">648,36</div>
<div class="t" style="left:1916px;top:476.45px;font-size:16.6px;width:108px;text-align:right;color:#000;overflow:hidden;transform:scale(0.95,1.1);transform-origin:100% 13.05px">0,00</div>
<svg class="a" style="left:498px;top:475px;" width="11" height="17" viewBox="0 0 11 17"><path d="M1 1 L10 8.5 L1 16 Z" fill="#000"/></svg>
<div class="a" style="left:512px;top:495px;width:1516px;height:24px;background:#e0e0fc"></div>
<div class="a" style="left:494px;top:495px;width:17px;height:24px;background:#f0f0f0"></div>
<div class="a" style="left:494px;top:518px;width:17px;height:1px;background:#8c8c8c"></div>
<div class="a" style="left:512px;top:518px;width:1516px;height:1px;background:#c8c8c8"></div>
<div class="t" style="left:512px;top:500.45px;font-size:16.6px;width:48px;text-align:right;color:#0000ff;overflow:hidden;transform:scale(0.95,1.1);transform-origin:100% 13.05px">14</div>
<svg class="a" style="left:614px;top:496px;" width="24" height="20" viewBox="0 0 24 20"><rect x="1.5" y="0.5" width="10" height="2.5" fill="#f0c030"/><rect x="1" y="3.5" width="21.5" height="16" fill="url(#fg)" stroke="#a09070" stroke-width="1"/></svg>
<div class="t" style="left:655px;top:500.45px;font-size:16.6px;width:116px;color:#0000ff;overflow:hidden;transform:scaleY(1.1);transform-origin:0 13.05px"></div>
<div class="t" style="left:777px;top:500.45px;font-size:16.6px;width:145px;color:#0000ff;overflow:hidden;transform:scaleY(1.1);transform-origin:0 13.05px">Гл. 3</div>
<div class="t" style="left:928px;top:500.45px;font-size:16.6px;width:296px;color:#0000ff;overflow:hidden;transform:scaleY(1.1);transform-origin:0 13.05px">Глава&nbsp; 3. Объекты подсобного</div>
<div class="t" style="left:1226px;top:500.45px;font-size:16.6px;width:57px;text-align:right;color:#0000ff;overflow:hidden;transform:scale(0.95,1.1);transform-origin:100% 13.05px"></div>
<div class="t" style="left:1287px;top:500.45px;font-size:16.6px;width:117px;text-align:right;color:#0000ff;overflow:hidden;transform:scale(0.95,1.1);transform-origin:100% 13.05px">154,33</div>
<div class="t" style="left:1408px;top:500.45px;font-size:16.6px;width:118px;text-align:right;color:#0000ff;overflow:hidden;transform:scale(0.95,1.1);transform-origin:100% 13.05px">0,00</div>
<div class="t" style="left:1530px;top:500.45px;font-size:16.6px;width:117px;text-align:right;color:#0000ff;overflow:hidden;transform:scale(0.95,1.1);transform-origin:100% 13.05px">0,00</div>
<div class="t" style="left:1651px;top:500.45px;font-size:16.6px;width:109px;text-align:right;color:#0000ff;overflow:hidden;transform:scale(0.95,1.1);transform-origin:100% 13.05px">0,00</div>
<div class="t" style="left:1764px;top:500.45px;font-size:16.6px;width:148px;text-align:right;color:#0000ff;overflow:hidden;transform:scale(0.95,1.1);transform-origin:100% 13.05px">154,33</div>
<div class="t" style="left:1916px;top:500.45px;font-size:16.6px;width:108px;text-align:right;color:#0000ff;overflow:hidden;transform:scale(0.95,1.1);transform-origin:100% 13.05px">0,00</div>
<div class="a" style="left:512px;top:519px;width:1516px;height:24px;background:#e3fcfc"></div>
<div class="a" style="left:494px;top:519px;width:17px;height:24px;background:#f0f0f0"></div>
<div class="a" style="left:494px;top:542px;width:17px;height:1px;background:#8c8c8c"></div>
<div class="a" style="left:512px;top:542px;width:1516px;height:1px;background:#c8c8c8"></div>
<div class="t" style="left:512px;top:524.45px;font-size:16.6px;width:48px;text-align:right;color:#000;overflow:hidden;transform:scale(0.95,1.1);transform-origin:100% 13.05px">15</div>
<div class="a" style="left:576px;top:522px;width:15px;height:15px;border:1px solid #8c8c8c;background:#f4f4f4"></div>
<svg class="a" style="left:578px;top:524px;" width="11" height="11" viewBox="0 0 11 11"><path d="M2.5 6.5 L4.5 9 L9 2" stroke="#4a5aa8" stroke-width="2" fill="none" stroke-linecap="round"/></svg>
<svg class="a" style="left:614px;top:519px;" width="26" height="24" viewBox="0 0 26 24"><path d="M1 12 L17 17 L25 4 L24.5 13 L18 23 L1.5 18 Z" fill="#e6e6ea" stroke="#a8aab8" stroke-width="1"/><path d="M1 6 L8 0 L18 0.5 L25 4 L17 17 L1 12 Z" fill="url(#bg)"/><path d="M10 4.4 L19.4 7.1" stroke="#f0fff0" stroke-width="2.2" stroke-linecap="round"/></svg>
<div class="t" style="left:655px;top:524.45px;font-size:16.6px;width:116px;color:#000;overflow:hidden;transform:scaleY(1.1);transform-origin:0 13.05px">Новая локальн</div>
<div class="t" style="left:777px;top:524.45px;font-size:16.6px;width:145px;color:#000;overflow:hidden;transform:scaleY(1.1);transform-origin:0 13.05px"></div>
<div class="t" style="left:928px;top:524.45px;font-size:16.6px;width:296px;color:#000;overflow:hidden;transform:scaleY(1.1);transform-origin:0 13.05px">Устройство комплекса мероприятий</div>
<div class="t" style="left:1226px;top:524.45px;font-size:16.6px;width:57px;text-align:right;color:#000;overflow:hidden;transform:scale(0.95,1.1);transform-origin:100% 13.05px"></div>
<div class="t" style="left:1287px;top:524.45px;font-size:16.6px;width:117px;text-align:right;color:#000;overflow:hidden;transform:scale(0.95,1.1);transform-origin:100% 13.05px">154,33</div>
<div class="t" style="left:1408px;top:524.45px;font-size:16.6px;width:118px;text-align:right;color:#000;overflow:hidden;transform:scale(0.95,1.1);transform-origin:100% 13.05px">0,00</div>
<div class="t" style="left:1530px;top:524.45px;font-size:16.6px;width:117px;text-align:right;color:#000;overflow:hidden;transform:scale(0.95,1.1);transform-origin:100% 13.05px">0,00</div>
<div class="t" style="left:1651px;top:524.45px;font-size:16.6px;width:109px;text-align:right;color:#000;overflow:hidden;transform:scale(0.95,1.1);transform-origin:100% 13.05px">0,00</div>
<div class="t" style="left:1764px;top:524.45px;font-size:16.6px;width:148px;text-align:right;color:#000;overflow:hidden;transform:scale(0.95,1.1);transform-origin:100% 13.05px">154,33</div>
<div class="t" style="left:1916px;top:524.45px;font-size:16.6px;width:108px;text-align:right;color:#000;overflow:hidden;transform:scale(0.95,1.1);transform-origin:100% 13.05px">0,00</div>
<div class="a" style="left:512px;top:543px;width:1516px;height:24px;background:#e0e0fc"></div>
<div class="a" style="left:494px;top:543px;width:17px;height:24px;background:#f0f0f0"></div>
<div class="a" style="left:494px;top:566px;width:17px;height:1px;background:#8c8c8c"></div>
<div class="a" style="left:512px;top:566px;width:1516px;height:1px;background:#c8c8c8"></div>
<div class="t" style="left:512px;top:548.45px;font-size:16.6px;width:48px;text-align:right;color:#0000ff;overflow:hidden;transform:scale(0.95,1.1);transform-origin:100% 13.05px">16</div>
<svg class="a" style="left:614px;top:544px;" width="24" height="20" viewBox="0 0 24 20"><rect x="1.5" y="0.5" width="10" height="2.5" fill="#f0c030"/><rect x="1" y="3.5" width="21.5" height="16" fill="url(#fg)" stroke="#a09070" stroke-width="1"/></svg>
<div class="t" style="left:655px;top:548.45px;font-size:16.6px;width:116px;color:#0000ff;overflow:hidden;transform:scaleY(1.1);transform-origin:0 13.05px"></div>
<div class="t" style="left:777px;top:548.45px;font-size:16.6px;width:145px;color:#0000ff;overflow:hidden;transform:scaleY(1.1);transform-origin:0 13.05px">Гл. 4</div>
<div class="t" style="left:928px;top:548.45px;font-size:16.6px;width:296px;color:#0000ff;overflow:hidden;transform:scaleY(1.1);transform-origin:0 13.05px">Глава&nbsp; 4. Объекты энергетического</div>
<div class="t" style="left:1226px;top:548.45px;font-size:16.6px;width:57px;text-align:right;color:#0000ff;overflow:hidden;transform:scale(0.95,1.1);transform-origin:100% 13.05px"></div>
<div class="t" style="left:1287px;top:548.45px;font-size:16.6px;width:117px;text-align:right;color:#0000ff;overflow:hidden;transform:scale(0.95,1.1);transform-origin:100% 13.05px">0,00</div>
<div class="t" style="left:1408px;top:548.45px;font-size:16.6px;width:118px;text-align:right;color:#0000ff;overflow:hidden;transform:scale(0.95,1.1);transform-origin:100% 13.05px">0,00</div>
<div class="t" style="left:1530px;top:548.45px;font-size:16.6px;width:117px;text-align:right;color:#0000ff;overflow:hidden;transform:scale(0.95,1.1);transform-origin:100% 13.05px">0,00</div>
<div class="t" style="left:1651px;top:548.45px;font-size:16.6px;width:109px;text-align:right;color:#0000ff;overflow:hidden;transform:scale(0.95,1.1);transform-origin:100% 13.05px">0,00</div>
<div class="t" style="left:1764px;top:548.45px;font-size:16.6px;width:148px;text-align:right;color:#0000ff;overflow:hidden;transform:scale(0.95,1.1);transform-origin:100% 13.05px">0,00</div>
<div class="t" style="left:1916px;top:548.45px;font-size:16.6px;width:108px;text-align:right;color:#0000ff;overflow:hidden;transform:scale(0.95,1.1);transform-origin:100% 13.05px">0,00</div>
<div class="a" style="left:512px;top:567px;width:1516px;height:24px;background:#e0e0fc"></div>
<div class="a" style="left:494px;top:567px;width:17px;height:24px;background:#f0f0f0"></div>
<div class="a" style="left:494px;top:590px;width:17px;height:1px;background:#8c8c8c"></div>
<div class="a" style="left:512px;top:590px;width:1516px;height:1px;background:#c8c8c8"></div>
<div class="t" style="left:512px;top:572.45px;font-size:16.6px;width:48px;text-align:right;color:#0000ff;overflow:hidden;transform:scale(0.95,1.1);transform-origin:100% 13.05px">17</div>
<svg class="a" style="left:614px;top:568px;" width="24" height="20" viewBox="0 0 24 20"><rect x="1.5" y="0.5" width="10" height="2.5" fill="#f0c030"/><rect x="1" y="3.5" width="21.5" height="16" fill="url(#fg)" stroke="#a09070" stroke-width="1"/></svg>
<div class="t" style="left:655px;top:572.45px;font-size:16.6px;width:116px;color:#0000ff;overflow:hidden;transform:scaleY(1.1);transform-origin:0 13.05px"></div>
<div class="t" style="left:777px;top:572.45px;font-size:16.6px;width:145px;color:#0000ff;overflow:hidden;transform:scaleY(1.1);transform-origin:0 13.05px">Гл. 5</div>
<div class="t" style="left:928px;top:572.45px;font-size:16.6px;width:296px;color:#0000ff;overflow:hidden;transform:scaleY(1.1);transform-origin:0 13.05px">Глава&nbsp; 5. Объекты транспортного</div>
<div class="t" style="left:1226px;top:572.45px;font-size:16.6px;width:57px;text-align:right;color:#0000ff;overflow:hidden;transform:scale(0.95,1.1);transform-origin:100% 13.05px"></div>
<div class="t" style="left:1287px;top:572.45px;font-size:16.6px;width:117px;text-align:right;color:#0000ff;overflow:hidden;transform:scale(0.95,1.1);transform-origin:100% 13.05px">0,00</div>
<div class="t" style="left:1408px;top:572.45px;font-size:16.6px;width:118px;text-align:right;color:#0000ff;overflow:hidden;transform:scale(0.95,1.1);transform-origin:100% 13.05px">0,00</div>
<div class="t" style="left:1530px;top:572.45px;font-size:16.6px;width:117px;text-align:right;color:#0000ff;overflow:hidden;transform:scale(0.95,1.1);transform-origin:100% 13.05px">0,00</div>
<div class="t" style="left:1651px;top:572.45px;font-size:16.6px;width:109px;text-align:right;color:#0000ff;overflow:hidden;transform:scale(0.95,1.1);transform-origin:100% 13.05px">0,00</div>
<div class="t" style="left:1764px;top:572.45px;font-size:16.6px;width:148px;text-align:right;color:#0000ff;overflow:hidden;transform:scale(0.95,1.1);transform-origin:100% 13.05px">0,00</div>
<div class="t" style="left:1916px;top:572.45px;font-size:16.6px;width:108px;text-align:right;color:#0000ff;overflow:hidden;transform:scale(0.95,1.1);transform-origin:100% 13.05px">0,00</div>
<div class="a" style="left:512px;top:591px;width:1516px;height:24px;background:#e0e0fc"></div>
<div class="a" style="left:494px;top:591px;width:17px;height:24px;background:#f0f0f0"></div>
<div class="a" style="left:494px;top:614px;width:17px;height:1px;background:#8c8c8c"></div>
<div class="a" style="left:512px;top:614px;width:1516px;height:1px;background:#c8c8c8"></div>
<div class="t" style="left:512px;top:596.45px;font-size:16.6px;width:48px;text-align:right;color:#0000ff;overflow:hidden;transform:scale(0.95,1.1);transform-origin:100% 13.05px">18</div>
<svg class="a" style="left:614px;top:592px;" width="24" height="20" viewBox="0 0 24 20"><rect x="1.5" y="0.5" width="10" height="2.5" fill="#f0c030"/><rect x="1" y="3.5" width="21.5" height="16" fill="url(#fg)" stroke="#a09070" stroke-width="1"/></svg>
<div class="t" style="left:655px;top:596.45px;font-size:16.6px;width:116px;color:#0000ff;overflow:hidden;transform:scaleY(1.1);transform-origin:0 13.05px"></div>
<div class="t" style="left:777px;top:596.45px;font-size:16.6px;width:145px;color:#0000ff;overflow:hidden;transform:scaleY(1.1);transform-origin:0 13.05px">Гл. 6</div>
<div class="t" style="left:928px;top:596.45px;font-size:16.6px;width:296px;color:#0000ff;overflow:hidden;transform:scaleY(1.1);transform-origin:0 13.05px">Глава&nbsp; 6. Наружные сети</div>
<div class="t" style="left:1226px;top:596.45px;font-size:16.6px;width:57px;text-align:right;color:#0000ff;overflow:hidden;transform:scale(0.95,1.1);transform-origin:100% 13.05px"></div>
<div class="t" style="left:1287px;top:596.45px;font-size:16.6px;width:117px;text-align:right;color:#0000ff;overflow:hidden;transform:scale(0.95,1.1);transform-origin:100% 13.05px">0,00</div>
<div class="t" style="left:1408px;top:596.45px;font-size:16.6px;width:118px;text-align:right;color:#0000ff;overflow:hidden;transform:scale(0.95,1.1);transform-origin:100% 13.05px">0,00</div>
<div class="t" style="left:1530px;top:596.45px;font-size:16.6px;width:117px;text-align:right;color:#0000ff;overflow:hidden;transform:scale(0.95,1.1);transform-origin:100% 13.05px">0,00</div>
<div class="t" style="left:1651px;top:596.45px;font-size:16.6px;width:109px;text-align:right;color:#0000ff;overflow:hidden;transform:scale(0.95,1.1);transform-origin:100% 13.05px">0,00</div>
<div class="t" style="left:1764px;top:596.45px;font-size:16.6px;width:148px;text-align:right;color:#0000ff;overflow:hidden;transform:scale(0.95,1.1);transform-origin:100% 13.05px">0,00</div>
<div class="t" style="left:1916px;top:596.45px;font-size:16.6px;width:108px;text-align:right;color:#0000ff;overflow:hidden;transform:scale(0.95,1.1);transform-origin:100% 13.05px">0,00</div>
<div class="a" style="left:512px;top:615px;width:1516px;height:24px;background:#e0e0fc"></div>
<div class="a" style="left:494px;top:615px;width:17px;height:24px;background:#f0f0f0"></div>
<div class="a" style="left:494px;top:638px;width:17px;height:1px;background:#8c8c8c"></div>
<div class="a" style="left:512px;top:638px;width:1516px;height:1px;background:#c8c8c8"></div>
<div class="t" style="left:512px;top:620.45px;font-size:16.6px;width:48px;text-align:right;color:#0000ff;overflow:hidden;transform:scale(0.95,1.1);transform-origin:100% 13.05px">19</div>
<svg class="a" style="left:614px;top:616px;" width="24" height="20" viewBox="0 0 24 20"><rect x="1.5" y="0.5" width="10" height="2.5" fill="#f0c030"/><rect x="1" y="3.5" width="21.5" height="16" fill="url(#fg)" stroke="#a09070" stroke-width="1"/></svg>
<div class="t" style="left:655px;top:620.45px;font-size:16.6px;width:116px;color:#0000ff;overflow:hidden;transform:scaleY(1.1);transform-origin:0 13.05px"></div>
<div class="t" style="left:777px;top:620.45px;font-size:16.6px;width:145px;color:#0000ff;overflow:hidden;transform:scaleY(1.1);transform-origin:0 13.05px">Гл. 7</div>
<div class="t" style="left:928px;top:620.45px;font-size:16.6px;width:296px;color:#0000ff;overflow:hidden;transform:scaleY(1.1);transform-origin:0 13.05px">Глава&nbsp; 7. Благоустройство</div>
<div class="t" style="left:1226px;top:620.45px;font-size:16.6px;width:57px;text-align:right;color:#0000ff;overflow:hidden;transform:scale(0.95,1.1);transform-origin:100% 13.05px"></div>
<div class="t" style="left:1287px;top:620.45px;font-size:16.6px;width:117px;text-align:right;color:#0000ff;overflow:hidden;transform:scale(0.95,1.1);transform-origin:100% 13.05px">0,00</div>
<div class="t" style="left:1408px;top:620.45px;font-size:16.6px;width:118px;text-align:right;color:#0000ff;overflow:hidden;transform:scale(0.95,1.1);transform-origin:100% 13.05px">0,00</div>
<div class="t" style="left:1530px;top:620.45px;font-size:16.6px;width:117px;text-align:right;color:#0000ff;overflow:hidden;transform:scale(0.95,1.1);transform-origin:100% 13.05px">0,00</div>
<div class="t" style="left:1651px;top:620.45px;font-size:16.6px;width:109px;text-align:right;color:#0000ff;overflow:hidden;transform:scale(0.95,1.1);transform-origin:100% 13.05px">0,00</div>
<div class="t" style="left:1764px;top:620.45px;font-size:16.6px;width:148px;text-align:right;color:#0000ff;overflow:hidden;transform:scale(0.95,1.1);transform-origin:100% 13.05px">0,00</div>
<div class="t" style="left:1916px;top:620.45px;font-size:16.6px;width:108px;text-align:right;color:#0000ff;overflow:hidden;transform:scale(0.95,1.1);transform-origin:100% 13.05px">0,00</div>
<div class="a" style="left:512px;top:639px;width:1516px;height:24px;background:#e0e0fc"></div>
<div class="a" style="left:494px;top:639px;width:17px;height:24px;background:#f0f0f0"></div>
<div class="a" style="left:494px;top:662px;width:17px;height:1px;background:#8c8c8c"></div>
<div class="a" style="left:512px;top:662px;width:1516px;height:1px;background:#c8c8c8"></div>
<div class="t" style="left:512px;top:644.45px;font-size:16.6px;width:48px;text-align:right;color:#0000ff;overflow:hidden;transform:scale(0.95,1.1);transform-origin:100% 13.05px">20</div>
<svg class="a" style="left:614px;top:640px;" width="24" height="20" viewBox="0 0 24 20"><rect x="1.5" y="0.5" width="10" height="2.5" fill="#f0c030"/><rect x="1" y="3.5" width="21.5" height="16" fill="url(#fg)" stroke="#a09070" stroke-width="1"/></svg>
<div class="t" style="left:655px;top:644.45px;font-size:16.6px;width:116px;color:#0000ff;overflow:hidden;transform:scaleY(1.1);transform-origin:0 13.05px"></div>
<div class="t" style="left:777px;top:644.45px;font-size:16.6px;width:145px;color:#0000ff;overflow:hidden;transform:scaleY(1.1);transform-origin:0 13.05px">Гл. 15</div>
<div class="t" style="left:928px;top:644.45px;font-size:16.6px;width:296px;color:#0000ff;overflow:hidden;transform:scaleY(1.1);transform-origin:0 13.05px">Итого по главам 1-7</div>
<div class="t" style="left:1226px;top:644.45px;font-size:16.6px;width:57px;text-align:right;color:#0000ff;overflow:hidden;transform:scale(0.95,1.1);transform-origin:100% 13.05px"></div>
<div class="t" style="left:1287px;top:644.45px;font-size:16.6px;width:117px;text-align:right;color:#0000ff;overflow:hidden;transform:scale(0.95,1.1);transform-origin:100% 13.05px">0,00</div>
<div class="t" style="left:1408px;top:644.45px;font-size:16.6px;width:118px;text-align:right;color:#0000ff;overflow:hidden;transform:scale(0.95,1.1);transform-origin:100% 13.05px">0,00</div>
<div class="t" style="left:1530px;top:644.45px;font-size:16.6px;width:117px;text-align:right;color:#0000ff;overflow:hidden;transform:scale(0.95,1.1);transform-origin:100% 13.05px">0,00</div>
<div class="t" style="left:1651px;top:644.45px;font-size:16.6px;width:109px;text-align:right;color:#0000ff;overflow:hidden;transform:scale(0.95,1.1);transform-origin:100% 13.05px">0,00</div>
<div class="t" style="left:1764px;top:644.45px;font-size:16.6px;width:148px;text-align:right;color:#0000ff;overflow:hidden;transform:scale(0.95,1.1);transform-origin:100% 13.05px">802,69</div>
<div class="t" style="left:1916px;top:644.45px;font-size:16.6px;width:108px;text-align:right;color:#0000ff;overflow:hidden;transform:scale(0.95,1.1);transform-origin:100% 13.05px">0,00</div>
<div class="a" style="left:512px;top:663px;width:1516px;height:24px;background:#fff"></div>
<div class="a" style="left:494px;top:663px;width:17px;height:24px;background:#f0f0f0"></div>
<div class="a" style="left:494px;top:686px;width:17px;height:1px;background:#8c8c8c"></div>
<div class="a" style="left:512px;top:686px;width:1516px;height:1px;background:#c8c8c8"></div>
<div class="t" style="left:512px;top:668.45px;font-size:16.6px;width:48px;text-align:right;color:#000;overflow:hidden;transform:scale(0.95,1.1);transform-origin:100% 13.05px">21</div>
<div class="a" style="left:576px;top:666px;width:15px;height:15px;border:1px solid #8c8c8c;background:#f4f4f4"></div>
<svg class="a" style="left:578px;top:668px;" width="11" height="11" viewBox="0 0 11 11"><path d="M2.5 6.5 L4.5 9 L9 2" stroke="#4a5aa8" stroke-width="2" fill="none" stroke-linecap="round"/></svg>
<svg class="a" style="left:615px;top:663px;" width="20" height="24" viewBox="0 0 20 24"><path d="M1.5 6 L6 1.5 H18.5 V22.5 H1.5 Z" fill="url(#dg)" stroke="#505860" stroke-width="1.3"/><path d="M1.5 6 L6 1.5 V6 Z" fill="#c0e8f0" stroke="#505860" stroke-width="1"/><path d="M5 9 H15.5 M5 12 H15.5 M5 15 H15.5 M5 18 H15.5" stroke="#707070" stroke-width="1.1"/></svg>
<div class="t" style="left:655px;top:668.45px;font-size:16.6px;width:116px;color:#000;overflow:hidden;transform:scaleY(1.1);transform-origin:0 13.05px"></div>
<div class="t" style="left:777px;top:668.45px;font-size:16.6px;width:145px;color:#000;overflow:hidden;transform:scaleY(1.1);transform-origin:0 13.05px">Итог 40</div>
<div class="t" style="left:928px;top:668.45px;font-size:16.6px;width:296px;color:#000;overflow:hidden;transform:scaleY(1.1);transform-origin:0 13.05px">Итого по главам 1-7</div>
<div class="t" style="left:1226px;top:668.45px;font-size:16.6px;width:57px;text-align:right;color:#000;overflow:hidden;transform:scale(0.95,1.1);transform-origin:100% 13.05px"></div>
<div class="t" style="left:1287px;top:668.45px;font-size:16.6px;width:117px;text-align:right;color:#000;overflow:hidden;transform:scale(0.95,1.1);transform-origin:100% 13.05px">0,00</div>
<div class="t" style="left:1408px;top:668.45px;font-size:16.6px;width:118px;text-align:right;color:#000;overflow:hidden;transform:scale(0.95,1.1);transform-origin:100% 13.05px">0,00</div>
<div class="t" style="left:1530px;top:668.45px;font-size:16.6px;width:117px;text-align:right;color:#000;overflow:hidden;transform:scale(0.95,1.1);transform-origin:100% 13.05px">0,00</div>
<div class="t" style="left:1651px;top:668.45px;font-size:16.6px;width:109px;text-align:right;color:#000;overflow:hidden;transform:scale(0.95,1.1);transform-origin:100% 13.05px">0,00</div>
<div class="t" style="left:1764px;top:668.45px;font-size:16.6px;width:148px;text-align:right;color:#000;overflow:hidden;transform:scale(0.95,1.1);transform-origin:100% 13.05px">802,69</div>
<div class="t" style="left:1916px;top:668.45px;font-size:16.6px;width:108px;text-align:right;color:#000;overflow:hidden;transform:scale(0.95,1.1);transform-origin:100% 13.05px">0,00</div>
<div class="a" style="left:512px;top:687px;width:1516px;height:24px;background:#e0e0fc"></div>
<div class="a" style="left:494px;top:687px;width:17px;height:24px;background:#f0f0f0"></div>
<div class="a" style="left:494px;top:710px;width:17px;height:1px;background:#8c8c8c"></div>
<div class="a" style="left:512px;top:710px;width:1516px;height:1px;background:#c8c8c8"></div>
<div class="t" style="left:512px;top:692.45px;font-size:16.6px;width:48px;text-align:right;color:#0000ff;overflow:hidden;transform:scale(0.95,1.1);transform-origin:100% 13.05px">22</div>
<svg class="a" style="left:614px;top:688px;" width="24" height="20" viewBox="0 0 24 20"><rect x="1.5" y="0.5" width="10" height="2.5" fill="#f0c030"/><rect x="1" y="3.5" width="21.5" height="16" fill="url(#fg)" stroke="#a09070" stroke-width="1"/></svg>
<div class="t" style="left:655px;top:692.45px;font-size:16.6px;width:116px;color:#0000ff;overflow:hidden;transform:scaleY(1.1);transform-origin:0 13.05px"></div>
<div class="t" style="left:777px;top:692.45px;font-size:16.6px;width:145px;color:#0000ff;overflow:hidden;transform:scaleY(1.1);transform-origin:0 13.05px">Гл. 8</div>
<div class="t" style="left:928px;top:692.45px;font-size:16.6px;width:296px;color:#0000ff;overflow:hidden;transform:scaleY(1.1);transform-origin:0 13.05px">Глава&nbsp; 8. Временные здания</div>
<div class="t" style="left:1226px;top:692.45px;font-size:16.6px;width:57px;text-align:right;color:#0000ff;overflow:hidden;transform:scale(0.95,1.1);transform-origin:100% 13.05px"></div>
<div class="t" style="left:1287px;top:692.45px;font-size:16.6px;width:117px;text-align:right;color:#0000ff;overflow:hidden;transform:scale(0.95,1.1);transform-origin:100% 13.05px">0,00</div>
<div class="t" style="left:1408px;top:692.45px;font-size:16.6px;width:118px;text-align:right;color:#0000ff;overflow:hidden;transform:scale(0.95,1.1);transform-origin:100% 13.05px">0,00</div>
<div class="t" style="left:1530px;top:692.45px;font-size:16.6px;width:117px;text-align:right;color:#0000ff;overflow:hidden;transform:scale(0.95,1.1);transform-origin:100% 13.05px">0,00</div>
<div class="t" style="left:1651px;top:692.45px;font-size:16.6px;width:109px;text-align:right;color:#0000ff;overflow:hidden;transform:scale(0.95,1.1);transform-origin:100% 13.05px">0,00</div>
<div class="t" style="left:1764px;top:692.45px;font-size:16.6px;width:148px;text-align:right;color:#0000ff;overflow:hidden;transform:scale(0.95,1.1);transform-origin:100% 13.05px">16,86</div>
<div class="t" style="left:1916px;top:692.45px;font-size:16.6px;width:108px;text-align:right;color:#0000ff;overflow:hidden;transform:scale(0.95,1.1);transform-origin:100% 13.05px">0,00</div>
<div class="a" style="left:512px;top:711px;width:1516px;height:24px;background:#fff"></div>
<div class="a" style="left:494px;top:711px;width:17px;height:24px;background:#f0f0f0"></div>
<div class="a" style="left:494px;top:734px;width:17px;height:1px;background:#8c8c8c"></div>
<div class="a" style="left:512px;top:734px;width:1516px;height:1px;background:#c8c8c8"></div>
<div class="t" style="left:512px;top:716.45px;font-size:16.6px;width:48px;text-align:right;color:#000;overflow:hidden;transform:scale(0.95,1.1);transform-origin:100% 13.05px">23</div>
<div class="a" style="left:576px;top:714px;width:15px;height:15px;border:1px solid #8c8c8c;background:#f4f4f4"></div>
<svg class="a" style="left:578px;top:716px;" width="11" height="11" viewBox="0 0 11 11"><path d="M2.5 6.5 L4.5 9 L9 2" stroke="#4a5aa8" stroke-width="2" fill="none" stroke-linecap="round"/></svg>
<svg class="a" style="left:615px;top:711px;" width="20" height="24" viewBox="0 0 20 24"><path d="M1.5 6 L6 1.5 H18.5 V22.5 H1.5 Z" fill="url(#dg)" stroke="#505860" stroke-width="1.3"/><path d="M1.5 6 L6 1.5 V6 Z" fill="#c0e8f0" stroke="#505860" stroke-width="1"/><path d="M5 9 H15.5 M5 12 H15.5 M5 15 H15.5 M5 18 H15.5" stroke="#707070" stroke-width="1.1"/></svg>
<div class="t" style="left:655px;top:716.45px;font-size:16.6px;width:116px;color:#000;overflow:hidden;transform:scaleY(1.1);transform-origin:0 13.05px">ВЗиС кап.рем.</div>
<div class="t" style="left:777px;top:716.45px;font-size:16.6px;width:145px;color:#000;overflow:hidden;transform:scaleY(1.1);transform-origin:0 13.05px">Итог 28</div>
<div class="t" style="left:928px;top:716.45px;font-size:16.6px;width:296px;color:#000;overflow:hidden;transform:scaleY(1.1);transform-origin:0 13.05px">Затраты на возведение</div>
<div class="t" style="left:1226px;top:716.45px;font-size:16.6px;width:57px;text-align:right;color:#000;overflow:hidden;transform:scale(0.95,1.1);transform-origin:100% 13.05px"></div>
<div class="t" style="left:1287px;top:716.45px;font-size:16.6px;width:117px;text-align:right;color:#000;overflow:hidden;transform:scale(0.95,1.1);transform-origin:100% 13.05px">0,00</div>
<div class="t" style="left:1408px;top:716.45px;font-size:16.6px;width:118px;text-align:right;color:#000;overflow:hidden;transform:scale(0.95,1.1);transform-origin:100% 13.05px">0,00</div>
<div class="t" style="left:1530px;top:716.45px;font-size:16.6px;width:117px;text-align:right;color:#000;overflow:hidden;transform:scale(0.95,1.1);transform-origin:100% 13.05px">0,00</div>
<div class="t" style="left:1651px;top:716.45px;font-size:16.6px;width:109px;text-align:right;color:#000;overflow:hidden;transform:scale(0.95,1.1);transform-origin:100% 13.05px">0,00</div>
<div class="t" style="left:1764px;top:716.45px;font-size:16.6px;width:148px;text-align:right;color:#000;overflow:hidden;transform:scale(0.95,1.1);transform-origin:100% 13.05px">7,22</div>
<div class="t" style="left:1916px;top:716.45px;font-size:16.6px;width:108px;text-align:right;color:#000;overflow:hidden;transform:scale(0.95,1.1);transform-origin:100% 13.05px">0,00</div>
<div class="a" style="left:512px;top:735px;width:1516px;height:24px;background:#fff"></div>
<div class="a" style="left:494px;top:735px;width:17px;height:24px;background:#f0f0f0"></div>
<div class="a" style="left:494px;top:758px;width:17px;height:1px;background:#8c8c8c"></div>
<div class="a" style="left:512px;top:758px;width:1516px;height:1px;background:#c8c8c8"></div>
<div class="t" style="left:512px;top:740.45px;font-size:16.6px;width:48px;text-align:right;color:#000;overflow:hidden;transform:scale(0.95,1.1);transform-origin:100% 13.05px">24</div>
<div class="a" style="left:576px;top:738px;width:15px;height:15px;border:1px solid #8c8c8c;background:#f4f4f4"></div>
<svg class="a" style="left:578px;top:740px;" width="11" height="11" viewBox="0 0 11 11"><path d="M2.5 6.5 L4.5 9 L9 2" stroke="#4a5aa8" stroke-width="2" fill="none" stroke-linecap="round"/></svg>
<svg class="a" style="left:615px;top:735px;" width="20" height="24" viewBox="0 0 20 24"><path d="M1.5 6 L6 1.5 H18.5 V22.5 H1.5 Z" fill="url(#dg)" stroke="#505860" stroke-width="1.3"/><path d="M1.5 6 L6 1.5 V6 Z" fill="#c0e8f0" stroke="#505860" stroke-width="1"/><path d="M5 9 H15.5 M5 12 H15.5 M5 15 H15.5 M5 18 H15.5" stroke="#707070" stroke-width="1.1"/></svg>
<div class="t" style="left:655px;top:740.45px;font-size:16.6px;width:116px;color:#000;overflow:hidden;transform:scaleY(1.1);transform-origin:0 13.05px"></div>
<div class="t" style="left:777px;top:740.45px;font-size:16.6px;width:145px;color:#000;overflow:hidden;transform:scaleY(1.1);transform-origin:0 13.05px">Итог 3</div>
<div class="t" style="left:928px;top:740.45px;font-size:16.6px;width:296px;color:#000;overflow:hidden;transform:scaleY(1.1);transform-origin:0 13.05px">Средства на</div>
<div class="t" style="left:1226px;top:740.45px;font-size:16.6px;width:57px;text-align:right;color:#000;overflow:hidden;transform:scale(0.95,1.1);transform-origin:100% 13.05px"></div>
<div class="t" style="left:1287px;top:740.45px;font-size:16.6px;width:117px;text-align:right;color:#000;overflow:hidden;transform:scale(0.95,1.1);transform-origin:100% 13.05px">0,00</div>
<div class="t" style="left:1408px;top:740.45px;font-size:16.6px;width:118px;text-align:right;color:#000;overflow:hidden;transform:scale(0.95,1.1);transform-origin:100% 13.05px">0,00</div>
<div class="t" style="left:1530px;top:740.45px;font-size:16.6px;width:117px;text-align:right;color:#000;overflow:hidden;transform:scale(0.95,1.1);transform-origin:100% 13.05px">0,00</div>
<div class="t" style="left:1651px;top:740.45px;font-size:16.6px;width:109px;text-align:right;color:#000;overflow:hidden;transform:scale(0.95,1.1);transform-origin:100% 13.05px">0,00</div>
<div class="t" style="left:1764px;top:740.45px;font-size:16.6px;width:148px;text-align:right;color:#000;overflow:hidden;transform:scale(0.95,1.1);transform-origin:100% 13.05px">9,63</div>
<div class="t" style="left:1916px;top:740.45px;font-size:16.6px;width:108px;text-align:right;color:#000;overflow:hidden;transform:scale(0.95,1.1);transform-origin:100% 13.05px">0,00</div>
<div class="a" style="left:512px;top:759px;width:1516px;height:24px;background:#e0e0fc"></div>
<div class="a" style="left:494px;top:759px;width:17px;height:24px;background:#f0f0f0"></div>
<div class="a" style="left:494px;top:782px;width:17px;height:1px;background:#8c8c8c"></div>
<div class="a" style="left:512px;top:782px;width:1516px;height:1px;background:#c8c8c8"></div>
<div class="t" style="left:512px;top:764.45px;font-size:16.6px;width:48px;text-align:right;color:#0000ff;overflow:hidden;transform:scale(0.95,1.1);transform-origin:100% 13.05px">25</div>
<svg class="a" style="left:614px;top:760px;" width="24" height="20" viewBox="0 0 24 20"><rect x="1.5" y="0.5" width="10" height="2.5" fill="#f0c030"/><rect x="1" y="3.5" width="21.5" height="16" fill="url(#fg)" stroke="#a09070" stroke-width="1"/></svg>
<div class="t" style="left:655px;top:764.45px;font-size:16.6px;width:116px;color:#0000ff;overflow:hidden;transform:scaleY(1.1);transform-origin:0 13.05px"></div>
<div class="t" style="left:777px;top:764.45px;font-size:16.6px;width:145px;color:#0000ff;overflow:hidden;transform:scaleY(1.1);transform-origin:0 13.05px">Гл. 16</div>
<div class="t" style="left:928px;top:764.45px;font-size:16.6px;width:296px;color:#0000ff;overflow:hidden;transform:scaleY(1.1);transform-origin:0 13.05px">Итого по главам 1-8</div>
<div class="t" style="left:1226px;top:764.45px;font-size:16.6px;width:57px;text-align:right;color:#0000ff;overflow:hidden;transform:scale(0.95,1.1);transform-origin:100% 13.05px"></div>
<div class="t" style="left:1287px;top:764.45px;font-size:16.6px;width:117px;text-align:right;color:#0000ff;overflow:hidden;transform:scale(0.95,1.1);transform-origin:100% 13.05px">0,00</div>
<div class="t" style="left:1408px;top:764.45px;font-size:16.6px;width:118px;text-align:right;color:#0000ff;overflow:hidden;transform:scale(0.95,1.1);transform-origin:100% 13.05px">0,00</div>
<div class="t" style="left:1530px;top:764.45px;font-size:16.6px;width:117px;text-align:right;color:#0000ff;overflow:hidden;transform:scale(0.95,1.1);transform-origin:100% 13.05px">0,00</div>
<div class="t" style="left:1651px;top:764.45px;font-size:16.6px;width:109px;text-align:right;color:#0000ff;overflow:hidden;transform:scale(0.95,1.1);transform-origin:100% 13.05px">0,00</div>
<div class="t" style="left:1764px;top:764.45px;font-size:16.6px;width:148px;text-align:right;color:#0000ff;overflow:hidden;transform:scale(0.95,1.1);transform-origin:100% 13.05px">819,55</div>
<div class="t" style="left:1916px;top:764.45px;font-size:16.6px;width:108px;text-align:right;color:#0000ff;overflow:hidden;transform:scale(0.95,1.1);transform-origin:100% 13.05px">0,00</div>
<div class="a" style="left:512px;top:783px;width:1516px;height:24px;background:#fff"></div>
<div class="a" style="left:494px;top:783px;width:17px;height:24px;background:#f0f0f0"></div>
<div class="a" style="left:494px;top:806px;width:17px;height:1px;background:#8c8c8c"></div>
<div class="a" style="left:512px;top:806px;width:1516px;height:1px;background:#c8c8c8"></div>
<div class="t" style="left:512px;top:788.45px;font-size:16.6px;width:48px;text-align:right;color:#000;overflow:hidden;transform:scale(0.95,1.1);transform-origin:100% 13.05px">26</div>
<div class="a" style="left:576px;top:786px;width:15px;height:15px;border:1px solid #8c8c8c;background:#f4f4f4"></div>
<svg class="a" style="left:578px;top:788px;" width="11" height="11" viewBox="0 0 11 11"><path d="M2.5 6.5 L4.5 9 L9 2" stroke="#4a5aa8" stroke-width="2" fill="none" stroke-linecap="round"/></svg>
<svg class="a" style="left:615px;top:783px;" width="20" height="24" viewBox="0 0 20 24"><path d="M1.5 6 L6 1.5 H18.5 V22.5 H1.5 Z" fill="url(#dg)" stroke="#505860" stroke-width="1.3"/><path d="M1.5 6 L6 1.5 V6 Z" fill="#c0e8f0" stroke="#505860" stroke-width="1"/><path d="M5 9 H15.5 M5 12 H15.5 M5 15 H15.5 M5 18 H15.5" stroke="#707070" stroke-width="1.1"/></svg>
<div class="t" style="left:655px;top:788.45px;font-size:16.6px;width:116px;color:#000;overflow:hidden;transform:scaleY(1.1);transform-origin:0 13.05px"></div>
<div class="t" style="left:777px;top:788.45px;font-size:16.6px;width:145px;color:#000;overflow:hidden;transform:scaleY(1.1);transform-origin:0 13.05px">Итог 41</div>
<div class="t" style="left:928px;top:788.45px;font-size:16.6px;width:296px;color:#000;overflow:hidden;transform:scaleY(1.1);transform-origin:0 13.05px">Итого по главам 1-8</div>
<div class="t" style="left:1226px;top:788.45px;font-size:16.6px;width:57px;text-align:right;color:#000;overflow:hidden;transform:scale(0.95,1.1);transform-origin:100% 13.05px"></div>
<div class="t" style="left:1287px;top:788.45px;font-size:16.6px;width:117px;text-align:right;color:#000;overflow:hidden;transform:scale(0.95,1.1);transform-origin:100% 13.05px">0,00</div>
<div class="t" style="left:1408px;top:788.45px;font-size:16.6px;width:118px;text-align:right;color:#000;overflow:hidden;transform:scale(0.95,1.1);transform-origin:100% 13.05px">0,00</div>
<div class="t" style="left:1530px;top:788.45px;font-size:16.6px;width:117px;text-align:right;color:#000;overflow:hidden;transform:scale(0.95,1.1);transform-origin:100% 13.05px">0,00</div>
<div class="t" style="left:1651px;top:788.45px;font-size:16.6px;width:109px;text-align:right;color:#000;overflow:hidden;transform:scale(0.95,1.1);transform-origin:100% 13.05px">0,00</div>
<div class="t" style="left:1764px;top:788.45px;font-size:16.6px;width:148px;text-align:right;color:#000;overflow:hidden;transform:scale(0.95,1.1);transform-origin:100% 13.05px">819,55</div>
<div class="t" style="left:1916px;top:788.45px;font-size:16.6px;width:108px;text-align:right;color:#000;overflow:hidden;transform:scale(0.95,1.1);transform-origin:100% 13.05px">0,00</div>
<div class="a" style="left:512px;top:807px;width:1516px;height:24px;background:#e0e0fc"></div>
<div class="a" style="left:494px;top:807px;width:17px;height:24px;background:#f0f0f0"></div>
<div class="a" style="left:494px;top:830px;width:17px;height:1px;background:#8c8c8c"></div>
<div class="a" style="left:512px;top:830px;width:1516px;height:1px;background:#c8c8c8"></div>
<div class="t" style="left:512px;top:812.45px;font-size:16.6px;width:48px;text-align:right;color:#0000ff;overflow:hidden;transform:scale(0.95,1.1);transform-origin:100% 13.05px">27</div>
<svg class="a" style="left:614px;top:808px;" width="24" height="20" viewBox="0 0 24 20"><rect x="1.5" y="0.5" width="10" height="2.5" fill="#f0c030"/><rect x="1" y="3.5" width="21.5" height="16" fill="url(#fg)" stroke="#a09070" stroke-width="1"/></svg>
<div class="t" style="left:655px;top:812.45px;font-size:16.6px;width:116px;color:#0000ff;overflow:hidden;transform:scaleY(1.1);transform-origin:0 13.05px"></div>
<div class="t" style="left:777px;top:812.45px;font-size:16.6px;width:145px;color:#0000ff;overflow:hidden;transform:scaleY(1.1);transform-origin:0 13.05px">Гл. 9</div>
<div class="t" style="left:928px;top:812.45px;font-size:16.6px;width:296px;color:#0000ff;overflow:hidden;transform:scaleY(1.1);transform-origin:0 13.05px">Глава&nbsp; 9. Прочие работы</div>
<div class="t" style="left:1226px;top:812.45px;font-size:16.6px;width:57px;text-align:right;color:#0000ff;overflow:hidden;transform:scale(0.95,1.1);transform-origin:100% 13.05px"></div>
<div class="t" style="left:1287px;top:812.45px;font-size:16.6px;width:117px;text-align:right;color:#0000ff;overflow:hidden;transform:scale(0.95,1.1);transform-origin:100% 13.05px">0,00</div>
<div class="t" style="left:1408px;top:812.45px;font-size:16.6px;width:118px;text-align:right;color:#0000ff;overflow:hidden;transform:scale(0.95,1.1);transform-origin:100% 13.05px">0,00</div>
<div class="t" style="left:1530px;top:812.45px;font-size:16.6px;width:117px;text-align:right;color:#0000ff;overflow:hidden;transform:scale(0.95,1.1);transform-origin:100% 13.05px">0,00</div>
<div class="t" style="left:1651px;top:812.45px;font-size:16.6px;width:109px;text-align:right;color:#0000ff;overflow:hidden;transform:scale(0.95,1.1);transform-origin:100% 13.05px">17,65</div>
<div class="t" style="left:1764px;top:812.45px;font-size:16.6px;width:148px;text-align:right;color:#0000ff;overflow:hidden;transform:scale(0.95,1.1);transform-origin:100% 13.05px">25,75</div>
<div class="t" style="left:1916px;top:812.45px;font-size:16.6px;width:108px;text-align:right;color:#0000ff;overflow:hidden;transform:scale(0.95,1.1);transform-origin:100% 13.05px">0,00</div>
<div class="a" style="left:512px;top:831px;width:1516px;height:24px;background:#fff"></div>
<div class="a" style="left:494px;top:831px;width:17px;height:24px;background:#f0f0f0"></div>
<div class="a" style="left:494px;top:854px;width:17px;height:1px;background:#8c8c8c"></div>
<div class="a" style="left:512px;top:854px;width:1516px;height:1px;background:#c8c8c8"></div>
<div class="t" style="left:512px;top:836.45px;font-size:16.6px;width:48px;text-align:right;color:#000;overflow:hidden;transform:scale(0.95,1.1);transform-origin:100% 13.05px">28</div>
<div class="a" style="left:576px;top:834px;width:15px;height:15px;border:1px solid #8c8c8c;background:#f4f4f4"></div>
<svg class="a" style="left:578px;top:836px;" width="11" height="11" viewBox="0 0 11 11"><path d="M2.5 6.5 L4.5 9 L9 2" stroke="#4a5aa8" stroke-width="2" fill="none" stroke-linecap="round"/></svg>
<svg class="a" style="left:615px;top:831px;" width="20" height="24" viewBox="0 0 20 24"><path d="M1.5 6 L6 1.5 H18.5 V22.5 H1.5 Z" fill="url(#dg)" stroke="#505860" stroke-width="1.3"/><path d="M1.5 6 L6 1.5 V6 Z" fill="#c0e8f0" stroke="#505860" stroke-width="1"/><path d="M5 9 H15.5 M5 12 H15.5 M5 15 H15.5 M5 18 H15.5" stroke="#707070" stroke-width="1.1"/></svg>
<div class="t" style="left:655px;top:836.45px;font-size:16.6px;width:116px;color:#000;overflow:hidden;transform:scaleY(1.1);transform-origin:0 13.05px">325/пр Прилож</div>
<div class="t" style="left:777px;top:836.45px;font-size:16.6px;width:145px;color:#000;overflow:hidden;transform:scaleY(1.1);transform-origin:0 13.05px">Итог 38</div>
<div class="t" style="left:928px;top:836.45px;font-size:16.6px;width:296px;color:#000;overflow:hidden;transform:scaleY(1.1);transform-origin:0 13.05px">Дополнительные затраты</div>
<div class="t" style="left:1226px;top:836.45px;font-size:16.6px;width:57px;text-align:right;color:#000;overflow:hidden;transform:scale(0.95,1.1);transform-origin:100% 13.05px"></div>
<div class="t" style="left:1287px;top:836.45px;font-size:16.6px;width:117px;text-align:right;color:#000;overflow:hidden;transform:scale(0.95,1.1);transform-origin:100% 13.05px">0,00</div>
<div class="t" style="left:1408px;top:836.45px;font-size:16.6px;width:118px;text-align:right;color:#000;overflow:hidden;transform:scale(0.95,1.1);transform-origin:100% 13.05px">0,00</div>
<div class="t" style="left:1530px;top:836.45px;font-size:16.6px;width:117px;text-align:right;color:#000;overflow:hidden;transform:scale(0.95,1.1);transform-origin:100% 13.05px">0,00</div>
<div class="t" style="left:1651px;top:836.45px;font-size:16.6px;width:109px;text-align:right;color:#000;overflow:hidden;transform:scale(0.95,1.1);transform-origin:100% 13.05px">0,00</div>
<div class="t" style="left:1764px;top:836.45px;font-size:16.6px;width:148px;text-align:right;color:#000;overflow:hidden;transform:scale(0.95,1.1);transform-origin:100% 13.05px">8,10</div>
<div class="t" style="left:1916px;top:836.45px;font-size:16.6px;width:108px;text-align:right;color:#000;overflow:hidden;transform:scale(0.95,1.1);transform-origin:100% 13.05px">0,00</div>
<div class="a" style="left:512px;top:855px;width:1516px;height:24px;background:#fff"></div>
<div class="a" style="left:494px;top:855px;width:17px;height:24px;background:#f0f0f0"></div>
<div class="a" style="left:494px;top:878px;width:17px;height:1px;background:#8c8c8c"></div>
<div class="a" style="left:512px;top:878px;width:1516px;height:1px;background:#c8c8c8"></div>
<div class="t" style="left:512px;top:860.45px;font-size:16.6px;width:48px;text-align:right;color:#000;overflow:hidden;transform:scale(0.95,1.1);transform-origin:100% 13.05px">29</div>
<div class="a" style="left:576px;top:858px;width:15px;height:15px;border:1px solid #8c8c8c;background:#f4f4f4"></div>
<svg class="a" style="left:578px;top:860px;" width="11" height="11" viewBox="0 0 11 11"><path d="M2.5 6.5 L4.5 9 L9 2" stroke="#4a5aa8" stroke-width="2" fill="none" stroke-linecap="round"/></svg>
<svg class="a" style="left:615px;top:855px;" width="20" height="24" viewBox="0 0 20 24"><path d="M1.5 6 L6 1.5 H18.5 V22.5 H1.5 Z" fill="url(#dg)" stroke="#505860" stroke-width="1.3"/><path d="M1.5 6 L6 1.5 V6 Z" fill="#c0e8f0" stroke="#505860" stroke-width="1"/><path d="M5 9 H15.5 M5 12 H15.5 M5 15 H15.5 M5 18 H15.5" stroke="#707070" stroke-width="1.1"/></svg>
<div class="t" style="left:655px;top:860.45px;font-size:16.6px;width:116px;color:#000;overflow:hidden;transform:scaleY(1.1);transform-origin:0 13.05px"></div>
<div class="t" style="left:777px;top:860.45px;font-size:16.6px;width:145px;color:#000;overflow:hidden;transform:scaleY(1.1);transform-origin:0 13.05px">Итог 15</div>
<div class="t" style="left:928px;top:860.45px;font-size:16.6px;width:296px;color:#000;overflow:hidden;transform:scaleY(1.1);transform-origin:0 13.05px">Затраты по с</div>
<div class="t" style="left:1226px;top:860.45px;font-size:16.6px;width:57px;text-align:right;color:#000;overflow:hidden;transform:scale(0.95,1.1);transform-origin:100% 13.05px"></div>
<div class="t" style="left:1287px;top:860.45px;font-size:16.6px;width:117px;text-align:right;color:#000;overflow:hidden;transform:scale(0.95,1.1);transform-origin:100% 13.05px">0,00</div>
<div class="t" style="left:1408px;top:860.45px;font-size:16.6px;width:118px;text-align:right;color:#000;overflow:hidden;transform:scale(0.95,1.1);transform-origin:100% 13.05px">0,00</div>
<div class="t" style="left:1530px;top:860.45px;font-size:16.6px;width:117px;text-align:right;color:#000;overflow:hidden;transform:scale(0.95,1.1);transform-origin:100% 13.05px">0,00</div>
<div class="t" style="left:1651px;top:860.45px;font-size:16.6px;width:109px;text-align:right;color:#000;overflow:hidden;transform:scale(0.95,1.1);transform-origin:100% 13.05px">0,00</div>
<div class="t" style="left:1764px;top:860.45px;font-size:16.6px;width:148px;text-align:right;color:#000;overflow:hidden;transform:scale(0.95,1.1);transform-origin:100% 13.05px">0,00</div>
<div class="t" style="left:1916px;top:860.45px;font-size:16.6px;width:108px;text-align:right;color:#000;overflow:hidden;transform:scale(0.95,1.1);transform-origin:100% 13.05px">0,00</div>
<div class="a" style="left:512px;top:879px;width:1516px;height:24px;background:#fff"></div>
<div class="a" style="left:494px;top:879px;width:17px;height:24px;background:#f0f0f0"></div>
<div class="a" style="left:494px;top:902px;width:17px;height:1px;background:#8c8c8c"></div>
<div class="a" style="left:512px;top:902px;width:1516px;height:1px;background:#c8c8c8"></div>
<div class="t" style="left:512px;top:884.45px;font-size:16.6px;width:48px;text-align:right;color:#000;overflow:hidden;transform:scale(0.95,1.1);transform-origin:100% 13.05px">30</div>
<div class="a" style="left:576px;top:882px;width:15px;height:15px;border:1px solid #8c8c8c;background:#f4f4f4"></div>
<svg class="a" style="left:578px;top:884px;" width="11" height="11" viewBox="0 0 11 11"><path d="M2.5 6.5 L4.5 9 L9 2" stroke="#4a5aa8" stroke-width="2" fill="none" stroke-linecap="round"/></svg>
<svg class="a" style="left:615px;top:879px;" width="20" height="24" viewBox="0 0 20 24"><path d="M1.5 6 L6 1.5 H18.5 V22.5 H1.5 Z" fill="url(#dg)" stroke="#505860" stroke-width="1.3"/><path d="M1.5 6 L6 1.5 V6 Z" fill="#c0e8f0" stroke="#505860" stroke-width="1"/><path d="M5 9 H15.5 M5 12 H15.5 M5 15 H15.5 M5 18 H15.5" stroke="#707070" stroke-width="1.1"/></svg>
<div class="t" style="left:655px;top:884.45px;font-size:16.6px;width:116px;color:#000;overflow:hidden;transform:scaleY(1.1);transform-origin:0 13.05px"></div>
<div class="t" style="left:777px;top:884.45px;font-size:16.6px;width:145px;color:#000;overflow:hidden;transform:scaleY(1.1);transform-origin:0 13.05px">Итог 16</div>
<div class="t" style="left:928px;top:884.45px;font-size:16.6px;width:296px;color:#000;overflow:hidden;transform:scaleY(1.1);transform-origin:0 13.05px">Затраты, свя</div>
<div class="t" style="left:1226px;top:884.45px;font-size:16.6px;width:57px;text-align:right;color:#000;overflow:hidden;transform:scale(0.95,1.1);transform-origin:100% 13.05px"></div>
<div class="t" style="left:1287px;top:884.45px;font-size:16.6px;width:117px;text-align:right;color:#000;overflow:hidden;transform:scale(0.95,1.1);transform-origin:100% 13.05px">0,00</div>
<div class="t" style="left:1408px;top:884.45px;font-size:16.6px;width:118px;text-align:right;color:#000;overflow:hidden;transform:scale(0.95,1.1);transform-origin:100% 13.05px">0,00</div>
<div class="t" style="left:1530px;top:884.45px;font-size:16.6px;width:117px;text-align:right;color:#000;overflow:hidden;transform:scale(0.95,1.1);transform-origin:100% 13.05px">0,00</div>
<div class="t" style="left:1651px;top:884.45px;font-size:16.6px;width:109px;text-align:right;color:#000;overflow:hidden;transform:scale(0.95,1.1);transform-origin:100% 13.05px">0,00</div>
<div class="t" style="left:1764px;top:884.45px;font-size:16.6px;width:148px;text-align:right;color:#000;overflow:hidden;transform:scale(0.95,1.1);transform-origin:100% 13.05px">0,00</div>
<div class="t" style="left:1916px;top:884.45px;font-size:16.6px;width:108px;text-align:right;color:#000;overflow:hidden;transform:scale(0.95,1.1);transform-origin:100% 13.05px">0,00</div>
<div class="a" style="left:512px;top:903px;width:1516px;height:24px;background:#fff"></div>
<div class="a" style="left:494px;top:903px;width:17px;height:24px;background:#f0f0f0"></div>
<div class="a" style="left:494px;top:926px;width:17px;height:1px;background:#8c8c8c"></div>
<div class="a" style="left:512px;top:926px;width:1516px;height:1px;background:#c8c8c8"></div>
<div class="t" style="left:512px;top:908.45px;font-size:16.6px;width:48px;text-align:right;color:#000;overflow:hidden;transform:scale(0.95,1.1);transform-origin:100% 13.05px">31</div>
<div class="a" style="left:576px;top:906px;width:15px;height:15px;border:1px solid #8c8c8c;background:#f4f4f4"></div>
<svg class="a" style="left:578px;top:908px;" width="11" height="11" viewBox="0 0 11 11"><path d="M2.5 6.5 L4.5 9 L9 2" stroke="#4a5aa8" stroke-width="2" fill="none" stroke-linecap="round"/></svg>
<svg class="a" style="left:615px;top:903px;" width="20" height="24" viewBox="0 0 20 24"><path d="M1.5 6 L6 1.5 H18.5 V22.5 H1.5 Z" fill="url(#dg)" stroke="#505860" stroke-width="1.3"/><path d="M1.5 6 L6 1.5 V6 Z" fill="#c0e8f0" stroke="#505860" stroke-width="1"/><path d="M5 9 H15.5 M5 12 H15.5 M5 15 H15.5 M5 18 H15.5" stroke="#707070" stroke-width="1.1"/></svg>
<div class="t" style="left:655px;top:908.45px;font-size:16.6px;width:116px;color:#000;overflow:hidden;transform:scaleY(1.1);transform-origin:0 13.05px"></div>
<div class="t" style="left:777px;top:908.45px;font-size:16.6px;width:145px;color:#000;overflow:hidden;transform:scaleY(1.1);transform-origin:0 13.05px">Итог 17</div>
<div class="t" style="left:928px;top:908.45px;font-size:16.6px;width:296px;color:#000;overflow:hidden;transform:scaleY(1.1);transform-origin:0 13.05px">Затраты, свя</div>
<div class="t" style="left:1226px;top:908.45px;font-size:16.6px;width:57px;text-align:right;color:#000;overflow:hidden;transform:scale(0.95,1.1);transform-origin:100% 13.05px"></div>
<div class="t" style="left:1287px;top:908.45px;font-size:16.6px;width:117px;text-align:right;color:#000;overflow:hidden;transform:scale(0.95,1.1);transform-origin:100% 13.05px">0,00</div>
<div class="t" style="left:1408px;top:908.45px;font-size:16.6px;width:118px;text-align:right;color:#000;overflow:hidden;transform:scale(0.95,1.1);transform-origin:100% 13.05px">0,00</div>
<div class="t" style="left:1530px;top:908.45px;font-size:16.6px;width:117px;text-align:right;color:#000;overflow:hidden;transform:scale(0.95,1.1);transform-origin:100% 13.05px">0,00</div>
<div class="t" style="left:1651px;top:908.45px;font-size:16.6px;width:109px;text-align:right;color:#000;overflow:hidden;transform:scale(0.95,1.1);transform-origin:100% 13.05px">0,00</div>
<div class="t" style="left:1764px;top:908.45px;font-size:16.6px;width:148px;text-align:right;color:#000;overflow:hidden;transform:scale(0.95,1.1);transform-origin:100% 13.05px">0,00</div>
<div class="t" style="left:1916px;top:908.45px;font-size:16.6px;width:108px;text-align:right;color:#000;overflow:hidden;transform:scale(0.95,1.1);transform-origin:100% 13.05px">0,00</div>
<div class="a" style="left:512px;top:927px;width:1516px;height:24px;background:#fff"></div>
<div class="a" style="left:494px;top:927px;width:17px;height:24px;background:#f0f0f0"></div>
<div class="a" style="left:494px;top:950px;width:17px;height:1px;background:#8c8c8c"></div>
<div class="a" style="left:512px;top:950px;width:1516px;height:1px;background:#c8c8c8"></div>
<div class="t" style="left:512px;top:932.45px;font-size:16.6px;width:48px;text-align:right;color:#000;overflow:hidden;transform:scale(0.95,1.1);transform-origin:100% 13.05px">32</div>
<div class="a" style="left:576px;top:930px;width:15px;height:15px;border:1px solid #8c8c8c;background:#f4f4f4"></div>
<svg class="a" style="left:578px;top:932px;" width="11" height="11" viewBox="0 0 11 11"><path d="M2.5 6.5 L4.5 9 L9 2" stroke="#4a5aa8" stroke-width="2" fill="none" stroke-linecap="round"/></svg>
<svg class="a" style="left:615px;top:927px;" width="20" height="24" viewBox="0 0 20 24"><path d="M1.5 6 L6 1.5 H18.5 V22.5 H1.5 Z" fill="url(#dg)" stroke="#505860" stroke-width="1.3"/><path d="M1.5 6 L6 1.5 V6 Z" fill="#c0e8f0" stroke="#505860" stroke-width="1"/><path d="M5 9 H15.5 M5 12 H15.5 M5 15 H15.5 M5 18 H15.5" stroke="#707070" stroke-width="1.1"/></svg>
<div class="t" style="left:655px;top:932.45px;font-size:16.6px;width:116px;color:#000;overflow:hidden;transform:scaleY(1.1);transform-origin:0 13.05px"></div>
<div class="t" style="left:777px;top:932.45px;font-size:16.6px;width:145px;color:#000;overflow:hidden;transform:scaleY(1.1);transform-origin:0 13.05px">Итог 19</div>
<div class="t" style="left:928px;top:932.45px;font-size:16.6px;width:296px;color:#000;overflow:hidden;transform:scaleY(1.1);transform-origin:0 13.05px">Затраты,свя</div>
<div class="t" style="left:1226px;top:932.45px;font-size:16.6px;width:57px;text-align:right;color:#000;overflow:hidden;transform:scale(0.95,1.1);transform-origin:100% 13.05px"></div>
<div class="t" style="left:1287px;top:932.45px;font-size:16.6px;width:117px;text-align:right;color:#000;overflow:hidden;transform:scale(0.95,1.1);transform-origin:100% 13.05px">0,00</div>
<div class="t" style="left:1408px;top:932.45px;font-size:16.6px;width:118px;text-align:right;color:#000;overflow:hidden;transform:scale(0.95,1.1);transform-origin:100% 13.05px">0,00</div>
<div class="t" style="left:1530px;top:932.45px;font-size:16.6px;width:117px;text-align:right;color:#000;overflow:hidden;transform:scale(0.95,1.1);transform-origin:100% 13.05px">0,00</div>
<div class="t" style="left:1651px;top:932.45px;font-size:16.6px;width:109px;text-align:right;color:#000;overflow:hidden;transform:scale(0.95,1.1);transform-origin:100% 13.05px">0,00</div>
<div class="t" style="left:1764px;top:932.45px;font-size:16.6px;width:148px;text-align:right;color:#000;overflow:hidden;transform:scale(0.95,1.1);transform-origin:100% 13.05px">0,00</div>
<div class="t" style="left:1916px;top:932.45px;font-size:16.6px;width:108px;text-align:right;color:#000;overflow:hidden;transform:scale(0.95,1.1);transform-origin:100% 13.05px">0,00</div>
<div class="a" style="left:512px;top:951px;width:1516px;height:24px;background:#fff"></div>
<div class="a" style="left:494px;top:951px;width:17px;height:24px;background:#f0f0f0"></div>
<div class="a" style="left:494px;top:974px;width:17px;height:1px;background:#8c8c8c"></div>
<div class="a" style="left:512px;top:974px;width:1516px;height:1px;background:#c8c8c8"></div>
<div class="t" style="left:512px;top:956.45px;font-size:16.6px;width:48px;text-align:right;color:#000;overflow:hidden;transform:scale(0.95,1.1);transform-origin:100% 13.05px">33</div>
<div class="a" style="left:576px;top:954px;width:15px;height:15px;border:1px solid #8c8c8c;background:#f4f4f4"></div>
<svg class="a" style="left:578px;top:956px;" width="11" height="11" viewBox="0 0 11 11"><path d="M2.5 6.5 L4.5 9 L9 2" stroke="#4a5aa8" stroke-width="2" fill="none" stroke-linecap="round"/></svg>
<svg class="a" style="left:615px;top:951px;" width="20" height="24" viewBox="0 0 20 24"><path d="M1.5 6 L6 1.5 H18.5 V22.5 H1.5 Z" fill="url(#dg)" stroke="#505860" stroke-width="1.3"/><path d="M1.5 6 L6 1.5 V6 Z" fill="#c0e8f0" stroke="#505860" stroke-width="1"/><path d="M5 9 H15.5 M5 12 H15.5 M5 15 H15.5 M5 18 H15.5" stroke="#707070" stroke-width="1.1"/></svg>
<div class="t" style="left:655px;top:956.45px;font-size:16.6px;width:116px;color:#000;overflow:hidden;transform:scaleY(1.1);transform-origin:0 13.05px"></div>
<div class="t" style="left:777px;top:956.45px;font-size:16.6px;width:145px;color:#000;overflow:hidden;transform:scaleY(1.1);transform-origin:0 13.05px">Итог 20</div>
<div class="t" style="left:928px;top:956.45px;font-size:16.6px;width:296px;color:#000;overflow:hidden;transform:scaleY(1.1);transform-origin:0 13.05px">Затраты по с</div>
<div class="t" style="left:1226px;top:956.45px;font-size:16.6px;width:57px;text-align:right;color:#000;overflow:hidden;transform:scale(0.95,1.1);transform-origin:100% 13.05px"></div>
<div class="t" style="left:1287px;top:956.45px;font-size:16.6px;width:117px;text-align:right;color:#000;overflow:hidden;transform:scale(0.95,1.1);transform-origin:100% 13.05px">0,00</div>
<div class="t" style="left:1408px;top:956.45px;font-size:16.6px;width:118px;text-align:right;color:#000;overflow:hidden;transform:scale(0.95,1.1);transform-origin:100% 13.05px">0,00</div>
<div class="t" style="left:1530px;top:956.45px;font-size:16.6px;width:117px;text-align:right;color:#000;overflow:hidden;transform:scale(0.95,1.1);transform-origin:100% 13.05px">0,00</div>
<div class="t" style="left:1651px;top:956.45px;font-size:16.6px;width:109px;text-align:right;color:#000;overflow:hidden;transform:scale(0.95,1.1);transform-origin:100% 13.05px">0,00</div>
<div class="t" style="left:1764px;top:956.45px;font-size:16.6px;width:148px;text-align:right;color:#000;overflow:hidden;transform:scale(0.95,1.1);transform-origin:100% 13.05px">0,00</div>
<div class="t" style="left:1916px;top:956.45px;font-size:16.6px;width:108px;text-align:right;color:#000;overflow:hidden;transform:scale(0.95,1.1);transform-origin:100% 13.05px">0,00</div>
<div class="a" style="left:512px;top:975px;width:1516px;height:24px;background:#fff"></div>
<div class="a" style="left:494px;top:975px;width:17px;height:24px;background:#f0f0f0"></div>
<div class="a" style="left:494px;top:998px;width:17px;height:1px;background:#8c8c8c"></div>
<div class="a" style="left:512px;top:998px;width:1516px;height:1px;background:#c8c8c8"></div>
<div class="t" style="left:512px;top:980.45px;font-size:16.6px;width:48px;text-align:right;color:#000;overflow:hidden;transform:scale(0.95,1.1);transform-origin:100% 13.05px">34</div>
<div class="a" style="left:576px;top:978px;width:15px;height:15px;border:1px solid #8c8c8c;background:#f4f4f4"></div>
<svg class="a" style="left:578px;top:980px;" width="11" height="11" viewBox="0 0 11 11"><path d="M2.5 6.5 L4.5 9 L9 2" stroke="#4a5aa8" stroke-width="2" fill="none" stroke-linecap="round"/></svg>
<svg class="a" style="left:615px;top:975px;" width="20" height="24" viewBox="0 0 20 24"><path d="M1.5 6 L6 1.5 H18.5 V22.5 H1.5 Z" fill="url(#dg)" stroke="#505860" stroke-width="1.3"/><path d="M1.5 6 L6 1.5 V6 Z" fill="#c0e8f0" stroke="#505860" stroke-width="1"/><path d="M5 9 H15.5 M5 12 H15.5 M5 15 H15.5 M5 18 H15.5" stroke="#707070" stroke-width="1.1"/></svg>
<div class="t" style="left:655px;top:980.45px;font-size:16.6px;width:116px;color:#000;overflow:hidden;transform:scaleY(1.1);transform-origin:0 13.05px"></div>
<div class="t" style="left:777px;top:980.45px;font-size:16.6px;width:145px;color:#000;overflow:hidden;transform:scaleY(1.1);transform-origin:0 13.05px">Итог 18</div>
<div class="t" style="left:928px;top:980.45px;font-size:16.6px;width:296px;color:#000;overflow:hidden;transform:scaleY(1.1);transform-origin:0 13.05px">Затраты, свя</div>
<div class="t" style="left:1226px;top:980.45px;font-size:16.6px;width:57px;text-align:right;color:#000;overflow:hidden;transform:scale(0.95,1.1);transform-origin:100% 13.05px"></div>
<div class="t" style="left:1287px;top:980.45px;font-size:16.6px;width:117px;text-align:right;color:#000;overflow:hidden;transform:scale(0.95,1.1);transform-origin:100% 13.05px">0,00</div>
<div class="t" style="left:1408px;top:980.45px;font-size:16.6px;width:118px;text-align:right;color:#000;overflow:hidden;transform:scale(0.95,1.1);transform-origin:100% 13.05px">0,00</div>
<div class="t" style="left:1530px;top:980.45px;font-size:16.6px;width:117px;text-align:right;color:#000;overflow:hidden;transform:scale(0.95,1.1);transform-origin:100% 13.05px">0,00</div>
<div class="t" style="left:1651px;top:980.45px;font-size:16.6px;width:109px;text-align:right;color:#000;overflow:hidden;transform:scale(0.95,1.1);transform-origin:100% 13.05px">0,08</div>
<div class="t" style="left:1764px;top:980.45px;font-size:16.6px;width:148px;text-align:right;color:#000;overflow:hidden;transform:scale(0.95,1.1);transform-origin:100% 13.05px">0,08</div>
<div class="t" style="left:1916px;top:980.45px;font-size:16.6px;width:108px;text-align:right;color:#000;overflow:hidden;transform:scale(0.95,1.1);transform-origin:100% 13.05px">0,00</div>
<div class="a" style="left:512px;top:999px;width:1516px;height:24px;background:#fff"></div>
<div class="a" style="left:494px;top:999px;width:17px;height:24px;background:#f0f0f0"></div>
<div class="a" style="left:494px;top:1022px;width:17px;height:1px;background:#8c8c8c"></div>
<div class="a" style="left:512px;top:1022px;width:1516px;height:1px;background:#c8c8c8"></div>
<div class="t" style="left:512px;top:1004.45px;font-size:16.6px;width:48px;text-align:right;color:#000;overflow:hidden;transform:scale(0.95,1.1);transform-origin:100% 13.05px">35</div>
<div class="a" style="left:576px;top:1002px;width:15px;height:15px;border:1px solid #8c8c8c;background:#f4f4f4"></div>
<svg class="a" style="left:578px;top:1004px;" width="11" height="11" viewBox="0 0 11 11"><path d="M2.5 6.5 L4.5 9 L9 2" stroke="#4a5aa8" stroke-width="2" fill="none" stroke-linecap="round"/></svg>
<svg class="a" style="left:615px;top:999px;" width="20" height="24" viewBox="0 0 20 24"><path d="M1.5 6 L6 1.5 H18.5 V22.5 H1.5 Z" fill="url(#dg)" stroke="#505860" stroke-width="1.3"/><path d="M1.5 6 L6 1.5 V6 Z" fill="#c0e8f0" stroke="#505860" stroke-width="1"/><path d="M5 9 H15.5 M5 12 H15.5 M5 15 H15.5 M5 18 H15.5" stroke="#707070" stroke-width="1.1"/></svg>
<div class="t" style="left:655px;top:1004.45px;font-size:16.6px;width:116px;color:#000;overflow:hidden;transform:scaleY(1.1);transform-origin:0 13.05px"></div>
<div class="t" style="left:777px;top:1004.45px;font-size:16.6px;width:145px;color:#000;overflow:hidden;transform:scaleY(1.1);transform-origin:0 13.05px">Итог 21</div>
<div class="t" style="left:928px;top:1004.45px;font-size:16.6px;width:296px;color:#000;overflow:hidden;transform:scaleY(1.1);transform-origin:0 13.05px">Затраты по у</div>
<div class="t" style="left:1226px;top:1004.45px;font-size:16.6px;width:57px;text-align:right;color:#000;overflow:hidden;transform:scale(0.95,1.1);transform-origin:100% 13.05px"></div>
<div class="t" style="left:1287px;top:1004.45px;font-size:16.6px;width:117px;text-align:right;color:#000;overflow:hidden;transform:scale(0.95,1.1);transform-origin:100% 13.05px">0,00</div>
<div class="t" style="left:1408px;top:1004.45px;font-size:16.6px;width:118px;text-align:right;color:#000;overflow:hidden;transform:scale(0.95,1.1);transform-origin:100% 13.05px">0,00</div>
<div class="t" style="left:1530px;top:1004.45px;font-size:16.6px;width:117px;text-align:right;color:#000;overflow:hidden;transform:scale(0.95,1.1);transform-origin:100% 13.05px">0,00</div>
<div class="t" style="left:1651px;top:1004.45px;font-size:16.6px;width:109px;text-align:right;color:#000;overflow:hidden;transform:scale(0.95,1.1);transform-origin:100% 13.05px">2,46</div>
<div class="t" style="left:1764px;top:1004.45px;font-size:16.6px;width:148px;text-align:right;color:#000;overflow:hidden;transform:scale(0.95,1.1);transform-origin:100% 13.05px">2,46</div>
<div class="t" style="left:1916px;top:1004.45px;font-size:16.6px;width:108px;text-align:right;color:#000;overflow:hidden;transform:scale(0.95,1.1);transform-origin:100% 13.05px">0,00</div>
<div class="a" style="left:512px;top:1023px;width:1516px;height:24px;background:#fff"></div>
<div class="a" style="left:494px;top:1023px;width:17px;height:24px;background:#f0f0f0"></div>
<div class="a" style="left:494px;top:1046px;width:17px;height:1px;background:#8c8c8c"></div>
<div class="a" style="left:512px;top:1046px;width:1516px;height:1px;background:#c8c8c8"></div>
<div class="t" style="left:512px;top:1028.45px;font-size:16.6px;width:48px;text-align:right;color:#000;overflow:hidden;transform:scale(0.95,1.1);transform-origin:100% 13.05px">36</div>
<div class="a" style="left:576px;top:1026px;width:15px;height:15px;border:1px solid #8c8c8c;background:#f4f4f4"></div>
<svg class="a" style="left:578px;top:1028px;" width="11" height="11" viewBox="0 0 11 11"><path d="M2.5 6.5 L4.5 9 L9 2" stroke="#4a5aa8" stroke-width="2" fill="none" stroke-linecap="round"/></svg>
<svg class="a" style="left:615px;top:1023px;" width="20" height="24" viewBox="0 0 20 24"><path d="M1.5 6 L6 1.5 H18.5 V22.5 H1.5 Z" fill="url(#dg)" stroke="#505860" stroke-width="1.3"/><path d="M1.5 6 L6 1.5 V6 Z" fill="#c0e8f0" stroke="#505860" stroke-width="1"/><path d="M5 9 H15.5 M5 12 H15.5 M5 15 H15.5 M5 18 H15.5" stroke="#707070" stroke-width="1.1"/></svg>
<div class="t" style="left:655px;top:1028.45px;font-size:16.6px;width:116px;color:#000;overflow:hidden;transform:scaleY(1.1);transform-origin:0 13.05px"></div>
<div class="t" style="left:777px;top:1028.45px;font-size:16.6px;width:145px;color:#000;overflow:hidden;transform:scaleY(1.1);transform-origin:0 13.05px">Итог 22</div>
<div class="t" style="left:928px;top:1028.45px;font-size:16.6px;width:296px;color:#000;overflow:hidden;transform:scaleY(1.1);transform-origin:0 13.05px">Затраты по с</div>
<div class="t" style="left:1226px;top:1028.45px;font-size:16.6px;width:57px;text-align:right;color:#000;overflow:hidden;transform:scale(0.95,1.1);transform-origin:100% 13.05px"></div>
<div class="t" style="left:1287px;top:1028.45px;font-size:16.6px;width:117px;text-align:right;color:#000;overflow:hidden;transform:scale(0.95,1.1);transform-origin:100% 13.05px">0,00</div>
<div class="t" style="left:1408px;top:1028.45px;font-size:16.6px;width:118px;text-align:right;color:#000;overflow:hidden;transform:scale(0.95,1.1);transform-origin:100% 13.05px">0,00</div>
<div class="t" style="left:1530px;top:1028.45px;font-size:16.6px;width:117px;text-align:right;color:#000;overflow:hidden;transform:scale(0.95,1.1);transform-origin:100% 13.05px">0,00</div>
<div class="t" style="left:1651px;top:1028.45px;font-size:16.6px;width:109px;text-align:right;color:#000;overflow:hidden;transform:scale(0.95,1.1);transform-origin:100% 13.05px">4,92</div>
<div class="t" style="left:1764px;top:1028.45px;font-size:16.6px;width:148px;text-align:right;color:#000;overflow:hidden;transform:scale(0.95,1.1);transform-origin:100% 13.05px">4,92</div>
<div class="t" style="left:1916px;top:1028.45px;font-size:16.6px;width:108px;text-align:right;color:#000;overflow:hidden;transform:scale(0.95,1.1);transform-origin:100% 13.05px">0,00</div>
<div class="a" style="left:512px;top:1047px;width:1516px;height:24px;background:#fff"></div>
<div class="a" style="left:494px;top:1047px;width:17px;height:24px;background:#f0f0f0"></div>
<div class="a" style="left:494px;top:1070px;width:17px;height:1px;background:#8c8c8c"></div>
<div class="a" style="left:512px;top:1070px;width:1516px;height:1px;background:#c8c8c8"></div>
<div class="t" style="left:512px;top:1052.45px;font-size:16.6px;width:48px;text-align:right;color:#000;overflow:hidden;transform:scale(0.95,1.1);transform-origin:100% 13.05px">37</div>
<div class="a" style="left:576px;top:1050px;width:15px;height:15px;border:1px solid #8c8c8c;background:#f4f4f4"></div>
<svg class="a" style="left:578px;top:1052px;" width="11" height="11" viewBox="0 0 11 11"><path d="M2.5 6.5 L4.5 9 L9 2" stroke="#4a5aa8" stroke-width="2" fill="none" stroke-linecap="round"/></svg>
<svg class="a" style="left:615px;top:1047px;" width="20" height="24" viewBox="0 0 20 24"><path d="M1.5 6 L6 1.5 H18.5 V22.5 H1.5 Z" fill="url(#dg)" stroke="#505860" stroke-width="1.3"/><path d="M1.5 6 L6 1.5 V6 Z" fill="#c0e8f0" stroke="#505860" stroke-width="1"/><path d="M5 9 H15.5 M5 12 H15.5 M5 15 H15.5 M5 18 H15.5" stroke="#707070" stroke-width="1.1"/></svg>
<div class="t" style="left:655px;top:1052.45px;font-size:16.6px;width:116px;color:#000;overflow:hidden;transform:scaleY(1.1);transform-origin:0 13.05px"></div>
<div class="t" style="left:777px;top:1052.45px;font-size:16.6px;width:145px;color:#000;overflow:hidden;transform:scaleY(1.1);transform-origin:0 13.05px">Итог 23</div>
<div class="t" style="left:928px;top:1052.45px;font-size:16.6px;width:296px;color:#000;overflow:hidden;transform:scaleY(1.1);transform-origin:0 13.05px">Затраты,свя</div>
<div class="t" style="left:1226px;top:1052.45px;font-size:16.6px;width:57px;text-align:right;color:#000;overflow:hidden;transform:scale(0.95,1.1);transform-origin:100% 13.05px"></div>
<div class="t" style="left:1287px;top:1052.45px;font-size:16.6px;width:117px;text-align:right;color:#000;overflow:hidden;transform:scale(0.95,1.1);transform-origin:100% 13.05px">0,00</div>
<div class="t" style="left:1408px;top:1052.45px;font-size:16.6px;width:118px;text-align:right;color:#000;overflow:hidden;transform:scale(0.95,1.1);transform-origin:100% 13.05px">0,00</div>
<div class="t" style="left:1530px;top:1052.45px;font-size:16.6px;width:117px;text-align:right;color:#000;overflow:hidden;transform:scale(0.95,1.1);transform-origin:100% 13.05px">0,00</div>
<div class="t" style="left:1651px;top:1052.45px;font-size:16.6px;width:109px;text-align:right;color:#000;overflow:hidden;transform:scale(0.95,1.1);transform-origin:100% 13.05px">0,00</div>
<div class="t" style="left:1764px;top:1052.45px;font-size:16.6px;width:148px;text-align:right;color:#000;overflow:hidden;transform:scale(0.95,1.1);transform-origin:100% 13.05px">0,00</div>
<div class="t" style="left:1916px;top:1052.45px;font-size:16.6px;width:108px;text-align:right;color:#000;overflow:hidden;transform:scale(0.95,1.1);transform-origin:100% 13.05px">0,00</div>
<div class="a" style="left:512px;top:1071px;width:1516px;height:24px;background:#fff"></div>
<div class="a" style="left:494px;top:1071px;width:17px;height:24px;background:#f0f0f0"></div>
<div class="a" style="left:494px;top:1094px;width:17px;height:1px;background:#8c8c8c"></div>
<div class="a" style="left:512px;top:1094px;width:1516px;height:1px;background:#c8c8c8"></div>
<div class="t" style="left:512px;top:1076.45px;font-size:16.6px;width:48px;text-align:right;color:#000;overflow:hidden;transform:scale(0.95,1.1);transform-origin:100% 13.05px">38</div>
<div class="a" style="left:576px;top:1074px;width:15px;height:15px;border:1px solid #8c8c8c;background:#f4f4f4"></div>
<svg class="a" style="left:578px;top:1076px;" width="11" height="11" viewBox="0 0 11 11"><path d="M2.5 6.5 L4.5 9 L9 2" stroke="#4a5aa8" stroke-width="2" fill="none" stroke-linecap="round"/></svg>
<svg class="a" style="left:615px;top:1071px;" width="20" height="24" viewBox="0 0 20 24"><path d="M1.5 6 L6 1.5 H18.5 V22.5 H1.5 Z" fill="url(#dg)" stroke="#505860" stroke-width="1.3"/><path d="M1.5 6 L6 1.5 V6 Z" fill="#c0e8f0" stroke="#505860" stroke-width="1"/><path d="M5 9 H15.5 M5 12 H15.5 M5 15 H15.5 M5 18 H15.5" stroke="#707070" stroke-width="1.1"/></svg>
<div class="t" style="left:655px;top:1076.45px;font-size:16.6px;width:116px;color:#000;overflow:hidden;transform:scaleY(1.1);transform-origin:0 13.05px"></div>
<div class="t" style="left:777px;top:1076.45px;font-size:16.6px;width:145px;color:#000;overflow:hidden;transform:scaleY(1.1);transform-origin:0 13.05px">Итог 24</div>
<div class="t" style="left:928px;top:1076.45px;font-size:16.6px;width:296px;color:#000;overflow:hidden;transform:scaleY(1.1);transform-origin:0 13.05px">Текущие затраты</div>
<div class="t" style="left:1226px;top:1076.45px;font-size:16.6px;width:57px;text-align:right;color:#000;overflow:hidden;transform:scale(0.95,1.1);transform-origin:100% 13.05px"></div>
<div class="t" style="left:1287px;top:1076.45px;font-size:16.6px;width:117px;text-align:right;color:#000;overflow:hidden;transform:scale(0.95,1.1);transform-origin:100% 13.05px">0,00</div>
<div class="t" style="left:1408px;top:1076.45px;font-size:16.6px;width:118px;text-align:right;color:#000;overflow:hidden;transform:scale(0.95,1.1);transform-origin:100% 13.05px">0,00</div>
<div class="t" style="left:1530px;top:1076.45px;font-size:16.6px;width:117px;text-align:right;color:#000;overflow:hidden;transform:scale(0.95,1.1);transform-origin:100% 13.05px">0,00</div>
<div class="t" style="left:1651px;top:1076.45px;font-size:16.6px;width:109px;text-align:right;color:#000;overflow:hidden;transform:scale(0.95,1.1);transform-origin:100% 13.05px">0,00</div>
<div class="t" style="left:1764px;top:1076.45px;font-size:16.6px;width:148px;text-align:right;color:#000;overflow:hidden;transform:scale(0.95,1.1);transform-origin:100% 13.05px">0,00</div>
<div class="t" style="left:1916px;top:1076.45px;font-size:16.6px;width:108px;text-align:right;color:#000;overflow:hidden;transform:scale(0.95,1.1);transform-origin:100% 13.05px">0,00</div>
<div class="a" style="left:564px;top:183px;width:1px;height:912px;background:#c8c8c8"></div>
<div class="a" style="left:602px;top:183px;width:1px;height:912px;background:#c8c8c8"></div>
<div class="a" style="left:651px;top:183px;width:1px;height:912px;background:#c8c8c8"></div>
<div class="a" style="left:773px;top:183px;width:1px;height:912px;background:#c8c8c8"></div>
<div class="a" style="left:924px;top:183px;width:1px;height:912px;background:#c8c8c8"></div>
<div class="a" style="left:1226px;top:183px;width:1px;height:912px;background:#c8c8c8"></div>
<div class="a" style="left:1287px;top:183px;width:1px;height:912px;background:#c8c8c8"></div>
<div class="a" style="left:1408px;top:183px;width:1px;height:912px;background:#c8c8c8"></div>
<div class="a" style="left:1530px;top:183px;width:1px;height:912px;background:#c8c8c8"></div>
<div class="a" style="left:1651px;top:183px;width:1px;height:912px;background:#c8c8c8"></div>
<div class="a" style="left:1764px;top:183px;width:1px;height:912px;background:#c8c8c8"></div>
<div class="a" style="left:1916px;top:183px;width:1px;height:912px;background:#c8c8c8"></div>
<svg class="a" style="left:1908px;top:926px;" width="8" height="8" viewBox="0 0 8 8"><path d="M0 0 H8 V8 Z" fill="#10b010"/></svg>
<svg class="a" style="left:2020px;top:950px;" width="8" height="8" viewBox="0 0 8 8"><path d="M0 0 H8 V8 Z" fill="#10b010"/></svg>
<div class="a" style="left:2029px;top:158px;width:25px;height:952px;background:#f0f0f0"></div>
<svg class="a" style="left:2034px;top:166px;" width="14" height="10" viewBox="0 0 14 10"><path d="M2 8 L7 3 L12 8" stroke="#606060" stroke-width="2.8" fill="none"/></svg>
<div class="a" style="left:2030px;top:285px;width:22px;height:320px;background:#cdcdcd"></div>
<svg class="a" style="left:2034px;top:1093px;" width="14" height="10" viewBox="0 0 14 10"><path d="M2 2 L7 7 L12 2" stroke="#606060" stroke-width="2.8" fill="none"/></svg>
<div class="a" style="left:494px;top:1111px;width:1561px;height:25px;background:#f0f0f0"></div>
<svg class="a" style="left:500px;top:1116px;" width="10" height="14" viewBox="0 0 10 14"><path d="M8 2 L3 7 L8 12" stroke="#606060" stroke-width="2.8" fill="none"/></svg>
<div class="a" style="left:520px;top:1112px;width:25px;height:22px;background:#cdcdcd"></div>
<svg class="a" style="left:2011px;top:1116px;" width="10" height="14" viewBox="0 0 10 14"><path d="M2 2 L7 7 L2 12" stroke="#606060" stroke-width="2.8" fill="none"/></svg>
<div class="a" style="left:493px;top:1143px;width:118px;height:32px;background:repeating-conic-gradient(#f4f4f4 0 25%,#ececec 0 50%) 0 0/2px 2px;border-top:1px solid #a0a0a0;border-left:1px solid #a0a0a0;border-right:1px solid #fff;border-bottom:1px solid #fff"></div>
<div class="t" style="left:499px;top:1155.45px;font-size:16.6px;color:#000;transform:scaleY(1.1);transform-origin:0 13.05px;">2024, Октябрь</div>
<div class="a" style="left:553px;top:1189px;width:1508px;height:2px;background:#696969"></div>
<div class="a" style="left:2059px;top:118px;width:2px;height:1073px;background:#696969"></div>
<div class="a" style="left:0px;top:118px;width:2px;height:1105px;background:#7a7a7a"></div>
<div class="a" style="left:0px;top:1220px;width:489px;height:1px;background:#a0a0a0"></div>
<div class="a" style="left:489px;top:1221px;width:1572px;height:1px;background:#fff"></div>
<div class="a" style="left:490px;top:1189px;width:64px;height:32px;background:#f0f0f0;border-bottom:2px solid #696969;border-right:2px solid #696969"></div>
<div class="t" style="left:499px;top:1200.95px;font-size:16.6px;color:#000;transform:scaleY(1.1);transform-origin:0 13.05px;">ССР</div>
<div class="a" style="left:555px;top:1190px;width:125px;height:28px;background:#f0f0f0;border-left:1px solid #fff;border-right:2px solid #696969;border-bottom:2px solid #696969"></div>
<div class="t" style="left:563px;top:1197.95px;font-size:16.6px;color:#000;transform:scaleY(1.1);transform-origin:0 13.05px;">Сводка затрат</div>
<div class="a" style="left:682px;top:1190px;width:130px;height:28px;background:#f0f0f0;border-left:1px solid #fff;border-right:2px solid #696969;border-bottom:2px solid #696969"></div>
<div class="t" style="left:690px;top:1197.95px;font-size:16.6px;color:#000;transform:scaleY(1.1);transform-origin:0 13.05px;">Предпросмотр</div>
<div class="a" style="left:2px;top:1223px;width:2057px;height:1px;background:#a0a0a0"></div>
<div class="a" style="left:3px;top:1223px;width:1px;height:59px;background:#a0a0a0"></div>
<div class="a" style="left:2px;top:1281px;width:2057px;height:1px;background:#fff"></div>
<div class="a" style="left:1877px;top:1238px;width:170px;height:32px;background:#f0f0f0;border-top:1px solid #fff;border-left:1px solid #fff;border-right:2px solid #808080;border-bottom:2px solid #808080"></div>
<div class="t" style="left:1929px;top:1245.95px;font-size:16.6px;color:#000;transform:scaleY(1.1);transform-origin:0 13.05px;">Закрыть</div>
<div class="a" style="left:0px;top:1283px;width:2061px;height:1px;background:#a0a0a0"></div>
<div class="a" style="left:0px;top:1284px;width:2061px;height:1px;background:#fff"></div>
<div class="a" style="left:6px;top:1289px;width:125px;height:37px;border-top:1px solid #a0a0a0;border-left:1px solid #a0a0a0;border-right:1px solid #fff;border-bottom:1px solid #fff"></div>
<div class="a" style="left:139px;top:1289px;width:442px;height:37px;border-top:1px solid #a0a0a0;border-left:1px solid #a0a0a0;border-right:1px solid #fff;border-bottom:1px solid #fff"></div>
<div class="a" style="left:589px;top:1289px;width:1364px;height:37px;border-top:1px solid #a0a0a0;border-left:1px solid #a0a0a0;border-right:1px solid #fff;border-bottom:1px solid #fff"></div>
<div class="a" style="left:1961px;top:1289px;width:43px;height:37px;border-top:1px solid #a0a0a0;border-left:1px solid #a0a0a0;border-right:1px solid #fff;border-bottom:1px solid #fff"></div>
<div class="a" style="left:2012px;top:1289px;width:43px;height:37px;border-top:1px solid #a0a0a0;border-left:1px solid #a0a0a0;border-right:1px solid #fff;border-bottom:1px solid #fff"></div>
<div class="a" style="left:134px;top:1286px;width:1px;height:44px;background:#a0a0a0"></div>
<div class="a" style="left:135px;top:1286px;width:1px;height:44px;background:#fff"></div>
<div class="a" style="left:585px;top:1286px;width:1px;height:44px;background:#a0a0a0"></div>
<div class="a" style="left:586px;top:1286px;width:1px;height:44px;background:#fff"></div>
<div class="a" style="left:1957px;top:1286px;width:1px;height:44px;background:#a0a0a0"></div>
<div class="a" style="left:1958px;top:1286px;width:1px;height:44px;background:#fff"></div>
<div class="a" style="left:2008px;top:1286px;width:1px;height:44px;background:#a0a0a0"></div>
<div class="a" style="left:2009px;top:1286px;width:1px;height:44px;background:#fff"></div>
<div class="a" style="left:2059px;top:1286px;width:1px;height:44px;background:#a0a0a0"></div>
<div class="a" style="left:2060px;top:1286px;width:1px;height:44px;background:#fff"></div>
<svg class="a" style="left:1970px;top:1295px;" width="28" height="28" viewBox="0 0 28 28"><rect x="3" y="3" width="22" height="22" rx="9" fill="#a0a0a0"/><rect x="12.5" y="10" width="3" height="11" fill="#fff"/><rect x="12.5" y="6" width="3" height="3" fill="#fff"/><path d="M3 3 L25 25" stroke="#f00" stroke-width="3" stroke-linecap="round"/></svg>
<div class="t" style="left:2022px;top:1300.95px;font-size:16.6px;color:#1a1a40;transform:scaleY(1.1);transform-origin:0 13.05px;">RU</div>
<div class="a" style="left:1025px;top:478px;width:439px;height:672px;background:#f0f0f0;border:1px solid #a0a0a0;border-right:2px solid #a0a0a0;border-bottom:2px solid #a0a0a0"></div>
<div class="a" style="left:1029px;top:481px;width:430px;height:32px;background:#0078d7"></div>
<div class="a" style="left:1021px;top:477px;width:443px;height:41px;border:3.5px solid #ff0000"></div>
<div class="t" style="left:1062.5px;top:490.33px;font-size:17.8px;color:#fff;">Детализация по смете...</div>
<div class="t" style="left:1062.5px;top:532.63px;font-size:17.8px;color:#000;">Рассчитать сводную смету</div>
<div class="t" style="right:622px;top:532.63px;font-size:17.8px;color:#000;">Ctrl+I</div>
<svg class="a" style="left:1034px;top:529.7px;" width="20" height="24" viewBox="0 0 20 24"><rect x="2" y="1" width="15" height="21" rx="1" fill="#e8dcc0" stroke="#888"/><rect x="4" y="3" width="11" height="4" fill="#208080"/><path d="M4 10 H15 M4 13 H15 M4 16 H15 M4 19 H15 M7 9 V21 M10 9 V21 M13 9 V21" stroke="#aaa" stroke-width=".8"/></svg>
<div class="t" style="left:1062.5px;top:563.93px;font-size:17.8px;color:#000;">Учитывать ПНР только "Вхолостую"</div>
<div class="t" style="right:622px;top:563.93px;font-size:17.8px;color:#000;">Ctrl+T</div>
<div class="t" style="left:1062.5px;top:595.43px;font-size:17.8px;color:#000;">Обновить признак ПР/НПР для ЛС/ОСР</div>
<div class="a" style="left:1031px;top:625px;width:426px;height:1px;background:#bdbdbd"></div>
<div class="a" style="left:1031px;top:626px;width:426px;height:1px;background:#fff"></div>
<div class="t" style="left:1062.5px;top:639.63px;font-size:17.8px;color:#000;">Добавить новую главу</div>
<svg class="a" style="left:1031px;top:633.7px;" width="25" height="24" viewBox="0 0 25 24"><path d="M1 8 H9 L11 10 H23 V23 H1 Z" fill="#f8e070" stroke="#c0a030"/><rect x="15" y="1" width="8" height="8" fill="#f08020"/><circle cx="19" cy="5" r="2" fill="#fff"/></svg>
<div class="t" style="left:1062.5px;top:670.93px;font-size:17.8px;color:#000;">Добавить начисление</div>
<svg class="a" style="left:1032px;top:666.0px;" width="24" height="24" viewBox="0 0 24 24"><path d="M2 5 H15 L19 9 V23 H2 Z" fill="#60b8f0" stroke="#3a5a80"/><path d="M5 12 H15 M5 15 H15 M5 18 H15" stroke="#fff"/><circle cx="18" cy="5" r="4.5" fill="#fff060"/></svg>
<div class="a" style="left:1031px;top:700px;width:426px;height:1px;background:#bdbdbd"></div>
<div class="a" style="left:1031px;top:701px;width:426px;height:1px;background:#fff"></div>
<div class="t" style="left:1062.5px;top:713.93px;font-size:17.8px;color:#000;">Удалить</div>
<div class="t" style="right:622px;top:713.93px;font-size:17.8px;color:#000;">Ctrl+Del</div>
<svg class="a" style="left:1032px;top:710.0px;" width="24" height="22" viewBox="0 0 24 22"><path d="M3 2 L21 20 M21 2 L3 20" stroke="#e01010" stroke-width="2.6"/></svg>
<div class="t" style="left:1062.5px;top:745.43px;font-size:17.8px;color:#000;">Очистить сводную смету</div>
<div class="a" style="left:1031px;top:775px;width:426px;height:1px;background:#bdbdbd"></div>
<div class="a" style="left:1031px;top:776px;width:426px;height:1px;background:#fff"></div>
<div class="t" style="left:1062.5px;top:789.63px;font-size:17.8px;color:#000;">Установить тип строки</div>
<svg class="a" style="left:1440px;top:790.7px;" width="8" height="12" viewBox="0 0 8 12"><path d="M1 1 L7 6 L1 11 Z" fill="#000"/></svg>
<div class="t" style="left:1062.5px;top:820.93px;font-size:17.8px;color:#000;">Действие</div>
<svg class="a" style="left:1440px;top:822.0px;" width="8" height="12" viewBox="0 0 8 12"><path d="M1 1 L7 6 L1 11 Z" fill="#000"/></svg>
<div class="t" style="left:1062.5px;top:852.53px;font-size:17.8px;color:#000;">Объединение</div>
<svg class="a" style="left:1440px;top:853.6px;" width="8" height="12" viewBox="0 0 8 12"><path d="M1 1 L7 6 L1 11 Z" fill="#000"/></svg>
<div class="t" style="left:1062.5px;top:883.93px;font-size:17.8px;color:#000;">Установить признак печати</div>
<svg class="a" style="left:1440px;top:885.0px;" width="8" height="12" viewBox="0 0 8 12"><path d="M1 1 L7 6 L1 11 Z" fill="#000"/></svg>
<div class="t" style="left:1062.5px;top:915.43px;font-size:17.8px;color:#000;">Указать итог сводной сметы</div>
<svg class="a" style="left:1440px;top:916.5px;" width="8" height="12" viewBox="0 0 8 12"><path d="M1 1 L7 6 L1 11 Z" fill="#000"/></svg>
<div class="t" style="left:1062.5px;top:946.93px;font-size:17.8px;color:#000;">Признак расчета</div>
<svg class="a" style="left:1440px;top:948.0px;" width="8" height="12" viewBox="0 0 8 12"><path d="M1 1 L7 6 L1 11 Z" fill="#000"/></svg>
<div class="a" style="left:1031px;top:976px;width:426px;height:1px;background:#bdbdbd"></div>
<div class="a" style="left:1031px;top:977px;width:426px;height:1px;background:#fff"></div>
<div class="t" style="left:1062.5px;top:989.93px;font-size:17.8px;color:#000;">Экспорт</div>
<svg class="a" style="left:1440px;top:991.0px;" width="8" height="12" viewBox="0 0 8 12"><path d="M1 1 L7 6 L1 11 Z" fill="#000"/></svg>
<div class="a" style="left:1031px;top:1020px;width:426px;height:1px;background:#bdbdbd"></div>
<div class="a" style="left:1031px;top:1021px;width:426px;height:1px;background:#fff"></div>
<div class="t" style="left:1062.5px;top:1033.43px;font-size:17.8px;color:#000;">Вид</div>
<svg class="a" style="left:1440px;top:1034.5px;" width="8" height="12" viewBox="0 0 8 12"><path d="M1 1 L7 6 L1 11 Z" fill="#000"/></svg>
<div class="a" style="left:1031px;top:1063px;width:426px;height:1px;background:#bdbdbd"></div>
<div class="a" style="left:1031px;top:1064px;width:426px;height:1px;background:#fff"></div>
<div class="t" style="left:1062.5px;top:1077.33px;font-size:17.8px;color:#000;">Показывать итоги</div>
<svg class="a" style="left:1440px;top:1078.4px;" width="8" height="12" viewBox="0 0 8 12"><path d="M1 1 L7 6 L1 11 Z" fill="#000"/></svg>
<div class="a" style="left:1031px;top:1107px;width:426px;height:1px;background:#bdbdbd"></div>
<div class="a" style="left:1031px;top:1108px;width:426px;height:1px;background:#fff"></div>
<div class="t" style="left:1062.5px;top:1120.43px;font-size:17.8px;color:#000;">Настроить это меню...</div>
</body></html>
